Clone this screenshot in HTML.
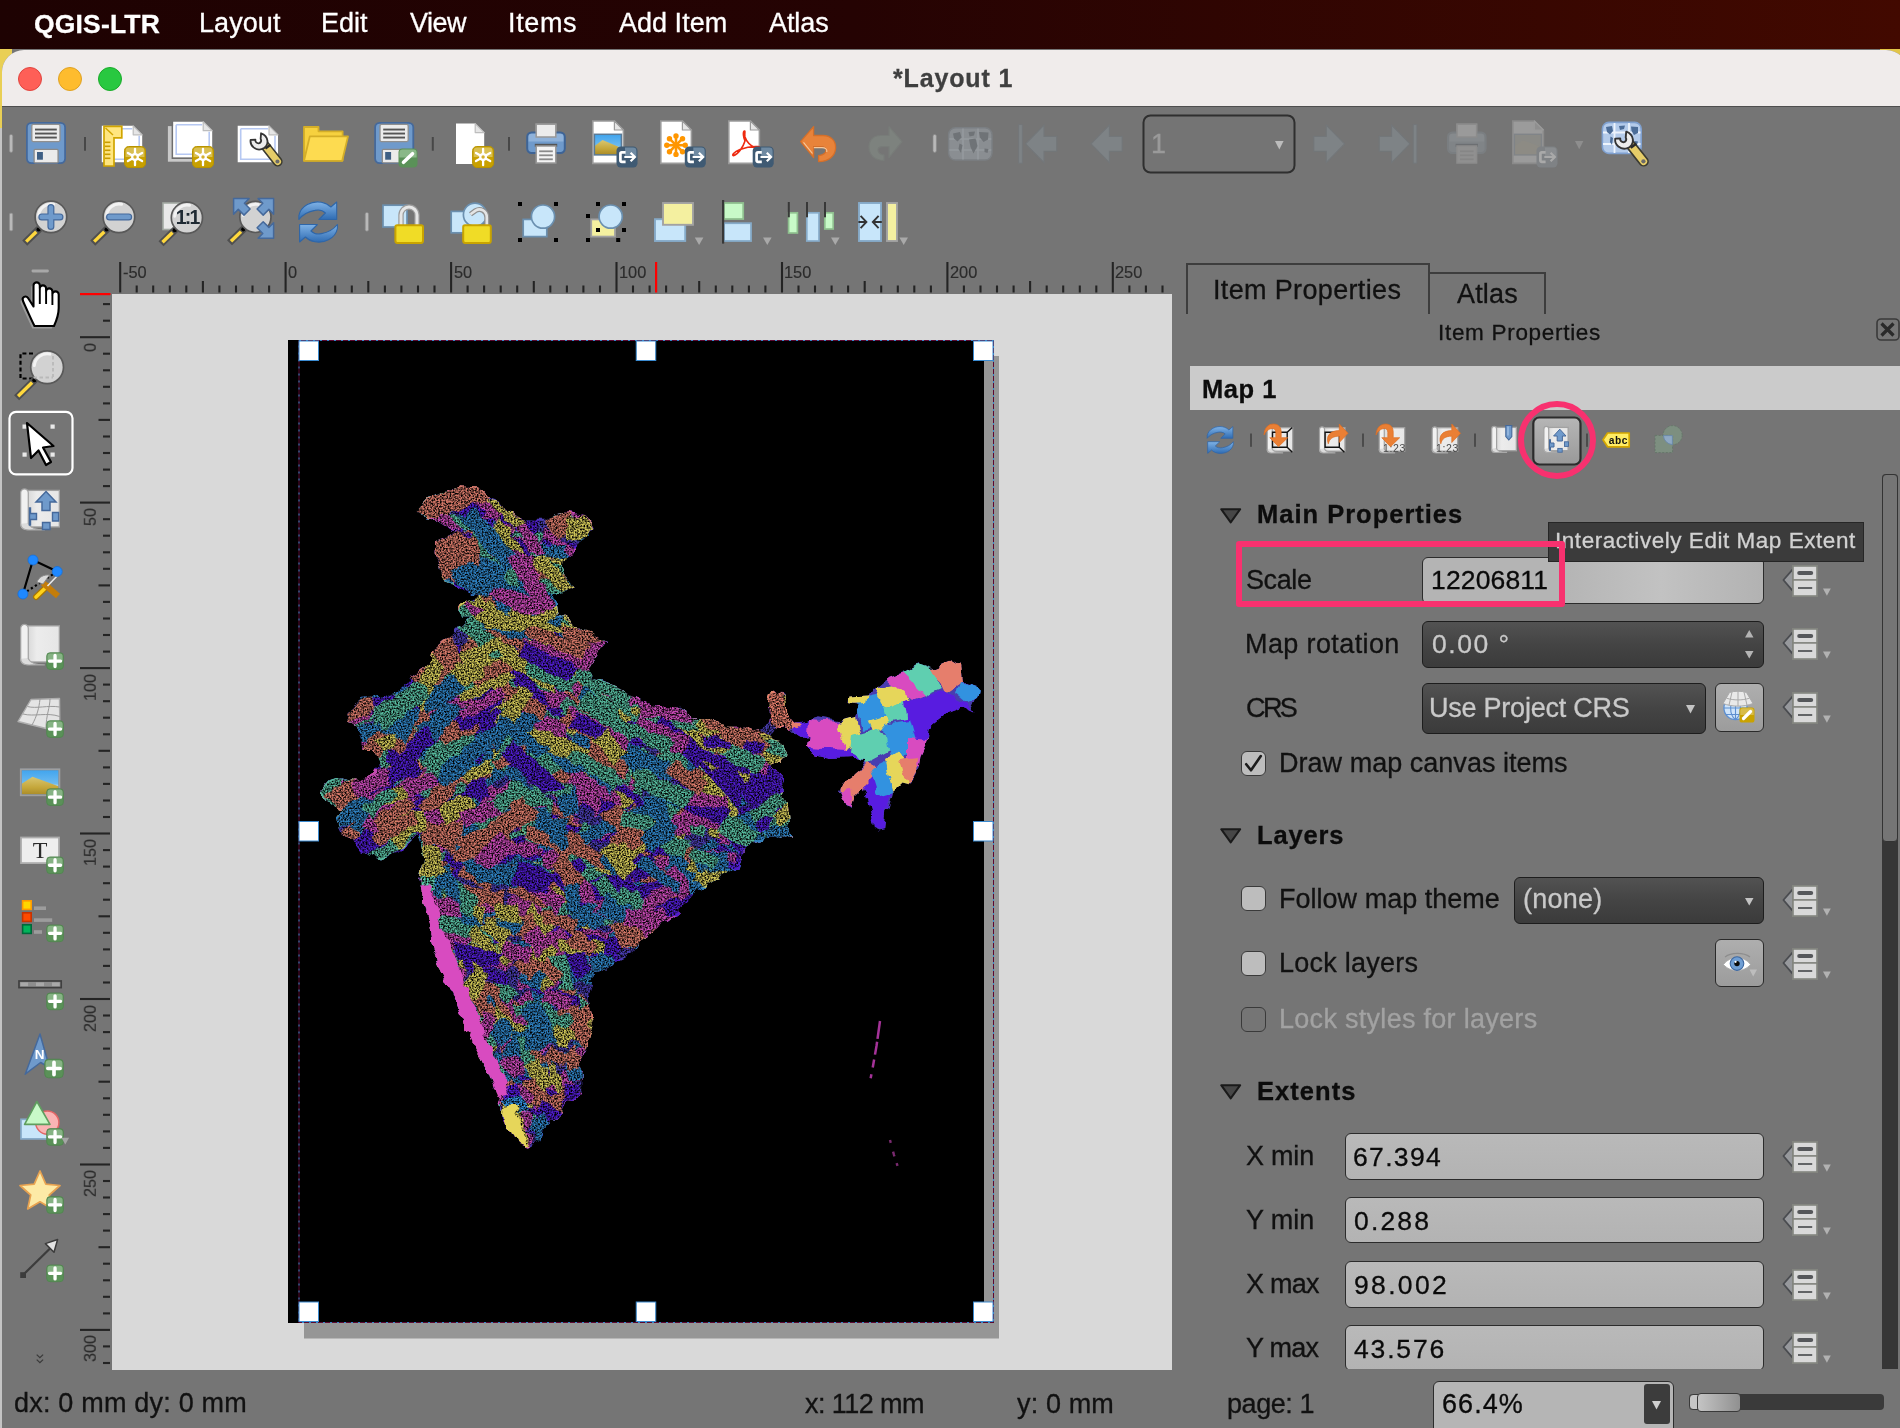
<!DOCTYPE html><html><head><meta charset="utf-8"><title>*Layout 1</title><style>
html,body{margin:0;padding:0}
body{width:1900px;height:1428px;position:relative;overflow:hidden;background:#757575;font-family:"Liberation Sans",sans-serif;}
.t{position:absolute;white-space:pre;will-change:transform;-webkit-text-stroke:0.300px currentColor;}
.abs{position:absolute}
svg{position:absolute;overflow:visible}
#menubar{position:absolute;left:0;top:0;width:1900px;height:49px;background:linear-gradient(90deg,#1e0202 0%,#250303 45%,#420900 100%);}
#deskL{position:absolute;left:0;top:49px;width:12px;height:82px;background:#e9cf55}
#deskR{position:absolute;left:1880px;top:49px;width:20px;height:20px;background:#e2c548}
#edgeL{position:absolute;left:0;top:128px;width:3px;height:1300px;background:#c4c4c4}
#win{position:absolute;left:2px;top:49.500px;width:1906px;height:1400px;background:#757575;border-radius:22px 22px 12px 12px;overflow:hidden}
#titlebar{position:absolute;left:0;top:0;width:100%;height:56px;background:#f0eceb;border-bottom:1.5px solid #4e4e4e}
.tl{position:absolute;top:17px;width:24px;height:24px;border-radius:50%;box-sizing:border-box}
#canvas{position:absolute;left:112px;top:294px;width:1060px;height:1076px;background:#d9d9d9;overflow:hidden}

.tab{position:absolute;box-sizing:border-box;border:2px solid #3d3d3d;border-bottom:none}
#band{position:absolute;left:1190px;top:366px;width:720px;height:44px;background:#cbcbcb}
.inp{position:absolute;box-sizing:border-box;border:1.5px solid #2c2c2c;border-radius:6px;background:linear-gradient(180deg,#b9b9b9,#b3b3b3)}
.dark{position:absolute;box-sizing:border-box;border:1.5px solid #1d1d1d;border-radius:6px;background:linear-gradient(180deg,#525252 0%,#444 50%,#3b3b3b 100%)}
.btn{position:absolute;box-sizing:border-box;border:1.5px solid #2a2a2a;border-radius:6px;background:linear-gradient(180deg,#aeaeae,#9c9c9c)}
.cb{position:absolute;box-sizing:border-box;width:25px;height:25px;border:1.5px solid #3a3a3a;border-radius:6px;background:#bdbdbd}
#tip{position:absolute;left:1548px;top:522px;width:316px;height:40px;box-sizing:border-box;background:#3b3b3b;border:1.5px solid #262626}
#hl{position:absolute;left:1236px;top:541px;width:329px;height:66px;box-sizing:border-box;border:6px solid #f8316f;border-radius:3px}
#ring{position:absolute;left:1518px;top:401px;width:78px;height:78px;box-sizing:border-box;border:6px solid #f8316f;border-radius:50%}
</style></head><body>
<div id="deskL"></div><div id="deskR"></div><div id="edgeL"></div>
<div id="win"><div id="titlebar">
<div class="tl" style="left:16px;background:#fe5f57;border:1px solid #e0443e"></div>
<div class="tl" style="left:56px;background:#febc2e;border:1px solid #dea123"></div>
<div class="tl" style="left:96px;background:#28c840;border:1px solid #1aab29"></div>
</div></div>
<div id="menubar"></div>
<span class="t" style="left:33.54px;top:10.67px;font-size:26.50px;line-height:26.50px;color:#ffffff;letter-spacing:0.163px;font-weight:bold;">QGIS-LTR</span>
<span class="t" style="left:198.74px;top:10.14px;font-size:27.00px;line-height:27.00px;color:#ffffff;letter-spacing:0.079px;">Layout</span>
<span class="t" style="left:321.24px;top:10.14px;font-size:27.00px;line-height:27.00px;color:#ffffff;letter-spacing:0.018px;">Edit</span>
<span class="t" style="left:410.47px;top:10.14px;font-size:27.00px;line-height:27.00px;color:#ffffff;letter-spacing:-0.505px;">View</span>
<span class="t" style="left:508.32px;top:10.14px;font-size:27.00px;line-height:27.00px;color:#ffffff;letter-spacing:0.652px;">Items</span>
<span class="t" style="left:619.25px;top:10.14px;font-size:27.00px;line-height:27.00px;color:#ffffff;letter-spacing:0.017px;">Add Item</span>
<span class="t" style="left:768.75px;top:10.14px;font-size:27.00px;line-height:27.00px;color:#ffffff;letter-spacing:-0.095px;">Atlas</span>
<span class="t" style="left:892.88px;top:65.94px;font-size:25.00px;line-height:25.00px;color:#3f3f3f;letter-spacing:0.856px;font-weight:bold;">*Layout 1</span>
<svg style="left:0;top:0" width="1900" height="1428" viewBox="0 0 1900 1428"><rect x="9.4" y="134.4" width="3.4" height="18" rx="1.7" fill="#b9b9b9" stroke="#8a8a8a" stroke-width="0.7"/><g transform="translate(26 122)"><rect x="0.9" y="0.9" width="38.2" height="40.2" rx="4.5" fill="#6f9acb" stroke="#45699b" stroke-width="1.8"/><rect x="5.8" y="2.3" width="28.2" height="17.3" rx="1.5" fill="#ececec" stroke="#8f8f8f" stroke-width="1.3"/><rect x="9" y="6.6" width="21.8" height="1.9" fill="#555"/><rect x="9" y="10.6" width="21.8" height="1.9" fill="#555"/><rect x="9" y="14.6" width="21.8" height="1.9" fill="#555"/><rect x="8.1" y="27.4" width="24" height="13.4" rx="1" fill="#ebebeb" stroke="#8a8a8a" stroke-width="1.3"/><rect x="11" y="30" width="5.9" height="7.7" fill="#3e5f84"/></g><rect x="84" y="137" width="2" height="13.7" fill="#474747"/><g transform="translate(101.8 125.8)"><path d="M0 0H31.4L40.4 9V36.5H0Z" fill="#fff" stroke="none" stroke-width="1.6"/><path d="M3 3H30.4M37.4 10V33.5H3V3" fill="none" stroke="#b6c8f2" stroke-width="1.6"/><path d="M31.4 0V9H40.4Z" fill="#e6e6e6" stroke="#bdbdbd" stroke-width="1.2" stroke-linejoin="round"/></g><path d="M104 126.4H121.8V137.8H114V166H104Z" fill="#ffe680" stroke="#d1a500" stroke-width="1.7"/><path d="M105.5 128L113 135" stroke="#d1a500" stroke-width="1.4"/><rect x="104.8" y="141.5" width="5.6" height="1.6" fill="#c99c00"/><rect x="104.8" y="145.5" width="5.6" height="1.6" fill="#c99c00"/><rect x="104.8" y="149.5" width="5.6" height="1.6" fill="#c99c00"/><rect x="104.8" y="153.5" width="5.6" height="1.6" fill="#c99c00"/><rect x="104.8" y="157.5" width="5.6" height="1.6" fill="#c99c00"/><g transform="translate(124 146)"><rect x="0.5" y="0.5" width="21" height="21" rx="4.2" fill="#c8a000" stroke="#b89400" stroke-width="1"/><path d="M1.6 11V5a3.4 3.4 0 0 1 3.4-3.4H17a3.4 3.4 0 0 1 3.4 3.4V11Z" fill="#d9bf52"/><line x1="11" y1="11" x2="11.00" y2="2.80" stroke="#fff" stroke-width="2.3" stroke-linecap="round"/><line x1="11" y1="11" x2="3.90" y2="6.90" stroke="#fff" stroke-width="2.3" stroke-linecap="round"/><line x1="11" y1="11" x2="3.90" y2="15.10" stroke="#fff" stroke-width="2.3" stroke-linecap="round"/><line x1="11" y1="11" x2="11.00" y2="19.20" stroke="#fff" stroke-width="2.3" stroke-linecap="round"/><line x1="11" y1="11" x2="18.10" y2="15.10" stroke="#fff" stroke-width="2.3" stroke-linecap="round"/><line x1="11" y1="11" x2="18.10" y2="6.90" stroke="#fff" stroke-width="2.3" stroke-linecap="round"/><circle cx="11" cy="11" r="3.9" fill="#fff"/><circle cx="11" cy="11" r="1.7" fill="#d4b030"/></g><rect x="167.9" y="126.1" width="36" height="35.6" fill="#c9c9c9"/><path d="M172.400 121.700V158.100H212.200" fill="none" stroke="#6e6e6e" stroke-width="1.600"/><g transform="translate(173.2 121.7)"><path d="M0 0H30L39 9V35.6H0Z" fill="#fff" stroke="none" stroke-width="1.6"/><path d="M3 3H29M36 10V32.6H3V3" fill="none" stroke="#b6c8f2" stroke-width="1.6"/><path d="M30 0V9H39Z" fill="#e6e6e6" stroke="#bdbdbd" stroke-width="1.2" stroke-linejoin="round"/></g><g transform="translate(192 146)"><rect x="0.5" y="0.5" width="21" height="21" rx="4.2" fill="#c8a000" stroke="#b89400" stroke-width="1"/><path d="M1.6 11V5a3.4 3.4 0 0 1 3.4-3.4H17a3.4 3.4 0 0 1 3.4 3.4V11Z" fill="#d9bf52"/><line x1="11" y1="11" x2="11.00" y2="2.80" stroke="#fff" stroke-width="2.3" stroke-linecap="round"/><line x1="11" y1="11" x2="3.90" y2="6.90" stroke="#fff" stroke-width="2.3" stroke-linecap="round"/><line x1="11" y1="11" x2="3.90" y2="15.10" stroke="#fff" stroke-width="2.3" stroke-linecap="round"/><line x1="11" y1="11" x2="11.00" y2="19.20" stroke="#fff" stroke-width="2.3" stroke-linecap="round"/><line x1="11" y1="11" x2="18.10" y2="15.10" stroke="#fff" stroke-width="2.3" stroke-linecap="round"/><line x1="11" y1="11" x2="18.10" y2="6.90" stroke="#fff" stroke-width="2.3" stroke-linecap="round"/><circle cx="11" cy="11" r="3.9" fill="#fff"/><circle cx="11" cy="11" r="1.7" fill="#d4b030"/></g><g transform="translate(237.7 125.8)"><path d="M0 0H31.3L40.3 9V36.5H0Z" fill="#fff" stroke="none" stroke-width="1.6"/><path d="M3 3H30.3M37.3 10V33.5H3V3" fill="none" stroke="#b6c8f2" stroke-width="1.6"/><path d="M31.3 0V9H40.3Z" fill="#e6e6e6" stroke="#bdbdbd" stroke-width="1.2" stroke-linejoin="round"/></g><g transform="translate(248.3 128.6) scale(1.2)"><line x1="13" y1="13" x2="24.5" y2="27.5" stroke="#3a3a30" stroke-width="8.2" stroke-linecap="round"/><line x1="13" y1="13" x2="24.5" y2="27.5" stroke="#e6cd68" stroke-width="5.6" stroke-linecap="round"/><line x1="14.2" y1="16.6" x2="18.6" y2="13.4" stroke="#2a2a2a" stroke-width="2"/><circle cx="24.3" cy="27.4" r="1.7" fill="#6a6a6a"/><path d="M2.2 8.4C0.8 13.4 5.2 18 10.2 17.4C13.6 17 16 14.2 16 11C16 8 14.4 5.6 11.6 4.2L10.6 8.8C11.4 10.4 10.2 12.4 8.4 12.2C6.800 12 5.6 10.400 6.200 8.8Z" fill="#ececec" stroke="#333" stroke-width="1.5" stroke-linejoin="round" transform="rotate(-8 9 11)"/></g><path d="M304 127H318.500V131.300H342.600V160.600H304Z" fill="#f6d13f" stroke="#d4ae28" stroke-width="1.8" stroke-linejoin="round"/><path d="M309.800 136.400H348L342.200 160.800H304Z" fill="#fddb50" stroke="#d4ae28" stroke-width="1.8" stroke-linejoin="round"/><g transform="translate(374.2 122)"><rect x="0.9" y="0.9" width="38.2" height="40.2" rx="4.5" fill="#6f9acb" stroke="#45699b" stroke-width="1.8"/><rect x="5.8" y="2.3" width="28.2" height="17.3" rx="1.5" fill="#ececec" stroke="#8f8f8f" stroke-width="1.3"/><rect x="9" y="6.6" width="21.8" height="1.9" fill="#555"/><rect x="9" y="10.6" width="21.8" height="1.9" fill="#555"/><rect x="9" y="14.6" width="21.8" height="1.9" fill="#555"/><rect x="8.1" y="27.4" width="24" height="13.4" rx="1" fill="#ebebeb" stroke="#8a8a8a" stroke-width="1.3"/><rect x="11" y="30" width="5.9" height="7.7" fill="#3e5f84"/></g><g transform="translate(398 148)"><rect x="0.5" y="0.5" width="19" height="19" rx="4" fill="#5a9158"/><path d="M1.4 9.5V4.6a3.2 3.2 0 0 1 3.2-3.2H15.4a3.2 3.2 0 0 1 3.2 3.2V9.5Z" fill="#8ab888"/><line x1="5.5" y1="14.3" x2="14.5" y2="5.7" stroke="#fff" stroke-width="3.6" stroke-linecap="round"/></g><rect x="431.8" y="137" width="2" height="13.7" fill="#474747"/><g transform="translate(456 123.6)"><path d="M0 0H19.2L28.2 9V40.4H0Z" fill="#fff" stroke="none" stroke-width="1.6"/><path d="M19.2 0V9H28.2Z" fill="#e6e6e6" stroke="#bdbdbd" stroke-width="1.2" stroke-linejoin="round"/></g><g transform="translate(472.1 146)"><rect x="0.5" y="0.5" width="21" height="21" rx="4.2" fill="#c8a000" stroke="#b89400" stroke-width="1"/><path d="M1.6 11V5a3.4 3.4 0 0 1 3.4-3.4H17a3.4 3.4 0 0 1 3.4 3.4V11Z" fill="#d9bf52"/><line x1="11" y1="11" x2="11.00" y2="2.80" stroke="#fff" stroke-width="2.3" stroke-linecap="round"/><line x1="11" y1="11" x2="3.90" y2="6.90" stroke="#fff" stroke-width="2.3" stroke-linecap="round"/><line x1="11" y1="11" x2="3.90" y2="15.10" stroke="#fff" stroke-width="2.3" stroke-linecap="round"/><line x1="11" y1="11" x2="11.00" y2="19.20" stroke="#fff" stroke-width="2.3" stroke-linecap="round"/><line x1="11" y1="11" x2="18.10" y2="15.10" stroke="#fff" stroke-width="2.3" stroke-linecap="round"/><line x1="11" y1="11" x2="18.10" y2="6.90" stroke="#fff" stroke-width="2.3" stroke-linecap="round"/><circle cx="11" cy="11" r="3.9" fill="#fff"/><circle cx="11" cy="11" r="1.7" fill="#d4b030"/></g><rect x="508" y="137" width="2" height="13.7" fill="#474747"/><g transform="translate(526.2 123.4)"><rect x="10" y="0.8" width="19.6" height="14" fill="#ececec" stroke="#999" stroke-width="1.5"/><rect x="1" y="9" width="37.6" height="20.6" rx="4.4" fill="#6f9acb" stroke="#3e6496" stroke-width="2"/><path d="M2.4 18V13.6a3.2 3.2 0 0 1 3.2-3.2H34a3.2 3.2 0 0 1 3.2 3.2V18Z" fill="#8fb2da"/><rect x="10" y="0.800" width="19.600" height="12.800" fill="#ececec" stroke="#999" stroke-width="1.500"/><rect x="8.6" y="20.4" width="22.4" height="3" fill="#555"/><rect x="10" y="22.6" width="19.6" height="17" fill="#f4f4f4" stroke="#999" stroke-width="1.5"/><rect x="13" y="27" width="13.6" height="1.8" fill="#8a8a8a"/><rect x="13" y="31" width="13.6" height="1.8" fill="#8a8a8a"/><rect x="13" y="35" width="13.6" height="1.8" fill="#8a8a8a"/></g><g transform="translate(592.8 121)"><path d="M0 0H21.6L30.6 9V42.4H0Z" fill="#fff" stroke="#9a9a9a" stroke-width="1.6"/><path d="M21.6 0V9H30.6Z" fill="#e6e6e6" stroke="#9a9a9a" stroke-width="1.2" stroke-linejoin="round"/></g><g transform="translate(594.4 134.3)"><defs><linearGradient id="pg594_134" x1="0" y1="0" x2="0" y2="1"><stop offset="0" stop-color="#3fa4ee"/><stop offset="0.55" stop-color="#6dbaf0"/><stop offset="0.7" stop-color="#d0e4f0"/></linearGradient><linearGradient id="pg594_134s" x1="0" y1="0" x2="0" y2="1"><stop offset="0" stop-color="#d9c670"/><stop offset="0.6" stop-color="#c4a63a"/><stop offset="1" stop-color="#a88a28"/></linearGradient></defs><rect x="0" y="0" width="27" height="20.6" fill="url(#pg594_134)"/><path d="M0 11.948L8.1 5.768L27 13.596V20.6H0Z" fill="url(#pg594_134s)"/><rect x="0" y="0" width="27" height="20.6" fill="none" stroke="#5b7a96" stroke-width="1.5"/></g><g transform="translate(616 146)"><rect x="0.5" y="0.5" width="21" height="21" rx="4.2" fill="#3f5a73"/><path d="M9 1.6H17a3.4 3.4 0 0 1 3.4 3.4V10.5H9Z" fill="#6f8aa2"/><path d="M9.6 6.3H5.8a1.4 1.4 0 0 0-1.4 1.4v6.8a1.4 1.4 0 0 0 1.4 1.4H9.6" fill="none" stroke="#fff" stroke-width="2.7"/><path d="M8.3 11H18.5M14.6 6.7L18.9 11L14.6 15.3" fill="none" stroke="#fff" stroke-width="2.2"/></g><g transform="translate(660.8 121)"><path d="M0 0H21.6L30.6 9V42.4H0Z" fill="#fff" stroke="#9a9a9a" stroke-width="1.6"/><path d="M21.6 0V9H30.6Z" fill="#e6e6e6" stroke="#9a9a9a" stroke-width="1.2" stroke-linejoin="round"/></g><line x1="676" y1="145.2" x2="676.00" y2="136.00" stroke="#ff9600" stroke-width="2.6"/><circle cx="676.00" cy="136.00" r="2.7" fill="#ff9600"/><line x1="676" y1="145.2" x2="669.49" y2="138.69" stroke="#ff9600" stroke-width="2.6"/><circle cx="669.49" cy="138.69" r="2.7" fill="#ff9600"/><line x1="676" y1="145.2" x2="666.80" y2="145.20" stroke="#ff9600" stroke-width="2.6"/><circle cx="666.80" cy="145.20" r="2.7" fill="#ff9600"/><line x1="676" y1="145.2" x2="669.49" y2="151.71" stroke="#ff9600" stroke-width="2.6"/><circle cx="669.49" cy="151.71" r="2.7" fill="#ff9600"/><line x1="676" y1="145.2" x2="676.00" y2="154.40" stroke="#ff9600" stroke-width="2.6"/><circle cx="676.00" cy="154.40" r="2.7" fill="#ff9600"/><line x1="676" y1="145.2" x2="682.51" y2="151.71" stroke="#ff9600" stroke-width="2.6"/><circle cx="682.51" cy="151.71" r="2.7" fill="#ff9600"/><line x1="676" y1="145.2" x2="685.20" y2="145.20" stroke="#ff9600" stroke-width="2.6"/><circle cx="685.20" cy="145.20" r="2.7" fill="#ff9600"/><line x1="676" y1="145.2" x2="682.51" y2="138.69" stroke="#ff9600" stroke-width="2.6"/><circle cx="682.51" cy="138.69" r="2.7" fill="#ff9600"/><g transform="translate(684.3 146)"><rect x="0.5" y="0.5" width="21" height="21" rx="4.2" fill="#3f5a73"/><path d="M9 1.6H17a3.4 3.4 0 0 1 3.4 3.4V10.5H9Z" fill="#6f8aa2"/><path d="M9.6 6.3H5.8a1.4 1.4 0 0 0-1.4 1.4v6.8a1.4 1.4 0 0 0 1.4 1.4H9.6" fill="none" stroke="#fff" stroke-width="2.7"/><path d="M8.3 11H18.5M14.6 6.7L18.9 11L14.6 15.3" fill="none" stroke="#fff" stroke-width="2.2"/></g><g transform="translate(728.8 121)"><path d="M0 0H21.6L30.6 9V42.4H0Z" fill="#fff" stroke="#9a9a9a" stroke-width="1.6"/><path d="M21.6 0V9H30.6Z" fill="#e6e6e6" stroke="#9a9a9a" stroke-width="1.2" stroke-linejoin="round"/></g><path d="M744.400 131C742.600 131.600 743.400 137.400 745 141C743 147.500 738 154.500 733.500 155.600C731.500 155.400 733.500 152 740 149.500C746 147.200 752 146 758.500 146.600C761 147.400 759 149 755.500 148C751 146 746.500 141.500 745 137C744.200 134.200 745.600 130.800 744.400 131Z" fill="none" stroke="#ee2a10" stroke-width="1.6" stroke-linejoin="round"/><g transform="translate(752.2 146)"><rect x="0.5" y="0.5" width="21" height="21" rx="4.2" fill="#3f5a73"/><path d="M9 1.6H17a3.4 3.4 0 0 1 3.4 3.4V10.5H9Z" fill="#6f8aa2"/><path d="M9.6 6.3H5.8a1.4 1.4 0 0 0-1.4 1.4v6.8a1.4 1.4 0 0 0 1.4 1.4H9.6" fill="none" stroke="#fff" stroke-width="2.7"/><path d="M8.3 11H18.5M14.6 6.7L18.9 11L14.6 15.3" fill="none" stroke="#fff" stroke-width="2.2"/></g><path d="M800.600 141.600L813.600 126.600V135.500H823C831 135.500 836 141 835.600 148C835.200 156 829 161.600 818.600 161.600V155.600C824 155 826.400 152.400 826 149.600C825.600 147.400 824 146.600 821.400 146.600H813.600V157.600Z" fill="#e8833a" stroke="#d46f2a" stroke-width="1.3" stroke-linejoin="round"/><path d="M803.500 142.400L812.500 153.500M813.800 147.600H822C825 147.600 827.400 149 826.800 152" fill="none" stroke="#f8c89a" stroke-width="1.1"/><path d="M902 141.600L889 126.600V135.500H880.600C872.600 135.500 868.600 141 869 148C869.400 155 875 160.500 884 160.500V155C879.600 154.600 877.600 152 878 149.400C878.400 147.400 880 146.600 882.600 146.600H889V157.600Z" fill="#7d827e" stroke="#787c79" stroke-width="1.2" stroke-linejoin="round"/><rect x="933" y="134.4" width="3.4" height="18" rx="1.7" fill="#b9b9b9" stroke="#8a8a8a" stroke-width="0.7"/><rect x="948.600" y="127.800" width="43.400" height="32.200" rx="7" fill="#8a8e92" stroke="#7b7f83" stroke-width="1.4"/><path d="M963 128.500V159.500M978 128.500V159.500M949.300 139H991.300M949.300 150H991.300" stroke="#959a9e" stroke-width="1.6"/><path d="M953 133.500L960 132L961.500 137.500L957.500 141.500L954 138.500ZM959.500 143.500L962.500 145L961 153L958.500 149ZM968.500 132L975 131.500L974 135.500L969.500 136.500ZM969 139.500L975.500 138.500L977.500 146L973.500 153.500L970.500 147ZM979 132L988.500 132.500L988 139.500L983.500 142L980 137.500ZM984.500 148.500L988.500 149L987.500 153L984.500 152Z" fill="#6f7377"/><rect x="1018.700" y="124.600" width="3.600" height="38.600" fill="#7e8386" stroke="#73777a" stroke-width="0.9"/><path d="M1025.600 143.800L1044 125V136.400H1056.800V151.200H1044V162.600Z" fill="#7e8386" stroke="#73777a" stroke-width="1.1"/><path d="M1091 143.800L1109.400 125V136.400H1122.200V151.200H1109.400V162.600Z" fill="#7e8386" stroke="#73777a" stroke-width="1.1"/><rect x="1143.500" y="115.500" width="151" height="57" rx="7" fill="#747474" stroke="#2f2f2f" stroke-width="2"/><path d="M1275 141h8.6l-4.3 8.4Z" fill="#bcbcbc"/><path d="M1344.600 143.800L1326.200 125V136.400H1313.800V151.200H1326.200V162.600Z" fill="#7e8386" stroke="#73777a" stroke-width="1.1"/><path d="M1410 143.800L1391.600 125V136.400H1379.200V151.200H1391.600V162.600Z" fill="#7e8386" stroke="#73777a" stroke-width="1.1"/><rect x="1413.300" y="124.600" width="3.600" height="38.600" fill="#7e8386" stroke="#73777a" stroke-width="0.9"/><g transform="translate(1447 123.4)"><rect x="10" y="0.8" width="19.6" height="14" fill="#9a9a9a" stroke="#8c8c8c" stroke-width="1.5"/><rect x="1" y="9" width="37.6" height="20.6" rx="4.4" fill="#808487" stroke="#7a7e81" stroke-width="2"/><path d="M2.4 18V13.6a3.2 3.2 0 0 1 3.2-3.2H34a3.2 3.2 0 0 1 3.2 3.2V18Z" fill="#868a8d"/><rect x="10" y="0.800" width="19.600" height="12.800" fill="#9a9a9a" stroke="#8c8c8c" stroke-width="1.500"/><rect x="8.6" y="20.4" width="22.4" height="3" fill="#6c6f72"/><rect x="10" y="22.6" width="19.6" height="17" fill="#909090" stroke="#8c8c8c" stroke-width="1.5"/><rect x="13" y="27" width="13.6" height="1.8" fill="#868686"/><rect x="13" y="31" width="13.6" height="1.8" fill="#868686"/><rect x="13" y="35" width="13.6" height="1.8" fill="#868686"/></g><g transform="translate(1512.8 121)"><path d="M0 0H21.6L30.6 9V42.4H0Z" fill="#9b9b9b" stroke="#8a8a8a" stroke-width="1.6"/><path d="M21.6 0V9H30.6Z" fill="#8f8f8f" stroke="#9a9a9a" stroke-width="1.2" stroke-linejoin="round"/></g><g transform="translate(1514.4 134.3)"><rect x="0" y="0" width="27" height="20.6" fill="#8a8a86" stroke="#808488" stroke-width="1.4"/><path d="M0.7 11.33L8.64 6.18L26.3 12.36V19.9H0.7Z" fill="#8d8b84"/></g><g transform="translate(1536 146)"><rect x="0.5" y="0.5" width="21" height="21" rx="4.2" fill="#7f8285"/><path d="M9 1.6H17a3.4 3.4 0 0 1 3.4 3.4V10.5H9Z" fill="#8a8d90"/><path d="M9.6 6.3H5.8a1.4 1.4 0 0 0-1.4 1.4v6.8a1.4 1.4 0 0 0 1.4 1.4H9.6" fill="none" stroke="#a9a9a9" stroke-width="2.7"/><path d="M8.3 11H18.5M14.6 6.7L18.9 11L14.6 15.3" fill="none" stroke="#a9a9a9" stroke-width="2.2"/></g><path d="M1575 141h8.4l-4.2 8.2Z" fill="#8e8e8e"/><rect x="1602.400" y="122.400" width="38.800" height="31" rx="6.500" fill="#b4cbea" stroke="#7fa0cf" stroke-width="1.600"/><path d="M1614.500 123V153M1629 123V153M1603 132.500H1640.500M1603 144H1640.500" stroke="#eef4fc" stroke-width="1.800"/><path d="M1606 127L1612 126L1613 131L1610 134.500L1607 132ZM1610.500 136.500L1613 138L1612 145L1610 142ZM1619 126L1625 125.500L1624 129L1620 130ZM1631 126.500L1638 127V133L1634 135L1631.500 131ZM1634.500 141L1638 141.500L1637 145L1634.500 144.500ZM1620 146L1624 145L1623 149.500Z" fill="#4c6d98"/><g transform="translate(1612.8 126.8) scale(1.26)"><line x1="13" y1="13" x2="24.5" y2="27.5" stroke="#3a3a30" stroke-width="8.2" stroke-linecap="round"/><line x1="13" y1="13" x2="24.5" y2="27.5" stroke="#e6cd68" stroke-width="5.6" stroke-linecap="round"/><line x1="14.2" y1="16.6" x2="18.6" y2="13.4" stroke="#2a2a2a" stroke-width="2"/><circle cx="24.3" cy="27.4" r="1.7" fill="#6a6a6a"/><path d="M2.2 8.4C0.8 13.4 5.2 18 10.2 17.4C13.6 17 16 14.2 16 11C16 8 14.4 5.6 11.6 4.2L10.6 8.8C11.4 10.4 10.2 12.4 8.4 12.2C6.800 12 5.6 10.400 6.200 8.8Z" fill="#ececec" stroke="#333" stroke-width="1.5" stroke-linejoin="round" transform="rotate(-8 9 11)"/></g><rect x="9.4" y="213" width="3.4" height="18" rx="1.7" fill="#b9b9b9" stroke="#8a8a8a" stroke-width="0.7"/><line x1="39.5" y1="228.6" x2="24.7" y2="243.1" stroke="#4f4f4f" stroke-width="7.2" stroke-linecap="butt"/><line x1="36.3" y1="231.8" x2="26.2" y2="241.6" stroke="#ffd83d" stroke-width="3.4"/><circle cx="38.6" cy="229.5" r="2.1" fill="#000"/><circle cx="50.9" cy="216.9" r="15.8" fill="#d2d2d2" stroke="#595959" stroke-width="1.7"/><path d="M38.6 215.3a12.6 12.6 0 0 1 15.0 -11.1" fill="none" stroke="#f2f2f2" stroke-width="3" stroke-linecap="round"/><path d="M41.800 216.900H60M50.900 207.600V226.400" stroke="#45699b" stroke-width="7" stroke-linecap="round"/><path d="M41.800 216.900H60M50.900 207.600V226.400" stroke="#6f9acb" stroke-width="4.600" stroke-linecap="round"/><line x1="107.5" y1="228.6" x2="92.7" y2="243.1" stroke="#4f4f4f" stroke-width="7.2" stroke-linecap="butt"/><line x1="104.3" y1="231.8" x2="94.2" y2="241.6" stroke="#ffd83d" stroke-width="3.4"/><circle cx="106.6" cy="229.5" r="2.1" fill="#000"/><circle cx="118.9" cy="216.9" r="15.8" fill="#d2d2d2" stroke="#595959" stroke-width="1.7"/><path d="M106.6 215.3a12.6 12.6 0 0 1 15.0 -11.1" fill="none" stroke="#f2f2f2" stroke-width="3" stroke-linecap="round"/><path d="M109.500 216.900H128.700" stroke="#45699b" stroke-width="7" stroke-linecap="round"/><path d="M109.500 216.900H128.700" stroke="#6f9acb" stroke-width="4.600" stroke-linecap="round"/><rect x="163" y="203" width="21" height="26.500" fill="#e9e9e9" stroke="#a3aaa3" stroke-width="1.600"/><line x1="175.7" y1="229.3" x2="161.0" y2="243.7" stroke="#4f4f4f" stroke-width="7.2" stroke-linecap="butt"/><line x1="172.5" y1="232.5" x2="162.5" y2="242.2" stroke="#ffd83d" stroke-width="3.4"/><circle cx="174.8" cy="230.2" r="2.1" fill="#000"/><circle cx="186.9" cy="217.8" r="15.6" fill="#d2d2d2" stroke="#595959" stroke-width="1.7"/><path d="M174.7 216.2a12.5 12.5 0 0 1 14.8 -10.9" fill="none" stroke="#f2f2f2" stroke-width="3" stroke-linecap="round"/><text x="187.200" y="224" text-anchor="middle" font-family="Liberation Sans, sans-serif" font-weight="bold" font-size="19.500" letter-spacing="-1.700" fill="#1f2a33">1:1</text><line x1="244.2" y1="228.4" x2="229.5" y2="242.8" stroke="#4f4f4f" stroke-width="7.2" stroke-linecap="butt"/><line x1="241.0" y1="231.6" x2="231.0" y2="241.3" stroke="#ffd83d" stroke-width="3.4"/><circle cx="243.3" cy="229.3" r="2.1" fill="#000"/><circle cx="255.4" cy="216.9" r="15.6" fill="#d2d2d2" stroke="#595959" stroke-width="1.7"/><path d="M243.2 215.3a12.5 12.5 0 0 1 14.8 -10.9" fill="none" stroke="#f2f2f2" stroke-width="3" stroke-linecap="round"/><path d="M0 0H15.500L10.800 4.700L16.500 10.400L10.400 16.500L4.700 10.800L0 15.500Z" transform="translate(233.600 198.600)" fill="#6f9acb" stroke="#45699b" stroke-width="1.500" stroke-linejoin="round"/><path d="M0 0H15.500L10.800 4.700L16.500 10.400L10.400 16.500L4.700 10.800L0 15.500Z" transform="translate(273.600 198.600) scale(-1 1)" fill="#6f9acb" stroke="#45699b" stroke-width="1.500" stroke-linejoin="round"/><path d="M0 0H15.500L10.800 4.700L16.500 10.400L10.400 16.500L4.700 10.800L0 15.500Z" transform="translate(273.600 238.200) scale(-1 -1)" fill="#6f9acb" stroke="#45699b" stroke-width="1.500" stroke-linejoin="round"/><g transform="translate(297.9 200) scale(1 1)"><defs><linearGradient id="rg297" x1="0" y1="0" x2="0" y2="1"><stop offset="0" stop-color="#7fb2e6"/><stop offset="1" stop-color="#2f6cb3"/></linearGradient></defs><path d="M1 15.5C3 5.5 14 0.5 23.5 2.2C28 3 31 5 33 7L38.8 2V19.5H21L27.5 13C25 10.5 21 9.6 17 10.4C10 11.6 5 14.5 1 19.5Z" fill="url(#rg297)" stroke="#2f66a8" stroke-width="1.1" stroke-linejoin="round"/><path d="M39.5 28.5C37.5 38.5 26.5 43.5 17 41.8C12.5 41 9.5 39 7.5 37L1.7 42V24.5H19.5L13 31C15.5 33.5 19.5 34.4 23.5 33.6C30.5 32.4 35.5 29.5 39.5 24.5Z" fill="url(#rg297)" stroke="#2f66a8" stroke-width="1.1" stroke-linejoin="round"/></g><rect x="365.2" y="212.4" width="3.4" height="18.8" rx="1.7" fill="#b9b9b9" stroke="#8a8a8a" stroke-width="0.7"/><rect x="383" y="205.200" width="24" height="21.800" fill="#c8e6fa" stroke="#6b90b0" stroke-width="1.700"/><path d="M401 226V215a8 8 0 0 1 16 0V226" fill="none" stroke="#9b9b9b" stroke-width="5.400"/><path d="M401 226V215a8 8 0 0 1 16 0V226" fill="none" stroke="#e6e6e6" stroke-width="3"/><rect x="395.400" y="225.300" width="27.600" height="17.600" rx="1.800" fill="#f0dc26" stroke="#c9a400" stroke-width="2"/><rect x="451.200" y="211.400" width="20" height="21.400" fill="#c8e6fa" stroke="#6b90b0" stroke-width="1.700"/><circle cx="475" cy="214.700" r="11.600" fill="#c8e6fa" stroke="#6b90b0" stroke-width="1.700"/><path d="M486.800 226V217.500C486.800 211 480.500 207.600 475.500 210.600L470.500 214.200" fill="none" stroke="#8f8f8f" stroke-width="5" stroke-linejoin="round"/><path d="M486.800 226V217.500C486.800 211 480.500 207.600 475.500 210.600L470.500 214.200" fill="none" stroke="#e4e4e4" stroke-width="2.600" stroke-linejoin="round"/><rect x="463.200" y="225.300" width="27.600" height="17.600" rx="1.800" fill="#f0dc26" stroke="#c9a400" stroke-width="2"/><rect x="523.200" y="219.400" width="23.600" height="17.200" fill="#c8e6fa" stroke="#6b90b0" stroke-width="1.700"/><circle cx="543" cy="216.600" r="11.600" fill="#c8e6fa" stroke="#6b90b0" stroke-width="1.700"/><rect x="518" y="202" width="4" height="4" fill="#000"/><rect x="554" y="202" width="4" height="4" fill="#000"/><rect x="518" y="238" width="4" height="4" fill="#000"/><rect x="554" y="238" width="4" height="4" fill="#000"/><rect x="591.200" y="219.400" width="23.800" height="17.200" fill="#f4f0a0" stroke="#a2a2a2" stroke-width="1.800"/><circle cx="610.700" cy="216.600" r="11.600" fill="#c8e6fa" stroke="#6b90b0" stroke-width="1.700"/><rect x="596" y="202" width="4" height="4" fill="#000"/><rect x="622" y="202" width="4" height="4" fill="#000"/><rect x="586" y="214" width="4" height="4" fill="#000"/><rect x="596" y="228" width="4" height="4" fill="#000"/><rect x="622" y="228" width="4" height="4" fill="#000"/><rect x="586" y="238" width="4" height="4" fill="#000"/><rect x="616.2" y="238" width="4" height="4" fill="#000"/><rect x="655" y="219.200" width="30.200" height="21.800" fill="#c8e6fa" stroke="#86abc9" stroke-width="1.900"/><rect x="663" y="203" width="30" height="21.800" fill="#f4f0a0" stroke="#a2a2a2" stroke-width="1.900"/><path d="M694.8 237.4h8.6l-4.3 7.6Z" fill="#a9a9a9"/><rect x="724" y="203" width="19.200" height="16" fill="#c8fac8" stroke="#8fc08f" stroke-width="1.800"/><rect x="724" y="223.200" width="27" height="17.800" fill="#c8e6fa" stroke="#86abc9" stroke-width="1.800"/><rect x="722" y="200" width="2.200" height="43.600" fill="#383838"/><path d="M763 237.4h8.6l-4.3 7.6Z" fill="#a9a9a9"/><rect x="788.600" y="212.800" width="8.800" height="20.200" fill="#c8fac8" stroke="#8fc08f" stroke-width="1.700"/><rect x="806.800" y="212.800" width="12.200" height="28.200" fill="#c8e6fa" stroke="#86abc9" stroke-width="1.700"/><rect x="824.800" y="212.800" width="8.400" height="16.200" fill="#c8fac8" stroke="#8fc08f" stroke-width="1.700"/><rect x="787.8" y="202" width="2" height="15.300" fill="#383838"/><rect x="806" y="202" width="2" height="15.300" fill="#383838"/><rect x="824" y="202" width="2" height="15.300" fill="#383838"/><path d="M831 237.4h8.6l-4.3 7.6Z" fill="#a9a9a9"/><rect x="859" y="203" width="22" height="38" fill="#c8e6fa" stroke="#86abc9" stroke-width="1.900"/><rect x="887" y="203" width="10" height="38" fill="#f4f0a0" stroke="#a2a2a2" stroke-width="1.900"/><path d="M858.400 222H866M860.600 215.800L866.400 222L860.600 228.200M881.800 222H873.200M878.600 215.800L872.800 222L878.600 228.200" fill="none" stroke="#333" stroke-width="1.900"/><path d="M899.4 237.4h8.6l-4.3 7.6Z" fill="#a9a9a9"/><rect x="31.500" y="269.600" width="17.400" height="2.800" rx="1.400" fill="#a8a8a8"/><path d="M34.5 326C30.5 318 26.8 309.500 22.900 300.800C21.600 297.200 25.600 294.800 28.200 298.200L33.500 306.500V285.500a3.150 3.150 0 0 1 6.300 0V288.500a3.150 3.150 0 0 1 6.300 0V291.500a3.150 3.150 0 0 1 6.300 0V294.500a3.150 3.150 0 0 1 6.300 0V308C58.700 315.500 56.500 320.500 54 326Z" transform="translate(-2.200 2.400)" fill="#a2a2a2" opacity="0.850"/><path d="M34.5 326C30.5 318 26.8 309.500 22.900 300.800C21.600 297.200 25.600 294.800 28.200 298.200L33.500 306.500V285.500a3.150 3.150 0 0 1 6.300 0V288.500a3.150 3.150 0 0 1 6.300 0V291.500a3.150 3.150 0 0 1 6.300 0V294.500a3.150 3.150 0 0 1 6.300 0V308C58.700 315.500 56.500 320.500 54 326Z" fill="#fff" stroke="#000" stroke-width="2.100" stroke-linejoin="round"/><path d="M39.800 289V304M46.100 292V304M52.400 295V305" stroke="#000" stroke-width="1.900"/><path d="M33 353.500H20.500V378.500H33" fill="none" stroke="#000" stroke-width="2.200" stroke-dasharray="4 2.600"/><line x1="35.3" y1="379.3" x2="16.6" y2="397.7" stroke="#4f4f4f" stroke-width="7.2" stroke-linecap="butt"/><line x1="32.1" y1="382.5" x2="18.1" y2="396.2" stroke="#ffd83d" stroke-width="3.4"/><circle cx="34.4" cy="380.2" r="2.1" fill="#000"/><circle cx="47.1" cy="367.2" r="16.4" fill="#d2d2d2" stroke="#595959" stroke-width="1.7"/><path d="M34.3 365.6a13.1 13.1 0 0 1 15.6 -11.5" fill="none" stroke="#f2f2f2" stroke-width="3" stroke-linecap="round"/><path d="M53 356V377M33.500 377.500H53" fill="none" stroke="#b9b9b9" stroke-width="1.800" stroke-dasharray="3.500 2.500"/><rect x="9.500" y="411.800" width="63" height="62.600" rx="6.500" fill="none" stroke="#fff" stroke-width="2.200"/><rect x="22.5" y="424.5" width="4.200" height="4.200" fill="#e9e9e9"/><rect x="50.5" y="424.5" width="4.200" height="4.200" fill="#e9e9e9"/><rect x="22.5" y="452.5" width="4.200" height="4.200" fill="#e9e9e9"/><rect x="50.5" y="452.5" width="4.200" height="4.200" fill="#e9e9e9"/><path d="M27 423L53.500 446L43 447.500L51 462L46 465L38.500 450.500L31 458Z" fill="#fff" stroke="#000" stroke-width="2.200" stroke-linejoin="round"/><g transform="translate(20 488.5)"><defs><linearGradient id="sp20_488" x1="0" y1="0" x2="1" y2="0"><stop offset="0" stop-color="#d2d2d2"/><stop offset="0.350" stop-color="#ececec"/><stop offset="1" stop-color="#e6e6e6"/></linearGradient></defs><rect x="4.62" y="1.89" width="34.73" height="36.54" fill="url(#sp20_488)" stroke="#a2a2a2" stroke-width="1.300"/><path d="M0.700 4.2a3.78 3.78 0 0 1 7.56 0V35.7a3.78 5.04 0 0 1 -7.56 0Z" fill="#f1f1f1" stroke="#a2a2a2" stroke-width="1.200"/><path d="M0.700 35.28C0.700 42.2 9.24 41.6 11.76 41.4H24.8C18 41.4 10.08 40.32 7.98 34.44" fill="#dcdcdc" stroke="#a8a8a8" stroke-width="1.100"/></g><path d="M46 491.500L56 502H50V510.500H42V502H36Z" fill="#6f9acb" stroke="#45699b" stroke-width="1.500"/><path d="M30.500 508V513.500H36.500V519.500H30.500V525L29.500 525V508Z" fill="#6f9acb" stroke="#45699b" stroke-width="1.400"/><path d="M52.500 512.500H58.600V521H52.500Z" fill="#6f9acb" stroke="#45699b" stroke-width="1.400"/><path d="M42.500 522.500H50V529.500H42.500Z" fill="#6f9acb" stroke="#45699b" stroke-width="1.400"/><path d="M22.900 594L33 560L57.200 571.500" fill="none" stroke="#000" stroke-width="2.200"/><path d="M22.900 594L57.200 571.500" fill="none" stroke="#000" stroke-width="2.200" stroke-dasharray="2.200 2.600"/><path d="M36 597L47.500 586" stroke="#a97600" stroke-width="6" stroke-linecap="round"/><path d="M36 597L47.500 586" stroke="#ffd21a" stroke-width="3.600" stroke-linecap="round"/><path d="M43 583L58 596" stroke="#c47d0a" stroke-width="6.200"/><path d="M37 582C39 577 43.500 574.500 49.500 575L43 584Z" fill="#d9d9d9" stroke="#8b8b8b" stroke-width="1"/><path d="M47.500 586L58.500 574.500" stroke="#e9e9e9" stroke-width="1.600"/><circle cx="33" cy="560" r="5" fill="#1e88ff" stroke="#1670d9" stroke-width="0.800"/><circle cx="57.2" cy="571.5" r="5" fill="#1e88ff" stroke="#1670d9" stroke-width="0.800"/><circle cx="22.9" cy="594" r="5" fill="#1e88ff" stroke="#1670d9" stroke-width="0.800"/><g transform="translate(20 624)"><defs><linearGradient id="sp20_624" x1="0" y1="0" x2="1" y2="0"><stop offset="0" stop-color="#d2d2d2"/><stop offset="0.350" stop-color="#ececec"/><stop offset="1" stop-color="#e6e6e6"/></linearGradient></defs><rect x="4.62" y="1.8675" width="34.73" height="36.105" fill="url(#sp20_624)" stroke="#a2a2a2" stroke-width="1.300"/><path d="M0.700 4.2a3.78 3.78 0 0 1 7.56 0V35.2a3.78 5.04 0 0 1 -7.56 0Z" fill="#f1f1f1" stroke="#a2a2a2" stroke-width="1.200"/><path d="M0.700 34.78C0.700 41.7 9.24 41.1 11.76 40.9H24.8C18 40.9 10.08 39.82 7.98 33.94" fill="#dcdcdc" stroke="#a8a8a8" stroke-width="1.100"/></g><g transform="translate(46.3 652.3) scale(1)"><rect x="0.4" y="0.4" width="16.7" height="16.7" rx="3.4" fill="#5a9158" stroke="#4f854e" stroke-width="0.8"/><path d="M1.2 8.7V4a2.8 2.8 0 0 1 2.8-2.8H13.5a2.8 2.8 0 0 1 2.8 2.8V8.7Z" fill="#86b384"/><path d="M8.75 3.2V14.3M3.2 8.75H14.3" stroke="#fff" stroke-width="3.3" stroke-linecap="round"/></g><path d="M31 699.500L59.500 698.500L59.800 726L46 728.500L18 721.500Z" fill="#e4e4e4" stroke="#aeaeae" stroke-width="1.400" stroke-linejoin="round"/><path d="M27.500 706.500C36 709 48 705 59.600 707M23 714C34 717 47 712 59.700 716.500M40 699.200C39 708 37 716 32 725M50 698.800C50 707 46 716 46 728" fill="none" stroke="#9a9a9a" stroke-width="1"/><g transform="translate(46.3 720.3) scale(1)"><rect x="0.4" y="0.4" width="16.7" height="16.7" rx="3.4" fill="#5a9158" stroke="#4f854e" stroke-width="0.8"/><path d="M1.2 8.7V4a2.8 2.8 0 0 1 2.8-2.8H13.5a2.8 2.8 0 0 1 2.8 2.8V8.7Z" fill="#86b384"/><path d="M8.75 3.2V14.3M3.2 8.75H14.3" stroke="#fff" stroke-width="3.3" stroke-linecap="round"/></g><g transform="translate(21 769.5)"><defs><linearGradient id="pg21_769" x1="0" y1="0" x2="0" y2="1"><stop offset="0" stop-color="#3fa4ee"/><stop offset="0.55" stop-color="#6dbaf0"/><stop offset="0.7" stop-color="#d0e4f0"/></linearGradient><linearGradient id="pg21_769s" x1="0" y1="0" x2="0" y2="1"><stop offset="0" stop-color="#d9c670"/><stop offset="0.6" stop-color="#c4a63a"/><stop offset="1" stop-color="#a88a28"/></linearGradient></defs><rect x="0" y="0" width="38.2" height="25.6" fill="url(#pg21_769)"/><path d="M0 14.848L11.46 7.168L38.2 16.896V25.6H0Z" fill="url(#pg21_769s)"/><rect x="0" y="0" width="38.2" height="25.6" fill="none" stroke="#5b7a96" stroke-width="1.5"/></g><rect x="20.800" y="769.300" width="38.600" height="26" fill="none" stroke="#9f9f9f" stroke-width="1.800"/><g transform="translate(46.3 788.4) scale(1)"><rect x="0.4" y="0.4" width="16.7" height="16.7" rx="3.4" fill="#5a9158" stroke="#4f854e" stroke-width="0.8"/><path d="M1.2 8.7V4a2.8 2.8 0 0 1 2.8-2.8H13.5a2.8 2.8 0 0 1 2.8 2.8V8.7Z" fill="#86b384"/><path d="M8.75 3.2V14.3M3.2 8.75H14.3" stroke="#fff" stroke-width="3.3" stroke-linecap="round"/></g><rect x="21" y="837.500" width="38" height="25.600" fill="#eeeeee" stroke="#acacac" stroke-width="1.800"/><text x="40" y="857.800" text-anchor="middle" font-family="Liberation Serif, serif" font-size="24" fill="#2a2a2a">T</text><g transform="translate(46.3 856.5) scale(1)"><rect x="0.4" y="0.4" width="16.7" height="16.7" rx="3.4" fill="#5a9158" stroke="#4f854e" stroke-width="0.8"/><path d="M1.2 8.7V4a2.8 2.8 0 0 1 2.8-2.8H13.5a2.8 2.8 0 0 1 2.8 2.8V8.7Z" fill="#86b384"/><path d="M8.75 3.2V14.3M3.2 8.75H14.3" stroke="#fff" stroke-width="3.3" stroke-linecap="round"/></g><rect x="22.600" y="900.8" width="8.600" height="8.600" fill="#ffd600" stroke="#ff9a00" stroke-width="1.600"/><rect x="22.600" y="912.8" width="8.600" height="8.600" fill="#ff4a00" stroke="#c83200" stroke-width="1.600"/><rect x="22.600" y="924.8" width="8.600" height="8.600" fill="#00b45a" stroke="#00683a" stroke-width="1.600"/><rect x="34" y="906.400" width="12" height="3.600" fill="#9c9c9c"/><rect x="34" y="918.300" width="18.200" height="3.600" fill="#9c9c9c"/><rect x="34" y="930.200" width="8" height="3.600" fill="#9c9c9c"/><g transform="translate(46.3 924.6) scale(1)"><rect x="0.4" y="0.4" width="16.7" height="16.7" rx="3.4" fill="#5a9158" stroke="#4f854e" stroke-width="0.8"/><path d="M1.2 8.7V4a2.8 2.8 0 0 1 2.8-2.8H13.5a2.8 2.8 0 0 1 2.8 2.8V8.7Z" fill="#86b384"/><path d="M8.75 3.2V14.3M3.2 8.75H14.3" stroke="#fff" stroke-width="3.3" stroke-linecap="round"/></g><rect x="19" y="981" width="42.200" height="6.600" fill="#8d8d8d" stroke="#3f3f3f" stroke-width="1.700"/><rect x="20.500" y="982.500" width="7.600" height="3.600" fill="#a9a9a9"/><rect x="36" y="982.500" width="8" height="3.600" fill="#a9a9a9"/><rect x="52" y="982.500" width="7.600" height="3.600" fill="#a9a9a9"/><g transform="translate(46.3 992.6) scale(1)"><rect x="0.4" y="0.4" width="16.7" height="16.7" rx="3.4" fill="#5a9158" stroke="#4f854e" stroke-width="0.8"/><path d="M1.2 8.7V4a2.8 2.8 0 0 1 2.8-2.8H13.5a2.8 2.8 0 0 1 2.8 2.8V8.7Z" fill="#86b384"/><path d="M8.75 3.2V14.3M3.2 8.75H14.3" stroke="#fff" stroke-width="3.3" stroke-linecap="round"/></g><path d="M40 1034L49.500 1067.500L40.600 1062.500L25.200 1074.200Z" fill="#6f9acb" stroke="#45699b" stroke-width="1.500" stroke-linejoin="round"/><text x="39.600" y="1058.600" text-anchor="middle" font-family="Liberation Sans, sans-serif" font-weight="bold" font-size="13.500" fill="#fff">N</text><g transform="translate(44.3 1058.8) scale(1.10857)"><rect x="0.4" y="0.4" width="16.7" height="16.7" rx="3.4" fill="#5a9158" stroke="#4f854e" stroke-width="0.8"/><path d="M1.2 8.7V4a2.8 2.8 0 0 1 2.8-2.8H13.5a2.8 2.8 0 0 1 2.8 2.8V8.7Z" fill="#86b384"/><path d="M8.75 3.2V14.3M3.2 8.75H14.3" stroke="#fff" stroke-width="3.3" stroke-linecap="round"/></g><rect x="21" y="1119.300" width="29" height="19.600" fill="#c8e6fa" stroke="#86abc9" stroke-width="1.700"/><circle cx="47.300" cy="1122.600" r="11.600" fill="#fab4b4" stroke="#e26666" stroke-width="1.500"/><path d="M36.900 1101.500L50 1124.400H24.600Z" fill="#c8fac8" stroke="#5f9e5f" stroke-width="1.600" stroke-linejoin="round"/><g transform="translate(46.3 1128.2) scale(1)"><rect x="0.4" y="0.4" width="16.7" height="16.7" rx="3.4" fill="#5a9158" stroke="#4f854e" stroke-width="0.8"/><path d="M1.2 8.7V4a2.8 2.8 0 0 1 2.8-2.8H13.5a2.8 2.8 0 0 1 2.8 2.8V8.7Z" fill="#86b384"/><path d="M8.75 3.2V14.3M3.2 8.75H14.3" stroke="#fff" stroke-width="3.3" stroke-linecap="round"/></g><path d="M61.5 1137.8h7.6l-3.8 6.8Z" fill="#a6a6a6"/><polygon points="40.0,1171.0 34.2,1184.1 20.0,1185.5 30.7,1195.0 27.7,1209.0 40.0,1201.8 52.3,1209.0 49.3,1195.0 60.0,1185.5 45.8,1184.1" fill="#fdeaa6" stroke="#e8a250" stroke-width="1.700" stroke-linejoin="round"/><g transform="translate(46.3 1196.2) scale(1)"><rect x="0.4" y="0.4" width="16.7" height="16.7" rx="3.4" fill="#5a9158" stroke="#4f854e" stroke-width="0.8"/><path d="M1.2 8.7V4a2.8 2.8 0 0 1 2.8-2.8H13.5a2.8 2.8 0 0 1 2.8 2.8V8.7Z" fill="#86b384"/><path d="M8.75 3.2V14.3M3.2 8.75H14.3" stroke="#fff" stroke-width="3.3" stroke-linecap="round"/></g><path d="M23 1275L50 1248.500" stroke="#3c3c3c" stroke-width="2.200"/><rect x="20.200" y="1272.200" width="5.800" height="5.800" fill="#3c3c3c"/><path d="M57.600 1239.500L54 1252.200L45.400 1243.600Z" fill="#e4e4e4" stroke="#3c3c3c" stroke-width="1.500" stroke-linejoin="round"/><g transform="translate(46.3 1264.6) scale(1)"><rect x="0.4" y="0.4" width="16.7" height="16.7" rx="3.4" fill="#5a9158" stroke="#4f854e" stroke-width="0.8"/><path d="M1.2 8.7V4a2.8 2.8 0 0 1 2.8-2.8H13.5a2.8 2.8 0 0 1 2.8 2.8V8.7Z" fill="#86b384"/><path d="M8.75 3.2V14.3M3.2 8.75H14.3" stroke="#fff" stroke-width="3.3" stroke-linecap="round"/></g><path d="M36.700 1354.600L39.900 1357.600L43.100 1354.600M36.700 1359.600L39.900 1362.600L43.100 1359.600" fill="none" stroke="#3a3a3a" stroke-width="1.300"/></svg>
<span class="t" style="left:1150.57px;top:130.94px;font-size:27.00px;line-height:27.00px;color:#9a9a9a;letter-spacing:0.000px;">1</span>
<svg style="left:0;top:0" width="1900" height="1428" viewBox="0 0 1900 1428"><line x1="120.2" y1="262" x2="120.2" y2="292.5" stroke="#242424" stroke-width="2.100"/><line x1="136.7" y1="285.5" x2="136.7" y2="292.5" stroke="#242424" stroke-width="2.100"/><line x1="153.2" y1="285.5" x2="153.2" y2="292.5" stroke="#242424" stroke-width="2.100"/><line x1="169.8" y1="285.5" x2="169.8" y2="292.5" stroke="#242424" stroke-width="2.100"/><line x1="186.3" y1="285.5" x2="186.3" y2="292.5" stroke="#242424" stroke-width="2.100"/><line x1="202.9" y1="281" x2="202.9" y2="292.5" stroke="#242424" stroke-width="2.100"/><line x1="219.4" y1="285.5" x2="219.4" y2="292.5" stroke="#242424" stroke-width="2.100"/><line x1="236.0" y1="285.5" x2="236.0" y2="292.5" stroke="#242424" stroke-width="2.100"/><line x1="252.5" y1="285.5" x2="252.5" y2="292.5" stroke="#242424" stroke-width="2.100"/><line x1="269.1" y1="285.5" x2="269.1" y2="292.5" stroke="#242424" stroke-width="2.100"/><line x1="285.6" y1="262" x2="285.6" y2="292.5" stroke="#242424" stroke-width="2.100"/><line x1="302.1" y1="285.5" x2="302.1" y2="292.5" stroke="#242424" stroke-width="2.100"/><line x1="318.7" y1="285.5" x2="318.7" y2="292.5" stroke="#242424" stroke-width="2.100"/><line x1="335.2" y1="285.5" x2="335.2" y2="292.5" stroke="#242424" stroke-width="2.100"/><line x1="351.8" y1="285.5" x2="351.8" y2="292.5" stroke="#242424" stroke-width="2.100"/><line x1="368.3" y1="281" x2="368.3" y2="292.5" stroke="#242424" stroke-width="2.100"/><line x1="384.9" y1="285.5" x2="384.9" y2="292.5" stroke="#242424" stroke-width="2.100"/><line x1="401.4" y1="285.5" x2="401.4" y2="292.5" stroke="#242424" stroke-width="2.100"/><line x1="418.0" y1="285.5" x2="418.0" y2="292.5" stroke="#242424" stroke-width="2.100"/><line x1="434.5" y1="285.5" x2="434.5" y2="292.5" stroke="#242424" stroke-width="2.100"/><line x1="451.1" y1="262" x2="451.1" y2="292.5" stroke="#242424" stroke-width="2.100"/><line x1="467.6" y1="285.5" x2="467.6" y2="292.5" stroke="#242424" stroke-width="2.100"/><line x1="484.1" y1="285.5" x2="484.1" y2="292.5" stroke="#242424" stroke-width="2.100"/><line x1="500.7" y1="285.5" x2="500.7" y2="292.5" stroke="#242424" stroke-width="2.100"/><line x1="517.2" y1="285.5" x2="517.2" y2="292.5" stroke="#242424" stroke-width="2.100"/><line x1="533.8" y1="281" x2="533.8" y2="292.5" stroke="#242424" stroke-width="2.100"/><line x1="550.3" y1="285.5" x2="550.3" y2="292.5" stroke="#242424" stroke-width="2.100"/><line x1="566.9" y1="285.5" x2="566.9" y2="292.5" stroke="#242424" stroke-width="2.100"/><line x1="583.4" y1="285.5" x2="583.4" y2="292.5" stroke="#242424" stroke-width="2.100"/><line x1="600.0" y1="285.5" x2="600.0" y2="292.5" stroke="#242424" stroke-width="2.100"/><line x1="616.5" y1="262" x2="616.5" y2="292.5" stroke="#242424" stroke-width="2.100"/><line x1="633.0" y1="285.5" x2="633.0" y2="292.5" stroke="#242424" stroke-width="2.100"/><line x1="649.6" y1="285.5" x2="649.6" y2="292.5" stroke="#242424" stroke-width="2.100"/><line x1="666.1" y1="285.5" x2="666.1" y2="292.5" stroke="#242424" stroke-width="2.100"/><line x1="682.7" y1="285.5" x2="682.7" y2="292.5" stroke="#242424" stroke-width="2.100"/><line x1="699.2" y1="281" x2="699.2" y2="292.5" stroke="#242424" stroke-width="2.100"/><line x1="715.8" y1="285.5" x2="715.8" y2="292.5" stroke="#242424" stroke-width="2.100"/><line x1="732.3" y1="285.5" x2="732.3" y2="292.5" stroke="#242424" stroke-width="2.100"/><line x1="748.9" y1="285.5" x2="748.9" y2="292.5" stroke="#242424" stroke-width="2.100"/><line x1="765.4" y1="285.5" x2="765.4" y2="292.5" stroke="#242424" stroke-width="2.100"/><line x1="782.0" y1="262" x2="782.0" y2="292.5" stroke="#242424" stroke-width="2.100"/><line x1="798.5" y1="285.5" x2="798.5" y2="292.5" stroke="#242424" stroke-width="2.100"/><line x1="815.0" y1="285.5" x2="815.0" y2="292.5" stroke="#242424" stroke-width="2.100"/><line x1="831.6" y1="285.5" x2="831.6" y2="292.5" stroke="#242424" stroke-width="2.100"/><line x1="848.1" y1="285.5" x2="848.1" y2="292.5" stroke="#242424" stroke-width="2.100"/><line x1="864.7" y1="281" x2="864.7" y2="292.5" stroke="#242424" stroke-width="2.100"/><line x1="881.2" y1="285.5" x2="881.2" y2="292.5" stroke="#242424" stroke-width="2.100"/><line x1="897.8" y1="285.5" x2="897.8" y2="292.5" stroke="#242424" stroke-width="2.100"/><line x1="914.3" y1="285.5" x2="914.3" y2="292.5" stroke="#242424" stroke-width="2.100"/><line x1="930.9" y1="285.5" x2="930.9" y2="292.5" stroke="#242424" stroke-width="2.100"/><line x1="947.4" y1="262" x2="947.4" y2="292.5" stroke="#242424" stroke-width="2.100"/><line x1="963.9" y1="285.5" x2="963.9" y2="292.5" stroke="#242424" stroke-width="2.100"/><line x1="980.5" y1="285.5" x2="980.5" y2="292.5" stroke="#242424" stroke-width="2.100"/><line x1="997.0" y1="285.5" x2="997.0" y2="292.5" stroke="#242424" stroke-width="2.100"/><line x1="1013.6" y1="285.5" x2="1013.6" y2="292.5" stroke="#242424" stroke-width="2.100"/><line x1="1030.1" y1="281" x2="1030.1" y2="292.5" stroke="#242424" stroke-width="2.100"/><line x1="1046.7" y1="285.5" x2="1046.7" y2="292.5" stroke="#242424" stroke-width="2.100"/><line x1="1063.2" y1="285.5" x2="1063.2" y2="292.5" stroke="#242424" stroke-width="2.100"/><line x1="1079.8" y1="285.5" x2="1079.8" y2="292.5" stroke="#242424" stroke-width="2.100"/><line x1="1096.3" y1="285.5" x2="1096.3" y2="292.5" stroke="#242424" stroke-width="2.100"/><line x1="1112.8" y1="262" x2="1112.8" y2="292.5" stroke="#242424" stroke-width="2.100"/><line x1="1129.4" y1="285.5" x2="1129.4" y2="292.5" stroke="#242424" stroke-width="2.100"/><line x1="1145.9" y1="285.5" x2="1145.9" y2="292.5" stroke="#242424" stroke-width="2.100"/><line x1="1162.5" y1="285.5" x2="1162.5" y2="292.5" stroke="#242424" stroke-width="2.100"/><line x1="103" y1="304.1" x2="110" y2="304.1" stroke="#242424" stroke-width="2.100"/><line x1="103" y1="320.7" x2="110" y2="320.7" stroke="#242424" stroke-width="2.100"/><line x1="80" y1="337.2" x2="110" y2="337.2" stroke="#242424" stroke-width="2.100"/><line x1="103" y1="353.7" x2="110" y2="353.7" stroke="#242424" stroke-width="2.100"/><line x1="103" y1="370.3" x2="110" y2="370.3" stroke="#242424" stroke-width="2.100"/><line x1="103" y1="386.8" x2="110" y2="386.8" stroke="#242424" stroke-width="2.100"/><line x1="103" y1="403.4" x2="110" y2="403.4" stroke="#242424" stroke-width="2.100"/><line x1="98.5" y1="419.9" x2="110" y2="419.9" stroke="#242424" stroke-width="2.100"/><line x1="103" y1="436.5" x2="110" y2="436.5" stroke="#242424" stroke-width="2.100"/><line x1="103" y1="453.0" x2="110" y2="453.0" stroke="#242424" stroke-width="2.100"/><line x1="103" y1="469.6" x2="110" y2="469.6" stroke="#242424" stroke-width="2.100"/><line x1="103" y1="486.1" x2="110" y2="486.1" stroke="#242424" stroke-width="2.100"/><line x1="80" y1="502.6" x2="110" y2="502.6" stroke="#242424" stroke-width="2.100"/><line x1="103" y1="519.2" x2="110" y2="519.2" stroke="#242424" stroke-width="2.100"/><line x1="103" y1="535.7" x2="110" y2="535.7" stroke="#242424" stroke-width="2.100"/><line x1="103" y1="552.3" x2="110" y2="552.3" stroke="#242424" stroke-width="2.100"/><line x1="103" y1="568.8" x2="110" y2="568.8" stroke="#242424" stroke-width="2.100"/><line x1="98.5" y1="585.4" x2="110" y2="585.4" stroke="#242424" stroke-width="2.100"/><line x1="103" y1="601.9" x2="110" y2="601.9" stroke="#242424" stroke-width="2.100"/><line x1="103" y1="618.5" x2="110" y2="618.5" stroke="#242424" stroke-width="2.100"/><line x1="103" y1="635.0" x2="110" y2="635.0" stroke="#242424" stroke-width="2.100"/><line x1="103" y1="651.6" x2="110" y2="651.6" stroke="#242424" stroke-width="2.100"/><line x1="80" y1="668.1" x2="110" y2="668.1" stroke="#242424" stroke-width="2.100"/><line x1="103" y1="684.6" x2="110" y2="684.6" stroke="#242424" stroke-width="2.100"/><line x1="103" y1="701.2" x2="110" y2="701.2" stroke="#242424" stroke-width="2.100"/><line x1="103" y1="717.7" x2="110" y2="717.7" stroke="#242424" stroke-width="2.100"/><line x1="103" y1="734.3" x2="110" y2="734.3" stroke="#242424" stroke-width="2.100"/><line x1="98.5" y1="750.8" x2="110" y2="750.8" stroke="#242424" stroke-width="2.100"/><line x1="103" y1="767.4" x2="110" y2="767.4" stroke="#242424" stroke-width="2.100"/><line x1="103" y1="783.9" x2="110" y2="783.9" stroke="#242424" stroke-width="2.100"/><line x1="103" y1="800.5" x2="110" y2="800.5" stroke="#242424" stroke-width="2.100"/><line x1="103" y1="817.0" x2="110" y2="817.0" stroke="#242424" stroke-width="2.100"/><line x1="80" y1="833.5" x2="110" y2="833.5" stroke="#242424" stroke-width="2.100"/><line x1="103" y1="850.1" x2="110" y2="850.1" stroke="#242424" stroke-width="2.100"/><line x1="103" y1="866.6" x2="110" y2="866.6" stroke="#242424" stroke-width="2.100"/><line x1="103" y1="883.2" x2="110" y2="883.2" stroke="#242424" stroke-width="2.100"/><line x1="103" y1="899.7" x2="110" y2="899.7" stroke="#242424" stroke-width="2.100"/><line x1="98.5" y1="916.3" x2="110" y2="916.3" stroke="#242424" stroke-width="2.100"/><line x1="103" y1="932.8" x2="110" y2="932.8" stroke="#242424" stroke-width="2.100"/><line x1="103" y1="949.4" x2="110" y2="949.4" stroke="#242424" stroke-width="2.100"/><line x1="103" y1="965.9" x2="110" y2="965.9" stroke="#242424" stroke-width="2.100"/><line x1="103" y1="982.5" x2="110" y2="982.5" stroke="#242424" stroke-width="2.100"/><line x1="80" y1="999.0" x2="110" y2="999.0" stroke="#242424" stroke-width="2.100"/><line x1="103" y1="1015.5" x2="110" y2="1015.5" stroke="#242424" stroke-width="2.100"/><line x1="103" y1="1032.1" x2="110" y2="1032.1" stroke="#242424" stroke-width="2.100"/><line x1="103" y1="1048.6" x2="110" y2="1048.6" stroke="#242424" stroke-width="2.100"/><line x1="103" y1="1065.2" x2="110" y2="1065.2" stroke="#242424" stroke-width="2.100"/><line x1="98.5" y1="1081.7" x2="110" y2="1081.7" stroke="#242424" stroke-width="2.100"/><line x1="103" y1="1098.3" x2="110" y2="1098.3" stroke="#242424" stroke-width="2.100"/><line x1="103" y1="1114.8" x2="110" y2="1114.8" stroke="#242424" stroke-width="2.100"/><line x1="103" y1="1131.4" x2="110" y2="1131.4" stroke="#242424" stroke-width="2.100"/><line x1="103" y1="1147.9" x2="110" y2="1147.9" stroke="#242424" stroke-width="2.100"/><line x1="80" y1="1164.5" x2="110" y2="1164.5" stroke="#242424" stroke-width="2.100"/><line x1="103" y1="1181.0" x2="110" y2="1181.0" stroke="#242424" stroke-width="2.100"/><line x1="103" y1="1197.5" x2="110" y2="1197.5" stroke="#242424" stroke-width="2.100"/><line x1="103" y1="1214.1" x2="110" y2="1214.1" stroke="#242424" stroke-width="2.100"/><line x1="103" y1="1230.6" x2="110" y2="1230.6" stroke="#242424" stroke-width="2.100"/><line x1="98.5" y1="1247.2" x2="110" y2="1247.2" stroke="#242424" stroke-width="2.100"/><line x1="103" y1="1263.7" x2="110" y2="1263.7" stroke="#242424" stroke-width="2.100"/><line x1="103" y1="1280.3" x2="110" y2="1280.3" stroke="#242424" stroke-width="2.100"/><line x1="103" y1="1296.8" x2="110" y2="1296.8" stroke="#242424" stroke-width="2.100"/><line x1="103" y1="1313.4" x2="110" y2="1313.4" stroke="#242424" stroke-width="2.100"/><line x1="80" y1="1329.9" x2="110" y2="1329.9" stroke="#242424" stroke-width="2.100"/><line x1="103" y1="1346.4" x2="110" y2="1346.4" stroke="#242424" stroke-width="2.100"/><line x1="103" y1="1363.0" x2="110" y2="1363.0" stroke="#242424" stroke-width="2.100"/><rect x="80" y="293" width="30.5" height="2.2" fill="#ff0000"/><rect x="655" y="262" width="2.2" height="30.5" fill="#ff0000"/></svg>
<span class="t" style="left:122.71px;top:263.92px;font-size:16.40px;line-height:16.40px;color:#2b2b2b;letter-spacing:0.000px;-webkit-text-stroke:0.150px #2b2b2b;">-50</span>
<span class="t" style="left:288.24px;top:263.92px;font-size:16.40px;line-height:16.40px;color:#2b2b2b;letter-spacing:0.000px;-webkit-text-stroke:0.150px #2b2b2b;">0</span>
<span class="t" style="left:453.69px;top:263.92px;font-size:16.40px;line-height:16.40px;color:#2b2b2b;letter-spacing:0.000px;-webkit-text-stroke:0.150px #2b2b2b;">50</span>
<span class="t" style="left:618.57px;top:263.92px;font-size:16.40px;line-height:16.40px;color:#2b2b2b;letter-spacing:0.000px;-webkit-text-stroke:0.150px #2b2b2b;">100</span>
<span class="t" style="left:784.02px;top:263.92px;font-size:16.40px;line-height:16.40px;color:#2b2b2b;letter-spacing:0.000px;-webkit-text-stroke:0.150px #2b2b2b;">150</span>
<span class="t" style="left:949.88px;top:263.92px;font-size:16.40px;line-height:16.40px;color:#2b2b2b;letter-spacing:0.000px;-webkit-text-stroke:0.150px #2b2b2b;">200</span>
<span class="t" style="left:1115.33px;top:263.92px;font-size:16.40px;line-height:16.40px;color:#2b2b2b;letter-spacing:0.000px;-webkit-text-stroke:0.150px #2b2b2b;">250</span>
<span class="t" style="left:97.600px;top:342.7px;font-size:16.200px;line-height:16.200px;color:#2b2b2b;-webkit-text-stroke:0.150px #2b2b2b;transform-origin:0 0;transform:rotate(-90deg) translate(-100%,-100%)">0</span>
<span class="t" style="left:97.600px;top:508.1px;font-size:16.200px;line-height:16.200px;color:#2b2b2b;-webkit-text-stroke:0.150px #2b2b2b;transform-origin:0 0;transform:rotate(-90deg) translate(-100%,-100%)">50</span>
<span class="t" style="left:97.600px;top:673.6px;font-size:16.200px;line-height:16.200px;color:#2b2b2b;-webkit-text-stroke:0.150px #2b2b2b;transform-origin:0 0;transform:rotate(-90deg) translate(-100%,-100%)">100</span>
<span class="t" style="left:97.600px;top:839.0px;font-size:16.200px;line-height:16.200px;color:#2b2b2b;-webkit-text-stroke:0.150px #2b2b2b;transform-origin:0 0;transform:rotate(-90deg) translate(-100%,-100%)">150</span>
<span class="t" style="left:97.600px;top:1004.5px;font-size:16.200px;line-height:16.200px;color:#2b2b2b;-webkit-text-stroke:0.150px #2b2b2b;transform-origin:0 0;transform:rotate(-90deg) translate(-100%,-100%)">200</span>
<span class="t" style="left:97.600px;top:1170.0px;font-size:16.200px;line-height:16.200px;color:#2b2b2b;-webkit-text-stroke:0.150px #2b2b2b;transform-origin:0 0;transform:rotate(-90deg) translate(-100%,-100%)">250</span>
<span class="t" style="left:97.600px;top:1335.4px;font-size:16.200px;line-height:16.200px;color:#2b2b2b;-webkit-text-stroke:0.150px #2b2b2b;transform-origin:0 0;transform:rotate(-90deg) translate(-100%,-100%)">300</span>
<div id="canvas"><svg style="left:0;top:0" width="1060" height="1076" viewBox="112 294 1060 1076"><defs><clipPath id="land"><polygon points="415.6,511.3 421.3,516.0 432.6,517.9 444.0,527.4 457.3,530.2 449.7,535.0 436.4,540.6 435.5,552.0 439.3,565.3 441.2,578.5 449.7,581.4 461.0,588.0 470.5,593.7 478.0,595.6 466.7,601.3 459.2,607.0 462.0,616.4 470.5,616.4 457.3,629.7 446.8,639.2 432.6,650.5 430.7,660.0 421.3,669.5 409.9,678.0 402.3,688.4 383.4,697.9 372.0,694.1 360.6,696.0 356.8,703.6 347.4,713.0 346.4,721.6 356.8,726.3 360.6,737.7 362.5,750.0 373.0,750.0 379.6,761.4 375.8,774.6 362.5,778.4 337.9,778.4 328.4,782.2 320.8,791.7 328.4,803.0 343.6,810.6 336.0,820.0 341.7,833.4 354.9,842.8 362.5,852.3 379.6,858.9 398.5,852.3 411.8,839.0 417.5,833.4 421.3,844.7 423.2,858.0 419.4,878.8 423.2,899.7 428.8,924.3 432.6,949.0 440.2,969.8 449.7,988.7 455.9,1000.0 464.4,1024.6 475.8,1051.2 489.0,1073.9 494.7,1090.9 500.4,1106.1 506.1,1125.0 517.5,1142.1 528.8,1146.8 540.2,1140.2 544.0,1128.8 551.6,1121.3 559.2,1117.5 566.7,1102.3 581.9,1094.7 582.8,1072.0 580.0,1060.6 586.6,1047.4 589.5,1037.9 593.3,1024.6 589.5,1007.6 587.4,998.7 593.0,974.0 606.3,970.3 615.8,960.8 634.7,951.4 642.3,940.0 661.3,924.8 676.4,913.5 684.0,905.9 697.3,890.7 721.9,875.6 739.0,866.0 742.7,851.0 754.0,841.5 767.4,837.7 790.0,837.7 789.7,821.5 787.8,804.4 780.2,793.0 784.0,783.6 782.1,776.0 772.6,766.5 780.2,759.0 787.8,755.1 784.0,749.5 780.2,741.9 770.7,740.0 772.6,734.3 778.3,726.7 784.0,724.8 791.6,732.4 801.0,739.0 808.6,738.1 806.7,747.6 810.5,753.3 829.5,758.0 854.1,757.0 867.4,759.0 861.7,768.4 848.4,779.8 842.7,783.6 838.9,791.1 844.6,804.4 850.3,808.2 854.1,796.8 863.6,787.4 865.5,793.0 870.2,812.0 873.0,829.0 878.7,831.5 884.4,830.0 886.3,812.0 892.0,793.0 901.5,783.6 909.0,785.5 918.5,768.4 920.4,757.0 928.0,740.0 929.9,726.7 946.9,713.5 962.1,707.8 974.4,713.5 969.7,704.0 977.3,696.4 979.1,687.0 962.1,681.3 960.2,666.1 950.7,660.4 931.8,668.0 918.5,663.3 903.4,671.8 888.2,677.5 876.8,686.9 867.4,695.5 850.3,696.4 849.4,704.0 859.8,705.9 854.1,717.3 838.9,721.0 820.0,717.3 804.8,721.0 795.4,722.9 785.9,711.6 785.9,696.4 780.2,690.7 769.8,694.5 766.9,707.8 770.7,717.3 766.9,726.7 753.7,730.5 744.2,726.7 725.3,726.7 712.0,719.2 696.8,719.2 677.9,705.9 659.0,705.9 640.0,700.2 633.5,696.0 610.7,684.6 591.8,677.0 589.9,669.5 595.6,656.2 606.9,642.0 588.0,629.7 574.7,627.8 565.3,615.5 557.7,618.3 555.8,605.0 553.9,593.7 563.4,591.8 573.8,588.0 564.3,574.7 561.5,565.3 572.8,555.8 574.7,546.3 588.0,536.8 592.7,525.5 586.0,515.0 569.0,512.2 552.0,515.0 544.4,520.7 525.5,520.7 514.0,514.0 500.8,502.7 487.6,498.0 479.0,487.6 463.0,486.6 444.0,491.4 428.8,497.0"/></clipPath><clipPath id="main"><rect x="300" y="470" width="492" height="700"/></clipPath><clipPath id="ne"><rect x="764" y="640" width="230" height="200"/></clipPath><filter id="rag" filterUnits="userSpaceOnUse" x="300" y="470" width="700" height="700"><feTurbulence type="fractalNoise" baseFrequency="0.09" numOctaves="2" seed="5" result="n"/><feDisplacementMap in="SourceGraphic" in2="n" scale="9" xChannelSelector="R" yChannelSelector="G"/></filter><filter id="spk" filterUnits="userSpaceOnUse" x="300" y="470" width="700" height="700"><feTurbulence type="fractalNoise" baseFrequency="0.62" numOctaves="2" seed="8" result="n"/><feColorMatrix in="n" type="matrix" values="0 0 0 0 0  0 0 0 0 0  0 0 0 0 0  2.600 0 0 0 -0.900"/></filter></defs><rect x="304" y="356" width="695" height="982.500" fill="#969696"/><rect x="288" y="340" width="696" height="983" fill="#000"/><g filter="url(#rag)"><g clip-path="url(#land)"><rect x="300" y="470" width="700" height="700" fill="#4a3cb0"/><g clip-path="url(#main)"><polygon points="528.0,836.4 554.7,864.8 543.5,874.5 515.5,851.4" fill="#56b89c"/><polygon points="606.1,871.9 642.5,874.0 637.8,890.3 606.5,890.1" fill="#c648b4"/><polygon points="463.2,866.8 495.1,877.6 488.9,890.4 459.9,876.9" fill="#d47868"/><polygon points="442.3,509.4 483.4,544.9 471.1,551.0 432.2,521.2" fill="#2e80c0"/><polygon points="490.5,523.2 525.3,531.4 523.6,539.3 489.7,532.9" fill="#d47868"/><polygon points="571.4,770.3 607.5,775.1 600.6,795.2 564.2,786.3" fill="#56b89c"/><polygon points="597.1,855.2 623.2,871.8 620.7,882.0 589.9,863.8" fill="#c648b4"/><polygon points="537.9,1109.6 551.0,1132.4 535.0,1136.3 521.7,1114.1" fill="#501ccc"/><polygon points="521.8,534.2 535.8,564.7 521.7,575.0 507.7,543.5" fill="#2e80c0"/><polygon points="624.3,881.8 646.8,895.9 638.5,905.4 617.3,894.3" fill="#56b89c"/><polygon points="509.6,681.3 565.5,714.9 562.4,727.4 506.6,696.4" fill="#d47868"/><polygon points="525.6,714.3 552.7,724.7 550.1,739.8 516.3,736.5" fill="#d0c658"/><polygon points="499.2,698.0 534.7,692.6 540.7,707.2 497.4,715.6" fill="#c648b4"/><polygon points="447.5,929.9 479.1,928.4 478.7,940.5 449.5,944.4" fill="#2e80c0"/><polygon points="486.0,857.2 520.9,866.4 519.4,883.9 485.9,879.6" fill="#d47868"/><polygon points="610.1,798.2 637.0,809.0 625.4,829.2 601.0,812.9" fill="#c648b4"/><polygon points="362.5,782.4 398.6,780.1 402.3,792.3 368.5,792.6" fill="#d47868"/><polygon points="520.5,1063.6 526.9,1087.0 512.0,1094.3 504.4,1067.5" fill="#56b89c"/><polygon points="567.1,999.6 593.4,1010.7 591.4,1023.2 557.6,1010.1" fill="#d47868"/><polygon points="755.2,806.8 765.6,848.2 748.4,851.5 740.0,811.1" fill="#501ccc"/><polygon points="567.2,1069.7 584.3,1099.5 568.3,1106.9 548.9,1079.0" fill="#c648b4"/><polygon points="786.3,807.7 801.2,834.8 782.9,847.9 767.8,815.4" fill="#d47868"/><polygon points="522.3,560.3 570.0,564.6 575.7,579.1 522.1,572.2" fill="#2e80c0"/><polygon points="550.0,799.4 579.7,820.5 566.9,835.6 538.0,811.9" fill="#c648b4"/><polygon points="612.1,814.3 645.9,844.9 641.6,857.8 600.0,826.6" fill="#d0c658"/><polygon points="515.0,1000.5 532.7,1004.5 528.2,1020.4 509.3,1013.7" fill="#d47868"/><polygon points="705.9,786.0 723.4,815.6 702.9,831.1 690.6,793.5" fill="#501ccc"/><polygon points="755.8,768.6 804.9,806.2 798.3,817.2 751.1,781.2" fill="#501ccc"/><polygon points="654.7,733.2 700.8,766.0 691.2,772.4 650.1,744.5" fill="#d47868"/><polygon points="519.4,1062.6 522.5,1097.4 507.0,1097.2 503.9,1069.0" fill="#501ccc"/><polygon points="610.6,886.1 644.5,899.1 641.6,913.5 607.1,899.5" fill="#d0c658"/><polygon points="538.9,801.7 542.7,843.8 521.7,842.0 519.1,799.2" fill="#d47868"/><polygon points="533.9,586.5 559.6,589.8 558.0,606.4 528.0,603.5" fill="#501ccc"/><polygon points="674.9,859.6 712.6,874.1 709.7,890.0 671.7,878.8" fill="#d0c658"/><polygon points="520.2,782.0 545.4,802.7 531.1,819.5 504.8,802.6" fill="#501ccc"/><polygon points="474.5,573.3 510.4,591.8 506.0,601.6 472.9,583.8" fill="#501ccc"/><polygon points="358.6,813.0 386.3,780.2 403.7,793.8 374.5,825.2" fill="#2e80c0"/><polygon points="511.6,885.4 536.1,894.8 535.8,911.4 508.8,903.8" fill="#d47868"/><polygon points="548.6,552.0 575.0,582.1 562.2,592.4 536.1,562.9" fill="#56b89c"/><polygon points="577.7,780.0 621.7,789.2 619.9,802.2 577.3,796.2" fill="#501ccc"/><polygon points="437.4,569.6 477.1,579.1 470.3,588.4 431.2,578.5" fill="#d0c658"/><polygon points="669.9,812.1 684.2,832.5 668.6,845.4 652.3,824.5" fill="#d47868"/><polygon points="430.2,485.8 478.0,495.2 474.8,511.0 431.9,502.0" fill="#d0c658"/><polygon points="451.5,487.8 495.1,508.5 490.9,517.2 446.2,496.7" fill="#501ccc"/><polygon points="621.4,816.2 654.4,795.3 665.0,811.4 632.8,830.1" fill="#d0c658"/><polygon points="610.2,928.8 637.9,933.3 637.2,949.0 606.3,945.1" fill="#c648b4"/><polygon points="337.2,800.2 347.8,773.3 358.8,778.0 347.5,807.2" fill="#56b89c"/><polygon points="572.5,1040.7 596.2,1047.0 593.5,1061.8 570.2,1057.4" fill="#2e80c0"/><polygon points="733.7,760.7 786.0,794.8 783.3,809.5 723.4,771.0" fill="#56b89c"/><polygon points="458.2,954.8 453.6,972.5 440.1,967.8 441.7,951.0" fill="#501ccc"/><polygon points="686.0,753.7 720.7,787.9 706.6,801.9 674.6,766.8" fill="#2e80c0"/><polygon points="622.2,918.8 662.5,931.5 653.5,950.8 617.9,933.3" fill="#d47868"/><polygon points="442.4,742.8 465.3,716.3 474.8,725.0 451.8,754.3" fill="#d0c658"/><polygon points="521.8,722.2 550.3,739.2 546.1,755.3 517.3,737.9" fill="#56b89c"/><polygon points="502.8,513.6 533.6,541.9 524.5,552.3 489.3,522.1" fill="#d0c658"/><polygon points="624.8,881.9 648.7,882.8 647.7,896.2 625.8,897.8" fill="#2e80c0"/><polygon points="413.9,850.9 453.2,820.7 465.5,831.6 424.5,867.1" fill="#c648b4"/><polygon points="426.1,849.6 457.1,872.8 446.2,885.2 415.6,860.6" fill="#2e80c0"/><polygon points="461.3,565.1 505.1,587.2 497.7,597.9 452.0,574.3" fill="#c648b4"/><polygon points="378.2,761.4 402.0,743.8 411.0,756.0 385.8,772.5" fill="#d47868"/><polygon points="513.4,741.0 580.4,757.4 575.3,773.3 516.7,761.8" fill="#501ccc"/><polygon points="461.2,842.9 484.7,811.3 493.8,818.8 468.9,853.8" fill="#d47868"/><polygon points="583.2,896.7 595.7,942.4 579.5,948.4 567.2,904.0" fill="#d0c658"/><polygon points="515.1,667.0 569.0,687.9 561.0,695.8 511.8,676.5" fill="#56b89c"/><polygon points="566.9,1095.7 561.3,1119.2 550.0,1114.7 553.1,1092.1" fill="#d0c658"/><polygon points="521.2,525.7 549.0,537.5 546.9,549.6 513.5,535.2" fill="#d0c658"/><polygon points="570.2,823.1 587.7,847.4 575.0,853.4 557.6,831.6" fill="#c648b4"/><polygon points="545.2,972.1 555.2,993.8 534.1,997.3 529.6,976.4" fill="#501ccc"/><polygon points="559.3,863.8 594.8,877.3 588.3,892.2 554.6,883.3" fill="#c648b4"/><polygon points="639.2,857.9 687.5,858.7 686.7,873.7 643.8,870.8" fill="#56b89c"/><polygon points="596.3,948.3 612.6,970.0 598.9,980.6 583.9,960.6" fill="#c648b4"/><polygon points="540.2,912.7 575.9,915.2 572.2,933.3 535.3,930.2" fill="#2e80c0"/><polygon points="369.1,787.3 394.8,766.7 411.3,784.5 379.4,808.8" fill="#56b89c"/><polygon points="507.8,530.6 538.5,541.7 533.9,554.3 499.1,539.8" fill="#c648b4"/><polygon points="401.0,732.5 435.3,720.1 440.7,740.4 405.3,749.7" fill="#56b89c"/><polygon points="540.3,832.1 567.8,844.9 564.5,855.7 532.1,842.0" fill="#2e80c0"/><polygon points="429.8,718.9 464.6,713.4 471.2,728.9 428.0,738.2" fill="#d47868"/><polygon points="430.2,495.3 446.7,520.8 437.3,528.5 416.8,501.9" fill="#56b89c"/><polygon points="430.8,954.8 471.0,947.2 478.3,961.6 436.3,969.7" fill="#2e80c0"/><polygon points="577.6,700.9 606.3,726.6 594.4,737.4 566.6,712.2" fill="#56b89c"/><polygon points="665.9,694.1 720.2,722.3 706.1,737.0 659.7,711.1" fill="#501ccc"/><polygon points="490.1,510.0 531.7,517.6 531.7,530.7 487.8,524.0" fill="#2e80c0"/><polygon points="613.0,727.2 645.3,735.9 640.6,750.9 608.2,745.8" fill="#56b89c"/><polygon points="512.3,1087.5 499.4,1099.8 491.6,1093.4 503.8,1080.0" fill="#c648b4"/><polygon points="571.2,1084.2 585.9,1109.2 566.9,1116.1 554.5,1091.2" fill="#d47868"/><polygon points="602.5,798.0 637.9,807.4 632.7,823.7 594.5,813.8" fill="#2e80c0"/><polygon points="563.5,917.6 581.3,947.2 568.6,955.5 548.9,925.5" fill="#2e80c0"/><polygon points="438.4,897.1 481.2,918.8 475.6,936.2 433.8,917.6" fill="#d0c658"/><polygon points="353.2,699.8 396.8,692.4 400.4,705.6 359.2,715.7" fill="#2e80c0"/><polygon points="533.6,1024.2 544.7,1050.4 528.4,1055.3 518.3,1030.5" fill="#501ccc"/><polygon points="568.6,841.9 610.0,856.0 604.0,872.1 561.1,860.5" fill="#d47868"/><polygon points="494.2,506.9 530.1,526.8 526.7,541.3 483.4,514.7" fill="#c648b4"/><polygon points="564.2,924.4 600.1,934.1 594.3,945.1 556.1,935.2" fill="#501ccc"/><polygon points="512.2,998.8 524.8,1032.1 508.1,1038.9 498.9,1009.5" fill="#d47868"/><polygon points="463.2,952.4 494.7,968.8 483.2,979.9 454.4,964.1" fill="#501ccc"/><polygon points="660.7,837.2 694.8,847.1 693.8,857.7 657.5,851.8" fill="#d47868"/><polygon points="568.7,693.7 619.9,685.2 626.2,705.6 572.5,707.2" fill="#56b89c"/><polygon points="601.9,691.8 637.4,718.3 629.9,735.8 590.3,704.3" fill="#501ccc"/><polygon points="483.5,628.3 521.9,637.9 522.2,646.5 482.6,636.5" fill="#d0c658"/><polygon points="532.0,843.9 556.7,837.1 556.2,858.5 534.7,862.4" fill="#501ccc"/><polygon points="552.8,699.7 591.4,721.7 586.8,735.7 544.6,708.4" fill="#d0c658"/><polygon points="434.1,768.8 471.0,745.1 480.2,752.7 437.3,781.7" fill="#c648b4"/><polygon points="490.2,1011.6 517.4,1028.8 509.5,1043.0 482.7,1027.8" fill="#56b89c"/><polygon points="595.6,710.3 634.0,711.8 628.5,730.7 594.3,730.7" fill="#d0c658"/><polygon points="348.9,838.1 369.6,809.6 377.4,816.7 358.9,841.7" fill="#2e80c0"/><polygon points="612.0,706.5 649.4,737.3 636.1,747.1 605.9,723.2" fill="#d0c658"/><polygon points="415.0,782.4 446.1,738.4 458.3,749.9 429.9,792.7" fill="#c648b4"/><polygon points="373.6,812.8 424.4,809.2 425.4,827.6 378.5,834.9" fill="#d47868"/><polygon points="329.8,799.3 352.5,772.4 367.6,780.3 348.8,815.5" fill="#56b89c"/><polygon points="554.9,1059.2 550.1,1087.3 539.2,1084.1 542.2,1059.8" fill="#2e80c0"/><polygon points="339.7,833.8 367.8,809.7 378.3,821.1 351.5,844.5" fill="#d47868"/><polygon points="476.6,672.3 523.7,668.7 520.1,685.5 479.9,688.4" fill="#501ccc"/><polygon points="452.1,833.8 487.0,780.1 499.4,788.7 470.9,835.8" fill="#c648b4"/><polygon points="485.9,922.6 512.4,901.0 519.2,911.4 496.1,929.2" fill="#2e80c0"/><polygon points="448.0,814.3 486.8,789.9 490.0,801.9 453.0,824.0" fill="#501ccc"/><polygon points="497.5,1048.7 485.5,1067.2 470.6,1055.4 485.2,1039.9" fill="#d0c658"/><polygon points="475.2,1019.0 481.2,1035.3 464.8,1042.1 460.8,1022.2" fill="#d47868"/><polygon points="567.2,1023.1 593.0,1025.5 593.5,1041.5 568.8,1038.5" fill="#d0c658"/><polygon points="515.9,553.0 541.5,562.6 539.2,572.6 512.9,563.8" fill="#2e80c0"/><polygon points="398.9,754.3 439.6,745.1 446.8,764.9 397.3,773.8" fill="#d47868"/><polygon points="518.1,1006.0 545.5,1009.9 538.3,1029.5 512.4,1021.2" fill="#c648b4"/><polygon points="573.8,769.2 632.4,804.2 622.5,811.6 572.4,780.3" fill="#d0c658"/><polygon points="488.5,949.3 513.8,952.2 509.9,971.9 483.8,966.2" fill="#c648b4"/><polygon points="644.2,844.6 673.3,865.9 665.6,876.7 631.3,858.4" fill="#56b89c"/><polygon points="663.6,693.9 697.2,717.4 679.9,732.9 652.4,708.1" fill="#2e80c0"/><polygon points="424.4,482.0 458.9,506.4 451.8,513.5 416.2,490.0" fill="#2e80c0"/><polygon points="566.9,961.2 596.1,963.2 594.5,982.2 564.1,982.1" fill="#2e80c0"/><polygon points="757.7,811.3 792.9,813.3 792.5,829.7 756.6,828.7" fill="#56b89c"/><polygon points="469.1,714.9 520.2,708.9 522.8,722.4 475.2,728.4" fill="#501ccc"/><polygon points="384.5,828.6 424.0,827.5 428.1,840.7 384.4,845.1" fill="#56b89c"/><polygon points="585.4,1046.2 588.2,1081.7 571.0,1079.5 567.5,1052.8" fill="#c648b4"/><polygon points="507.4,567.6 533.4,585.8 526.7,602.0 501.4,578.3" fill="#d0c658"/><polygon points="584.2,830.7 615.0,825.2 620.2,838.2 585.7,844.2" fill="#501ccc"/><polygon points="425.3,827.7 458.8,817.1 460.9,836.6 429.0,843.6" fill="#56b89c"/><polygon points="631.3,809.4 670.6,815.6 663.3,828.9 626.9,823.2" fill="#d0c658"/><polygon points="687.0,717.6 717.6,739.6 712.0,752.9 675.5,728.9" fill="#d47868"/><polygon points="760.4,766.9 795.3,786.1 790.6,803.3 752.1,787.1" fill="#56b89c"/><polygon points="533.1,1008.3 540.5,1027.3 529.0,1033.0 523.5,1011.2" fill="#d0c658"/><polygon points="579.3,658.8 619.2,692.2 600.3,700.5 570.8,668.6" fill="#501ccc"/><polygon points="688.4,829.9 707.1,792.3 721.1,800.6 699.9,838.6" fill="#56b89c"/><polygon points="579.8,747.6 651.4,778.5 641.5,791.2 581.7,764.4" fill="#d0c658"/><polygon points="460.4,863.5 495.8,833.5 509.9,851.0 474.2,877.7" fill="#c648b4"/><polygon points="468.0,895.8 486.7,906.6 479.9,923.2 455.4,910.1" fill="#d47868"/><polygon points="507.2,839.2 549.6,854.9 545.2,872.0 497.2,852.3" fill="#501ccc"/><polygon points="445.4,911.8 485.3,934.9 473.7,946.1 443.5,926.5" fill="#2e80c0"/><polygon points="492.9,994.0 493.5,1022.1 476.3,1025.3 471.5,1000.3" fill="#d0c658"/><polygon points="643.4,902.2 678.9,911.2 674.8,928.6 641.5,919.2" fill="#501ccc"/><polygon points="638.1,828.4 664.9,813.8 668.4,825.2 645.0,840.5" fill="#56b89c"/><polygon points="587.1,674.9 616.5,689.8 611.9,699.7 580.4,685.2" fill="#501ccc"/><polygon points="473.0,776.3 508.6,754.1 513.7,770.4 479.8,793.0" fill="#2e80c0"/><polygon points="516.1,744.8 581.8,761.8 582.1,774.3 517.2,762.5" fill="#c648b4"/><polygon points="437.8,956.4 462.8,956.3 465.7,971.3 434.9,969.9" fill="#d0c658"/><polygon points="550.0,874.8 555.3,911.0 533.4,910.1 532.1,879.3" fill="#56b89c"/><polygon points="508.7,547.9 576.5,542.1 571.8,557.9 512.2,566.8" fill="#501ccc"/><polygon points="516.8,599.8 545.2,640.1 538.5,650.7 510.7,608.8" fill="#d0c658"/><polygon points="620.7,915.5 654.5,927.2 646.6,944.6 612.9,929.4" fill="#56b89c"/><polygon points="509.8,533.0 545.0,536.6 539.6,555.6 503.0,551.4" fill="#501ccc"/><polygon points="676.3,853.1 693.7,873.9 677.4,888.5 663.5,861.1" fill="#c648b4"/><polygon points="663.8,681.7 714.9,733.1 696.5,740.0 653.2,695.4" fill="#501ccc"/><polygon points="752.6,700.5 805.1,728.2 804.2,737.9 747.6,709.1" fill="#2e80c0"/><polygon points="554.4,737.5 602.6,745.4 606.6,763.7 551.8,754.1" fill="#c648b4"/><polygon points="635.1,679.4 685.3,731.6 670.6,734.8 629.7,689.7" fill="#501ccc"/><polygon points="576.4,679.4 641.8,694.9 635.0,712.2 579.0,702.9" fill="#56b89c"/><polygon points="466.4,629.7 520.7,631.9 514.2,641.6 467.3,640.4" fill="#d0c658"/><polygon points="537.5,837.1 566.4,821.0 573.9,841.7 545.5,855.7" fill="#c648b4"/><polygon points="473.5,721.0 505.0,713.7 506.4,725.6 476.5,735.0" fill="#2e80c0"/><polygon points="680.2,758.6 739.4,791.3 731.0,802.6 675.0,771.1" fill="#501ccc"/><polygon points="519.1,822.1 554.4,819.1 554.9,840.4 521.0,846.9" fill="#c648b4"/><polygon points="548.8,667.1 594.0,709.7 583.6,715.3 533.7,665.8" fill="#d47868"/><polygon points="664.0,876.9 702.2,865.9 706.7,881.6 665.5,891.2" fill="#501ccc"/><polygon points="447.1,575.9 495.0,620.2 482.5,622.9 445.6,588.5" fill="#56b89c"/><polygon points="539.1,1110.0 560.5,1124.1 553.5,1133.3 532.1,1120.8" fill="#2e80c0"/><polygon points="417.9,664.8 448.2,661.4 450.5,673.5 419.5,680.8" fill="#56b89c"/><polygon points="454.6,477.3 490.7,485.3 488.4,500.7 453.3,490.6" fill="#d47868"/><polygon points="547.6,803.8 573.4,814.8 569.6,827.5 543.8,817.7" fill="#d47868"/><polygon points="483.8,1060.9 504.2,1061.6 503.9,1073.1 482.6,1072.1" fill="#2e80c0"/><polygon points="380.2,847.9 415.1,817.7 425.0,830.9 389.1,862.8" fill="#501ccc"/><polygon points="445.2,912.2 472.9,925.5 463.4,940.3 437.6,926.3" fill="#2e80c0"/><polygon points="651.0,913.3 684.8,897.9 690.5,912.6 658.5,927.1" fill="#c648b4"/><polygon points="496.0,868.5 509.1,841.2 527.7,850.4 514.4,880.2" fill="#d47868"/><polygon points="547.6,882.4 576.3,877.3 582.6,894.3 549.4,899.1" fill="#d47868"/><polygon points="404.9,813.0 443.5,782.1 458.0,795.2 414.0,828.3" fill="#d0c658"/><polygon points="501.2,586.2 540.9,606.6 534.3,622.8 491.4,604.9" fill="#d47868"/><polygon points="615.2,799.8 638.7,786.0 644.7,802.6 621.6,815.8" fill="#56b89c"/><polygon points="453.1,987.3 466.6,997.8 460.8,1010.5 445.8,1000.7" fill="#2e80c0"/><polygon points="489.1,649.1 550.2,673.0 552.5,690.0 479.3,667.2" fill="#501ccc"/><polygon points="527.0,846.5 546.2,863.7 540.3,879.0 517.9,862.8" fill="#2e80c0"/><polygon points="399.1,787.0 442.1,764.8 441.5,777.4 403.5,797.9" fill="#d47868"/><polygon points="524.3,658.9 568.2,697.3 564.6,710.3 523.7,673.2" fill="#56b89c"/><polygon points="356.9,860.4 397.2,822.3 415.7,834.0 371.5,875.0" fill="#56b89c"/><polygon points="657.7,773.0 686.1,796.9 676.1,810.4 651.0,788.4" fill="#501ccc"/><polygon points="547.2,809.3 591.3,830.1 576.8,846.1 536.0,829.6" fill="#501ccc"/><polygon points="433.0,925.7 466.5,944.5 462.3,958.4 424.7,938.7" fill="#2e80c0"/><polygon points="567.2,884.1 593.8,905.5 582.2,920.1 554.2,900.1" fill="#501ccc"/><polygon points="458.6,592.8 501.0,620.0 494.0,631.6 451.6,603.7" fill="#d47868"/><polygon points="475.2,890.3 498.7,897.5 491.7,919.2 463.5,906.4" fill="#c648b4"/><polygon points="618.0,780.2 650.8,804.7 640.5,818.0 609.6,795.7" fill="#501ccc"/><polygon points="605.9,890.2 631.0,877.0 635.8,891.3 612.8,904.5" fill="#d47868"/><polygon points="393.5,708.4 410.5,689.2 419.3,695.0 398.5,719.8" fill="#501ccc"/><polygon points="476.0,571.7 529.6,588.2 526.2,605.5 472.8,592.9" fill="#56b89c"/><polygon points="709.5,837.4 732.5,824.6 741.7,842.8 720.2,857.0" fill="#501ccc"/><polygon points="412.2,711.5 442.3,710.4 440.6,723.8 412.9,722.2" fill="#d47868"/><polygon points="471.5,982.3 482.6,1005.3 470.9,1009.5 458.3,988.4" fill="#501ccc"/><polygon points="535.8,1073.4 552.6,1083.4 543.2,1096.0 527.8,1089.0" fill="#2e80c0"/><polygon points="466.3,617.2 501.9,639.9 492.4,650.5 460.4,628.4" fill="#501ccc"/><polygon points="500.4,727.2 551.6,761.5 543.9,779.7 486.6,739.9" fill="#d47868"/><polygon points="516.2,835.7 561.1,821.6 560.9,841.0 522.7,857.7" fill="#c648b4"/><polygon points="494.9,683.0 554.6,706.3 556.7,721.3 488.2,694.4" fill="#d0c658"/><polygon points="304.5,816.6 349.5,776.9 359.8,795.3 319.1,829.7" fill="#d47868"/><polygon points="716.5,820.9 753.3,841.2 747.9,851.9 706.1,834.0" fill="#d0c658"/><polygon points="713.3,842.4 761.0,838.1 763.5,855.5 719.4,861.4" fill="#56b89c"/><polygon points="554.7,1062.7 564.1,1092.9 551.6,1100.7 540.0,1066.6" fill="#d0c658"/><polygon points="520.5,1098.8 521.9,1125.7 506.1,1126.8 501.5,1096.4" fill="#56b89c"/><polygon points="665.5,875.4 689.7,898.8 676.0,907.4 654.6,886.6" fill="#d47868"/><polygon points="533.0,991.7 554.4,995.0 549.4,1013.9 526.3,1008.0" fill="#2e80c0"/><polygon points="735.6,736.5 766.0,746.0 760.8,758.2 734.8,748.5" fill="#d47868"/><polygon points="583.8,742.2 637.6,781.9 632.5,792.1 571.2,747.5" fill="#c648b4"/><polygon points="630.8,706.4 677.6,720.6 672.5,737.0 632.0,726.6" fill="#d0c658"/><polygon points="560.1,879.7 594.3,891.2 588.7,907.1 556.0,895.0" fill="#501ccc"/><polygon points="397.6,698.8 433.2,665.1 447.8,674.6 411.8,706.3" fill="#d0c658"/><polygon points="692.6,801.9 713.3,789.0 727.5,805.1 699.9,818.9" fill="#c648b4"/><polygon points="474.5,980.6 488.7,1004.9 479.0,1012.2 462.9,988.3" fill="#2e80c0"/><polygon points="671.5,822.4 699.4,790.4 708.4,799.0 684.6,829.1" fill="#501ccc"/><polygon points="472.1,1021.1 477.7,1046.4 466.9,1047.4 458.7,1022.2" fill="#d47868"/><polygon points="403.2,688.2 421.5,662.9 428.2,671.6 410.9,699.0" fill="#501ccc"/><polygon points="337.9,726.9 366.9,705.9 373.5,717.7 346.8,738.3" fill="#c648b4"/><polygon points="572.3,718.5 599.0,735.2 591.8,749.7 559.5,729.6" fill="#56b89c"/><polygon points="553.1,947.7 542.3,979.3 532.5,976.5 538.7,943.7" fill="#d47868"/><polygon points="535.1,545.1 565.1,559.6 558.7,572.5 530.5,561.2" fill="#d0c658"/><polygon points="385.0,822.9 422.2,785.9 436.5,798.5 397.8,838.0" fill="#2e80c0"/><polygon points="443.0,870.1 470.1,907.5 456.0,920.8 431.7,881.0" fill="#56b89c"/><polygon points="471.2,822.2 517.3,801.0 524.5,818.7 484.0,838.9" fill="#d47868"/><polygon points="586.3,905.1 613.1,907.9 612.2,926.3 586.1,919.3" fill="#56b89c"/><polygon points="578.4,627.4 623.1,650.6 612.3,669.9 564.8,644.5" fill="#c648b4"/><polygon points="417.2,716.8 476.9,714.1 476.5,735.3 425.6,739.5" fill="#c648b4"/><polygon points="410.0,490.3 447.3,501.5 443.3,514.6 408.3,502.3" fill="#2e80c0"/><polygon points="539.9,1061.3 538.1,1088.8 520.4,1088.7 521.7,1063.1" fill="#501ccc"/><polygon points="582.6,927.7 622.8,932.4 618.8,950.1 574.3,945.8" fill="#c648b4"/><polygon points="385.2,698.5 436.3,664.9 447.6,679.8 402.0,707.9" fill="#2e80c0"/><polygon points="589.1,950.0 620.5,956.7 613.4,975.9 588.1,969.9" fill="#501ccc"/><polygon points="558.6,509.7 611.9,514.9 609.2,525.2 555.8,522.5" fill="#c648b4"/><polygon points="734.3,759.0 781.6,790.6 774.3,806.7 727.5,769.3" fill="#56b89c"/><polygon points="573.2,738.7 614.6,785.7 602.9,790.7 568.4,751.2" fill="#c648b4"/><polygon points="534.4,870.1 529.2,899.1 509.3,899.3 514.5,869.0" fill="#501ccc"/><polygon points="606.4,718.5 635.4,750.9 629.5,758.5 597.2,725.8" fill="#c648b4"/><polygon points="344.8,800.0 387.5,766.9 399.0,780.4 349.0,815.8" fill="#d0c658"/><polygon points="473.4,798.3 516.7,797.1 520.3,807.2 477.5,810.9" fill="#501ccc"/><polygon points="418.4,798.0 447.7,796.1 450.1,811.9 420.4,815.4" fill="#2e80c0"/><polygon points="666.8,749.2 719.6,803.5 707.5,811.1 654.1,759.7" fill="#501ccc"/><polygon points="421.5,750.6 472.5,740.9 471.4,756.2 423.3,767.7" fill="#2e80c0"/><polygon points="525.6,859.0 558.2,869.7 548.9,884.9 522.7,874.9" fill="#d0c658"/><polygon points="756.8,792.0 798.4,802.6 794.7,813.8 751.3,806.8" fill="#d47868"/><polygon points="565.3,774.7 609.5,800.6 598.3,813.0 558.3,793.2" fill="#501ccc"/><polygon points="586.4,769.1 635.3,801.3 622.7,809.2 573.9,781.3" fill="#d0c658"/><polygon points="739.6,824.5 770.1,829.0 767.7,846.9 736.1,842.2" fill="#56b89c"/><polygon points="444.9,788.4 480.0,759.5 490.7,776.3 457.1,802.3" fill="#d47868"/><polygon points="696.2,751.7 742.6,764.3 742.3,772.4 693.3,762.2" fill="#2e80c0"/><polygon points="747.3,696.3 800.6,721.7 793.7,733.6 741.9,708.3" fill="#c648b4"/><polygon points="416.4,511.0 470.7,523.6 463.1,534.2 414.6,525.4" fill="#501ccc"/><polygon points="761.1,780.5 792.8,793.2 786.8,808.0 751.9,795.9" fill="#d0c658"/><polygon points="482.5,916.5 524.1,892.4 529.7,903.0 487.1,929.2" fill="#2e80c0"/><polygon points="374.1,742.5 404.4,725.4 413.6,739.3 379.7,757.7" fill="#56b89c"/><polygon points="751.3,742.2 789.7,762.4 779.4,774.0 747.4,755.3" fill="#c648b4"/><polygon points="410.8,845.4 452.3,810.1 457.5,826.0 416.3,859.9" fill="#2e80c0"/><polygon points="569.9,972.3 581.4,1000.3 571.4,1005.4 560.0,978.2" fill="#56b89c"/><polygon points="575.5,1046.6 584.4,1078.7 570.3,1081.0 561.5,1052.3" fill="#2e80c0"/><polygon points="446.3,543.2 478.8,561.3 472.7,575.1 439.0,555.8" fill="#c648b4"/><polygon points="728.5,767.7 778.4,781.3 781.3,798.0 723.1,787.6" fill="#501ccc"/><polygon points="482.6,756.0 515.6,731.0 527.0,742.3 494.7,764.4" fill="#c648b4"/><polygon points="501.9,1097.3 517.3,1116.1 509.5,1121.9 492.5,1103.9" fill="#56b89c"/><polygon points="511.1,760.7 542.2,798.7 528.5,808.7 503.1,774.1" fill="#2e80c0"/><polygon points="646.7,853.3 686.5,852.6 691.9,867.8 648.9,868.4" fill="#d47868"/><polygon points="384.2,698.4 411.3,677.6 422.5,696.1 394.3,713.5" fill="#501ccc"/><polygon points="661.9,804.0 710.2,814.4 703.1,833.4 656.1,820.3" fill="#56b89c"/><polygon points="587.0,947.2 598.6,975.1 587.0,985.2 571.8,957.2" fill="#2e80c0"/><polygon points="305.2,816.0 343.1,774.3 357.2,789.4 316.6,827.8" fill="#501ccc"/><polygon points="563.8,849.4 613.4,860.5 607.6,881.2 557.8,869.3" fill="#56b89c"/><polygon points="691.8,699.3 722.2,735.2 705.8,744.8 681.1,712.2" fill="#56b89c"/><polygon points="480.2,709.7 507.0,681.3 520.5,692.0 493.1,721.0" fill="#501ccc"/><polygon points="591.6,892.7 636.7,896.4 638.5,911.4 592.7,911.7" fill="#56b89c"/><polygon points="505.6,654.2 551.7,688.2 545.2,696.4 496.2,661.1" fill="#d47868"/><polygon points="549.3,966.9 559.6,983.7 549.0,991.0 537.4,976.9" fill="#c648b4"/><polygon points="577.2,668.3 626.0,698.2 621.9,714.1 563.4,679.4" fill="#56b89c"/><polygon points="550.7,1081.4 562.4,1097.7 551.7,1110.0 535.5,1092.3" fill="#c648b4"/><polygon points="400.3,704.6 426.7,668.1 441.6,676.2 414.7,712.0" fill="#56b89c"/><polygon points="516.6,815.3 550.4,809.9 552.5,824.8 518.1,829.6" fill="#501ccc"/><polygon points="547.2,1007.5 574.6,1017.5 572.2,1029.3 541.7,1020.5" fill="#56b89c"/><polygon points="633.8,831.8 654.9,860.5 637.8,870.7 619.3,841.3" fill="#2e80c0"/><polygon points="681.5,804.0 730.0,813.7 726.0,826.8 677.3,820.9" fill="#d47868"/><polygon points="535.6,1098.9 566.4,1112.4 559.6,1129.8 527.5,1119.6" fill="#56b89c"/><polygon points="625.2,890.4 651.4,900.6 646.8,911.6 618.6,901.0" fill="#501ccc"/><polygon points="441.3,538.3 467.3,553.2 464.2,563.2 435.2,545.9" fill="#c648b4"/><polygon points="432.8,521.9 476.1,543.4 472.0,558.4 420.5,533.1" fill="#2e80c0"/><polygon points="409.2,688.6 442.9,662.5 454.5,672.8 422.1,700.0" fill="#d47868"/><polygon points="604.4,703.8 638.3,736.2 625.0,751.7 591.3,714.1" fill="#d0c658"/><polygon points="429.7,839.5 446.6,814.4 464.2,826.9 446.5,848.2" fill="#d47868"/><polygon points="719.4,734.5 750.3,753.1 741.7,768.1 708.0,749.5" fill="#56b89c"/><polygon points="702.8,771.3 736.1,777.7 735.1,793.2 693.9,785.6" fill="#2e80c0"/><polygon points="583.1,722.5 605.2,745.4 600.9,753.7 577.5,728.8" fill="#56b89c"/><polygon points="528.8,611.9 547.3,636.2 532.0,651.1 512.8,621.8" fill="#d0c658"/><polygon points="463.1,908.0 481.1,936.6 459.8,945.4 447.6,918.8" fill="#501ccc"/><polygon points="459.9,502.5 494.4,520.5 490.8,529.5 449.9,509.1" fill="#501ccc"/><polygon points="550.3,1021.6 577.0,1030.3 566.1,1048.0 544.0,1035.4" fill="#d0c658"/><polygon points="504.1,1000.9 488.2,1026.1 472.4,1019.4 489.9,995.7" fill="#501ccc"/><polygon points="429.0,666.8 479.8,633.9 493.9,653.2 444.4,681.1" fill="#d47868"/><polygon points="431.9,833.8 463.3,785.5 479.4,802.5 452.7,842.6" fill="#56b89c"/><polygon points="733.2,712.4 774.4,739.9 772.0,752.9 727.2,724.2" fill="#d47868"/><polygon points="518.5,1076.2 524.6,1096.0 512.7,1099.4 506.4,1081.8" fill="#2e80c0"/><polygon points="656.0,820.8 686.8,831.6 677.4,848.6 649.7,837.4" fill="#d0c658"/><polygon points="614.0,694.5 637.5,718.3 631.5,727.8 605.3,705.0" fill="#56b89c"/><polygon points="615.2,920.9 651.1,942.7 651.1,958.2 609.2,936.7" fill="#2e80c0"/><polygon points="587.5,935.1 623.9,939.5 617.8,958.7 581.1,954.3" fill="#501ccc"/><polygon points="386.5,762.9 432.0,731.5 439.2,745.3 399.2,773.9" fill="#d47868"/><polygon points="516.2,727.5 563.9,754.5 561.3,768.7 504.3,736.7" fill="#2e80c0"/><polygon points="530.8,726.6 576.5,789.6 560.1,793.9 520.8,745.4" fill="#501ccc"/><polygon points="430.9,770.5 463.7,721.1 480.1,735.2 448.1,782.3" fill="#d47868"/><polygon points="523.6,739.5 557.3,765.7 544.7,778.7 510.7,757.1" fill="#d47868"/><polygon points="565.1,1016.5 553.7,1028.4 545.6,1018.6 558.1,1008.6" fill="#56b89c"/><polygon points="635.2,865.2 673.6,856.5 675.2,870.1 635.1,878.9" fill="#c648b4"/><polygon points="511.0,1054.1 515.6,1086.6 496.9,1089.9 492.3,1052.1" fill="#2e80c0"/><polygon points="579.3,858.6 592.9,879.9 578.2,885.8 565.0,866.9" fill="#501ccc"/><polygon points="672.6,740.3 712.1,751.6 709.3,761.6 665.9,750.6" fill="#2e80c0"/><polygon points="316.5,819.1 354.5,795.4 365.1,807.6 330.4,834.1" fill="#d0c658"/><polygon points="308.3,787.3 342.6,781.4 350.2,798.4 310.9,807.7" fill="#c648b4"/><polygon points="461.9,772.4 497.1,743.7 508.7,758.0 466.7,786.4" fill="#d0c658"/><polygon points="576.1,735.3 636.5,769.7 625.3,784.3 564.4,751.9" fill="#56b89c"/><polygon points="495.1,686.5 516.5,670.3 527.3,686.3 505.3,702.0" fill="#d47868"/><polygon points="615.9,893.1 645.0,921.7 632.4,933.6 606.0,903.6" fill="#501ccc"/><polygon points="527.3,654.1 550.5,690.4 533.9,702.2 511.2,664.4" fill="#56b89c"/><polygon points="333.4,786.9 377.7,769.3 379.9,783.7 334.9,800.2" fill="#c648b4"/><polygon points="472.7,554.2 501.7,580.1 495.0,591.0 462.3,562.0" fill="#2e80c0"/><polygon points="779.4,718.2 808.4,728.5 803.3,740.8 778.0,731.8" fill="#c648b4"/><polygon points="561.5,1093.5 555.1,1109.3 540.9,1107.3 546.2,1089.0" fill="#501ccc"/><polygon points="656.4,752.5 708.1,749.5 710.9,766.3 657.7,769.1" fill="#d47868"/><polygon points="504.4,536.4 547.1,558.4 543.6,571.7 499.1,545.9" fill="#501ccc"/><polygon points="587.6,865.0 617.2,863.4 624.3,881.7 588.1,886.7" fill="#2e80c0"/><polygon points="611.6,844.0 650.0,844.1 653.4,860.7 611.6,865.6" fill="#501ccc"/><polygon points="721.5,847.6 759.4,836.9 764.1,852.7 724.6,863.3" fill="#c648b4"/><polygon points="631.6,916.5 645.6,939.9 632.6,948.6 619.0,926.4" fill="#d47868"/><polygon points="571.0,697.9 590.9,743.4 581.1,752.9 560.3,705.6" fill="#501ccc"/><polygon points="311.9,817.7 346.0,780.7 355.2,790.2 320.2,830.3" fill="#56b89c"/><polygon points="424.6,847.6 461.7,859.0 459.0,877.6 418.9,870.5" fill="#501ccc"/><polygon points="693.1,750.0 722.8,769.0 709.3,781.2 683.7,763.8" fill="#56b89c"/><polygon points="350.2,749.7 396.6,708.0 407.7,719.8 363.9,757.6" fill="#c648b4"/><polygon points="514.7,544.5 551.8,574.6 547.8,584.0 513.9,555.7" fill="#56b89c"/><polygon points="488.7,857.3 519.2,831.7 533.6,842.3 505.5,870.4" fill="#501ccc"/><polygon points="530.9,924.8 552.2,943.9 540.1,954.9 520.1,939.7" fill="#d47868"/><polygon points="740.2,805.8 771.9,819.9 766.3,832.7 732.3,819.4" fill="#501ccc"/><polygon points="513.5,941.2 537.7,940.2 537.9,955.5 515.6,957.8" fill="#2e80c0"/><polygon points="464.4,731.9 504.3,700.4 514.8,717.8 471.4,750.0" fill="#d0c658"/><polygon points="561.9,732.6 584.8,763.2 576.0,768.2 552.5,738.2" fill="#501ccc"/><polygon points="476.0,616.5 533.8,636.0 526.2,650.8 470.2,632.4" fill="#d47868"/><polygon points="671.4,699.3 693.3,729.1 681.0,743.8 654.6,708.4" fill="#56b89c"/><polygon points="555.8,607.9 596.6,632.7 582.4,647.1 547.8,620.9" fill="#d0c658"/><polygon points="643.8,809.5 692.2,817.0 691.0,836.5 639.3,828.8" fill="#c648b4"/><polygon points="538.4,702.0 601.3,720.6 593.2,741.4 524.4,715.6" fill="#d0c658"/><polygon points="461.8,686.1 489.2,661.7 496.6,678.3 470.3,699.7" fill="#2e80c0"/><polygon points="559.1,815.1 594.9,831.3 590.6,845.9 555.9,831.9" fill="#d47868"/><polygon points="493.6,558.1 514.9,576.5 508.9,584.1 486.0,566.0" fill="#56b89c"/><polygon points="464.7,813.1 511.6,779.7 515.9,794.0 475.7,823.3" fill="#c648b4"/><polygon points="597.4,734.4 647.9,748.3 634.6,765.7 593.1,750.8" fill="#56b89c"/><polygon points="676.8,724.4 726.5,737.5 725.7,753.0 670.9,740.8" fill="#d0c658"/><polygon points="514.5,1000.7 518.4,1024.5 503.9,1026.3 499.2,1001.8" fill="#c648b4"/><polygon points="443.5,677.4 481.5,648.0 496.3,658.8 458.4,688.3" fill="#56b89c"/><polygon points="486.8,597.8 539.5,622.1 544.6,635.7 490.4,609.2" fill="#d47868"/><polygon points="530.3,991.0 537.7,1011.4 520.5,1013.0 518.5,997.0" fill="#c648b4"/><polygon points="542.6,494.5 584.1,525.9 575.0,533.3 533.3,503.1" fill="#d47868"/><polygon points="540.9,964.5 552.3,983.1 542.0,992.3 528.8,974.5" fill="#d0c658"/><polygon points="640.2,759.6 659.6,777.2 653.5,790.4 628.0,766.9" fill="#56b89c"/><polygon points="432.5,655.7 457.7,643.7 461.5,655.4 437.4,667.1" fill="#501ccc"/><polygon points="377.2,769.7 407.6,742.9 416.5,751.3 384.0,780.0" fill="#2e80c0"/><polygon points="511.9,779.5 554.0,802.0 549.0,821.7 507.7,798.3" fill="#56b89c"/><polygon points="537.2,586.5 561.8,604.5 555.1,619.4 531.3,599.7" fill="#501ccc"/><polygon points="497.7,993.6 513.9,1016.7 499.8,1026.4 485.4,1003.0" fill="#d47868"/><polygon points="642.3,765.9 678.1,811.9 671.4,822.2 632.9,775.9" fill="#56b89c"/><polygon points="375.7,789.5 418.0,777.6 416.6,792.1 376.2,807.3" fill="#2e80c0"/><polygon points="421.3,915.1 447.5,926.2 444.3,938.5 416.1,930.5" fill="#d47868"/><polygon points="509.2,1033.8 536.9,1026.2 541.7,1041.5 511.1,1052.3" fill="#56b89c"/><polygon points="492.2,1054.5 506.6,1072.4 496.9,1082.0 481.1,1063.4" fill="#56b89c"/><polygon points="385.5,786.7 422.1,791.6 420.4,800.8 383.8,799.6" fill="#2e80c0"/><polygon points="556.5,779.5 615.4,783.2 615.3,793.2 555.0,790.1" fill="#56b89c"/><polygon points="438.4,547.0 464.0,553.3 458.0,569.5 432.8,561.1" fill="#501ccc"/><polygon points="460.7,547.1 510.7,563.7 503.9,576.5 457.6,565.5" fill="#56b89c"/><polygon points="533.1,652.0 588.7,682.7 578.0,689.9 529.4,663.6" fill="#2e80c0"/><polygon points="573.8,1044.8 583.8,1065.1 569.4,1071.0 562.1,1054.8" fill="#d47868"/><polygon points="639.9,834.5 672.6,839.6 673.1,856.4 634.9,856.5" fill="#501ccc"/><polygon points="326.7,808.7 376.2,774.9 383.5,792.9 340.8,822.5" fill="#d0c658"/><polygon points="541.4,500.0 590.2,534.6 583.9,544.5 537.2,509.2" fill="#2e80c0"/><polygon points="457.7,473.9 479.8,503.1 474.5,515.1 446.8,483.9" fill="#d47868"/><polygon points="515.6,831.8 542.0,815.6 554.0,827.1 526.6,844.3" fill="#c648b4"/><polygon points="509.2,508.7 535.4,532.2 527.7,542.9 502.8,519.0" fill="#56b89c"/><polygon points="431.2,555.3 457.8,575.0 451.4,583.6 426.4,564.6" fill="#2e80c0"/><polygon points="396.2,710.5 417.0,676.6 428.7,689.0 408.6,716.9" fill="#501ccc"/><polygon points="531.4,599.8 568.0,612.7 567.9,622.4 531.7,610.9" fill="#501ccc"/><polygon points="492.7,604.8 551.4,628.4 546.1,642.1 493.2,618.0" fill="#2e80c0"/><polygon points="489.2,715.4 534.4,688.7 545.6,697.8 498.7,730.9" fill="#56b89c"/><polygon points="589.3,797.2 615.8,784.2 622.1,804.1 594.7,816.7" fill="#c648b4"/><polygon points="744.4,750.1 772.0,774.6 767.8,783.0 738.7,759.2" fill="#501ccc"/><polygon points="537.2,669.1 566.9,686.5 556.9,700.8 528.3,681.7" fill="#2e80c0"/><polygon points="562.1,627.5 613.6,642.3 613.3,660.1 559.5,643.4" fill="#56b89c"/><polygon points="761.4,829.5 808.8,821.4 810.9,834.2 770.0,840.6" fill="#2e80c0"/><polygon points="404.7,855.2 429.4,837.8 437.7,854.7 414.1,867.1" fill="#56b89c"/><polygon points="378.2,820.2 410.4,798.9 417.9,814.1 384.8,832.9" fill="#2e80c0"/><polygon points="583.9,994.5 597.4,1021.8 587.6,1030.3 572.1,999.4" fill="#d47868"/><polygon points="534.6,962.3 530.6,989.0 515.6,988.8 520.3,957.1" fill="#c648b4"/><polygon points="619.3,709.6 658.2,728.4 652.6,746.8 615.3,729.6" fill="#d0c658"/><polygon points="491.1,996.7 496.8,1018.6 480.9,1023.9 474.4,998.0" fill="#d47868"/><polygon points="573.6,832.5 611.3,823.3 611.9,836.3 578.0,844.3" fill="#c648b4"/><polygon points="583.0,892.7 608.5,918.2 592.2,930.8 568.7,903.7" fill="#2e80c0"/><polygon points="436.8,799.3 486.1,776.0 487.4,791.4 443.5,811.8" fill="#501ccc"/><polygon points="330.7,813.1 380.3,784.7 392.4,803.9 337.0,829.8" fill="#2e80c0"/><polygon points="377.3,833.9 381.1,779.6 394.5,777.8 389.9,840.5" fill="#501ccc"/><polygon points="542.8,748.3 585.2,802.0 568.2,813.8 525.1,763.8" fill="#d47868"/><polygon points="377.8,800.1 412.3,773.1 428.6,791.2 394.3,815.5" fill="#c648b4"/><polygon points="462.5,508.1 494.0,528.0 482.5,542.6 452.8,523.4" fill="#2e80c0"/><polygon points="719.6,834.0 748.9,837.1 741.5,855.2 720.4,850.3" fill="#c648b4"/><polygon points="453.8,690.4 484.7,671.8 491.0,681.5 459.2,701.9" fill="#56b89c"/><polygon points="740.0,773.6 787.0,809.0 778.8,814.4 735.8,782.2" fill="#501ccc"/><polygon points="564.0,630.1 607.5,669.0 597.3,678.6 554.7,640.4" fill="#c648b4"/><polygon points="464.0,595.6 489.3,610.3 483.2,624.3 460.5,610.6" fill="#d0c658"/><polygon points="539.3,665.1 563.3,707.2 554.3,722.6 525.1,670.4" fill="#c648b4"/><polygon points="706.5,877.9 737.6,853.1 746.4,870.2 718.7,889.6" fill="#2e80c0"/><polygon points="440.3,950.8 456.1,953.5 454.6,968.6 435.1,967.4" fill="#d47868"/><polygon points="436.0,484.2 467.6,490.6 462.1,506.5 433.8,499.0" fill="#56b89c"/><polygon points="612.2,894.9 642.2,900.7 637.5,915.7 609.2,913.7" fill="#d0c658"/><polygon points="416.1,894.9 448.3,899.7 444.6,915.9 415.9,912.4" fill="#2e80c0"/><polygon points="340.4,848.3 376.5,821.5 388.2,842.1 353.4,862.5" fill="#501ccc"/><polygon points="425.2,778.0 451.3,744.3 463.2,754.9 434.2,787.1" fill="#d47868"/><polygon points="428.3,711.1 466.0,692.7 473.0,702.8 433.5,719.6" fill="#c648b4"/><polygon points="560.6,839.7 586.6,822.5 594.7,832.2 570.5,850.6" fill="#56b89c"/><polygon points="598.0,713.4 644.6,744.4 634.0,753.0 590.3,723.0" fill="#501ccc"/><polygon points="513.9,1006.2 544.7,998.0 549.6,1009.3 519.3,1016.5" fill="#56b89c"/><polygon points="482.2,557.2 517.5,604.6 505.4,616.7 472.8,571.2" fill="#2e80c0"/><polygon points="539.5,665.1 588.6,680.4 583.6,690.7 532.6,675.8" fill="#d0c658"/><polygon points="730.1,830.7 763.5,832.7 768.8,850.3 729.1,852.0" fill="#2e80c0"/><polygon points="534.9,1018.5 549.3,1036.8 534.6,1046.8 520.4,1027.9" fill="#56b89c"/><polygon points="376.1,715.4 410.7,700.3 415.8,718.1 383.5,735.2" fill="#c648b4"/><polygon points="435.0,491.2 483.4,513.5 477.5,522.7 431.2,501.9" fill="#501ccc"/><polygon points="668.8,830.4 690.6,844.5 679.9,862.7 659.6,847.8" fill="#56b89c"/><polygon points="634.2,803.8 658.8,819.8 650.1,837.8 623.9,814.4" fill="#d47868"/><polygon points="685.2,809.6 724.4,816.2 720.4,830.5 676.5,820.5" fill="#c648b4"/><polygon points="502.9,848.6 550.6,838.9 553.4,857.2 507.4,865.5" fill="#2e80c0"/><polygon points="433.3,935.7 460.3,962.6 445.4,973.4 419.0,947.3" fill="#56b89c"/><polygon points="554.2,843.3 551.1,881.2 537.1,884.3 541.5,839.3" fill="#56b89c"/><polygon points="522.3,581.6 550.9,593.3 544.7,604.9 517.4,595.3" fill="#d47868"/><polygon points="588.3,759.7 613.7,785.8 611.4,797.0 581.9,769.6" fill="#2e80c0"/><polygon points="567.0,981.0 588.8,1003.9 578.6,1011.8 557.0,988.6" fill="#56b89c"/><polygon points="723.1,732.3 768.8,760.2 755.5,772.3 716.4,743.6" fill="#d0c658"/><polygon points="552.4,552.3 579.1,578.3 568.6,586.0 543.1,564.4" fill="#2e80c0"/><polygon points="426.5,823.5 460.7,800.9 478.1,816.7 441.6,842.0" fill="#501ccc"/><polygon points="371.0,722.0 395.8,700.9 407.9,712.4 381.0,733.2" fill="#56b89c"/><polygon points="662.6,899.9 697.1,892.6 699.1,912.4 665.7,915.8" fill="#501ccc"/><polygon points="693.0,748.6 751.2,768.6 745.9,785.6 691.0,765.1" fill="#d0c658"/><polygon points="625.4,913.9 667.7,938.6 659.0,948.7 622.0,928.2" fill="#d47868"/><polygon points="432.4,782.9 455.7,771.5 466.8,789.9 440.4,803.8" fill="#56b89c"/><polygon points="514.0,510.4 549.7,551.6 542.1,561.1 504.3,519.6" fill="#d47868"/><polygon points="605.8,1022.9 583.4,1041.5 577.4,1027.8 597.1,1014.7" fill="#d0c658"/><polygon points="535.4,926.0 567.1,948.8 557.9,964.0 526.3,941.3" fill="#c648b4"/><polygon points="511.3,714.0 558.2,746.6 550.9,760.4 502.5,724.4" fill="#2e80c0"/><polygon points="588.9,959.9 612.8,963.5 613.5,974.8 588.4,971.1" fill="#c648b4"/><polygon points="753.7,687.4 811.2,702.9 809.2,719.6 741.1,700.3" fill="#d0c658"/><polygon points="576.7,705.5 619.0,728.1 612.1,741.3 568.9,722.2" fill="#d47868"/><polygon points="504.8,1127.1 531.7,1134.4 530.6,1149.4 500.9,1147.1" fill="#c648b4"/><polygon points="579.0,727.9 616.6,748.3 606.2,758.3 570.7,740.3" fill="#2e80c0"/><polygon points="429.2,924.4 454.9,936.5 443.2,951.1 419.0,939.4" fill="#56b89c"/><polygon points="641.7,706.0 684.8,711.4 685.2,725.5 639.9,722.3" fill="#d47868"/><polygon points="425.0,752.2 454.8,744.3 461.6,753.2 428.8,765.7" fill="#2e80c0"/><polygon points="607.0,679.2 669.2,692.0 656.0,710.8 598.4,695.7" fill="#c648b4"/><polygon points="547.4,650.4 602.4,667.2 603.3,679.9 538.1,660.1" fill="#56b89c"/><polygon points="409.3,885.6 445.8,892.0 442.0,909.5 404.7,900.1" fill="#d0c658"/><polygon points="362.9,764.3 395.8,758.7 399.2,777.7 365.4,785.9" fill="#501ccc"/><polygon points="579.2,702.5 620.0,717.4 619.8,726.4 581.7,713.9" fill="#c648b4"/><polygon points="475.7,930.5 518.3,947.1 507.6,965.1 468.4,947.7" fill="#d0c658"/><polygon points="510.2,620.9 545.2,642.3 535.9,647.7 505.7,628.5" fill="#c648b4"/><polygon points="440.3,719.0 481.7,697.2 489.1,711.1 451.8,731.9" fill="#d47868"/><polygon points="610.3,901.5 653.4,910.6 647.5,923.6 611.5,917.3" fill="#c648b4"/><polygon points="693.6,800.2 738.5,786.3 746.5,802.4 704.9,818.8" fill="#2e80c0"/><polygon points="384.7,799.6 411.4,769.3 416.6,779.3 393.1,809.6" fill="#c648b4"/><polygon points="502.5,977.0 517.5,992.7 507.8,1003.5 491.2,986.3" fill="#56b89c"/><polygon points="662.7,751.9 713.3,776.7 706.7,789.5 655.8,761.2" fill="#d47868"/><polygon points="598.0,878.8 625.0,884.2 619.8,906.0 590.8,897.6" fill="#2e80c0"/><polygon points="406.1,851.4 445.5,850.8 441.1,871.4 408.5,873.0" fill="#56b89c"/><polygon points="510.2,748.0 566.2,773.8 566.7,790.0 500.8,762.9" fill="#501ccc"/><polygon points="601.6,891.5 646.6,910.4 634.2,928.4 593.5,912.0" fill="#c648b4"/><polygon points="733.3,816.4 756.3,831.1 752.0,841.7 727.2,825.1" fill="#56b89c"/><polygon points="539.2,850.2 563.0,844.3 568.2,863.9 543.0,868.8" fill="#c648b4"/><polygon points="586.7,845.2 627.9,867.2 623.8,879.4 575.9,855.5" fill="#d47868"/><polygon points="515.6,809.7 545.1,804.5 547.1,829.0 518.8,828.0" fill="#c648b4"/><polygon points="522.4,822.0 557.3,836.3 555.3,851.2 519.7,835.6" fill="#d0c658"/><polygon points="517.1,1103.5 520.9,1140.8 504.0,1138.4 501.1,1106.3" fill="#501ccc"/><polygon points="507.7,674.2 553.8,680.5 553.8,693.0 510.9,686.0" fill="#56b89c"/><polygon points="580.7,874.9 617.6,882.4 610.6,898.0 572.4,893.0" fill="#d47868"/><polygon points="595.7,867.5 627.9,865.3 629.4,881.1 591.0,882.3" fill="#d0c658"/><polygon points="437.0,783.8 467.1,743.0 480.9,748.3 441.2,795.5" fill="#c648b4"/><polygon points="541.3,709.1 600.7,699.7 601.7,720.2 541.7,726.0" fill="#501ccc"/><polygon points="591.3,864.4 612.3,879.8 599.5,897.2 576.1,877.9" fill="#56b89c"/><polygon points="517.7,792.8 547.0,823.4 532.7,835.5 501.3,806.8" fill="#d47868"/><polygon points="427.2,802.0 442.2,774.0 457.8,785.7 440.0,813.1" fill="#501ccc"/><polygon points="596.2,738.6 629.0,770.3 621.3,779.3 586.7,748.6" fill="#c648b4"/><polygon points="384.9,831.4 421.3,794.4 435.0,807.7 398.1,843.4" fill="#501ccc"/><polygon points="538.1,906.3 561.4,925.6 549.0,938.5 524.4,919.0" fill="#d47868"/><polygon points="735.4,842.4 745.3,880.8 733.3,883.7 722.2,846.4" fill="#2e80c0"/><polygon points="574.1,1090.1 554.5,1112.9 544.6,1107.7 568.0,1083.4" fill="#d47868"/><polygon points="515.2,654.2 556.1,713.8 537.5,715.5 501.3,662.9" fill="#501ccc"/><polygon points="493.8,605.4 535.0,625.6 522.7,640.7 484.2,619.7" fill="#2e80c0"/><polygon points="628.8,889.3 666.7,888.1 666.8,903.3 629.0,905.4" fill="#c648b4"/><polygon points="557.0,884.6 586.6,922.0 571.0,928.6 544.1,896.5" fill="#d0c658"/><polygon points="566.6,628.3 609.1,642.4 595.3,660.9 560.8,643.1" fill="#501ccc"/><polygon points="742.2,726.8 806.2,755.9 791.9,767.9 738.5,742.4" fill="#c648b4"/><polygon points="770.8,816.9 798.8,792.4 806.2,804.3 780.3,826.1" fill="#d0c658"/><polygon points="669.2,729.5 701.5,764.7 688.2,772.1 660.9,745.5" fill="#2e80c0"/><polygon points="543.0,543.5 579.6,569.8 577.0,585.8 537.2,553.3" fill="#d0c658"/><polygon points="467.8,525.6 515.0,547.0 506.8,554.5 460.8,535.6" fill="#2e80c0"/><polygon points="568.7,616.3 593.2,634.4 584.7,641.8 564.3,624.3" fill="#501ccc"/><polygon points="470.6,815.9 511.8,796.5 510.7,810.2 471.9,827.5" fill="#2e80c0"/><polygon points="530.4,940.6 558.2,947.4 552.1,964.5 526.5,958.7" fill="#d0c658"/><polygon points="465.1,845.0 492.0,879.0 477.7,883.8 455.4,855.6" fill="#2e80c0"/><polygon points="491.9,577.8 535.8,589.8 532.1,608.0 492.8,595.7" fill="#501ccc"/><polygon points="448.8,488.0 507.8,506.5 504.7,523.2 444.7,505.8" fill="#c648b4"/><polygon points="599.9,956.2 619.9,965.4 616.6,977.3 595.1,965.7" fill="#2e80c0"/><polygon points="511.6,1108.4 530.0,1120.8 518.5,1134.5 502.6,1122.6" fill="#c648b4"/><polygon points="510.3,614.2 541.8,625.8 535.1,633.2 505.7,622.7" fill="#501ccc"/><polygon points="555.8,775.8 598.8,794.5 600.5,806.4 555.6,786.0" fill="#d0c658"/><polygon points="659.4,718.3 687.7,742.8 677.4,751.8 648.6,730.7" fill="#2e80c0"/><polygon points="327.6,724.7 373.7,705.5 377.2,714.7 335.5,735.8" fill="#d0c658"/><polygon points="571.4,764.4 613.1,794.3 597.3,811.0 558.6,778.2" fill="#c648b4"/><polygon points="408.8,783.2 449.4,774.2 451.9,791.2 407.5,798.1" fill="#501ccc"/><polygon points="564.9,915.8 583.8,901.8 597.6,919.3 572.0,930.6" fill="#2e80c0"/><polygon points="547.0,1104.7 546.3,1124.2 531.1,1121.5 531.6,1098.7" fill="#56b89c"/><polygon points="671.1,852.9 713.1,872.1 701.2,891.1 665.5,869.2" fill="#2e80c0"/><polygon points="434.6,853.9 456.9,869.9 443.9,882.4 424.3,869.3" fill="#d47868"/><polygon points="509.8,648.1 581.7,667.0 571.3,679.3 506.6,665.2" fill="#501ccc"/><polygon points="510.3,885.0 530.2,865.1 544.1,877.9 521.7,896.6" fill="#d0c658"/><polygon points="480.1,591.9 506.9,618.6 497.5,625.6 470.7,603.3" fill="#d0c658"/><polygon points="456.5,961.8 466.7,980.7 453.8,990.2 440.7,965.7" fill="#2e80c0"/><polygon points="631.7,712.5 678.7,740.8 673.8,756.3 629.8,728.2" fill="#56b89c"/><polygon points="636.1,888.0 662.0,876.1 670.5,883.6 642.1,899.0" fill="#501ccc"/><polygon points="439.1,841.5 464.8,824.4 477.8,837.1 450.4,855.6" fill="#d47868"/><polygon points="569.1,837.9 611.3,816.4 615.4,830.4 575.3,850.0" fill="#2e80c0"/><polygon points="639.4,907.1 659.4,917.2 648.8,937.1 629.2,924.4" fill="#c648b4"/><polygon points="488.3,842.1 522.2,829.4 529.2,844.3 496.1,858.5" fill="#56b89c"/><polygon points="539.1,820.6 580.4,827.0 573.7,839.4 541.7,833.7" fill="#501ccc"/><polygon points="538.7,1029.2 551.0,1046.3 538.0,1053.0 529.0,1037.8" fill="#c648b4"/><polygon points="417.1,493.5 466.0,493.6 462.0,508.9 418.2,506.7" fill="#56b89c"/><polygon points="415.8,706.0 458.6,671.7 465.8,679.8 422.0,713.2" fill="#d47868"/><polygon points="542.0,1034.4 550.2,1048.3 535.4,1056.7 527.1,1041.9" fill="#c648b4"/><polygon points="718.7,750.3 736.8,778.8 728.1,787.1 707.3,757.7" fill="#d47868"/><polygon points="703.7,752.2 741.6,796.8 736.6,807.9 691.7,755.2" fill="#501ccc"/><polygon points="509.1,1069.3 523.9,1083.6 514.2,1093.4 503.0,1078.1" fill="#2e80c0"/><polygon points="627.0,719.3 674.1,735.4 676.0,750.7 625.1,732.5" fill="#501ccc"/><polygon points="429.8,756.4 466.5,715.5 477.5,726.5 442.1,768.0" fill="#c648b4"/><polygon points="513.8,851.7 545.4,830.3 555.9,846.9 525.6,865.2" fill="#501ccc"/><polygon points="615.1,830.7 650.9,852.8 641.6,862.4 608.7,844.9" fill="#d47868"/><polygon points="519.2,654.4 559.4,666.7 556.0,677.8 510.3,666.6" fill="#d0c658"/><polygon points="454.8,888.5 486.5,908.1 481.9,926.0 441.5,910.1" fill="#d0c658"/><polygon points="459.4,837.2 475.1,800.0 491.4,807.4 474.6,843.3" fill="#2e80c0"/><polygon points="643.4,781.8 683.9,800.6 677.3,808.7 639.2,789.6" fill="#2e80c0"/><polygon points="370.5,828.7 393.5,811.2 402.6,817.6 381.0,839.6" fill="#d0c658"/><polygon points="388.6,745.3 429.7,709.9 442.0,721.0 404.8,753.9" fill="#c648b4"/><polygon points="710.5,837.3 731.6,850.0 721.2,866.9 697.1,850.3" fill="#2e80c0"/><polygon points="481.6,1078.5 508.5,1059.7 513.2,1068.1 487.5,1087.0" fill="#56b89c"/><polygon points="583.3,1015.9 601.2,1041.2 586.3,1051.7 569.3,1026.9" fill="#d47868"/><polygon points="559.8,771.9 590.5,792.6 581.3,803.4 549.1,783.3" fill="#c648b4"/><polygon points="522.0,758.2 589.8,755.4 587.4,771.1 522.0,775.0" fill="#2e80c0"/><polygon points="461.6,827.9 483.4,799.6 493.9,813.6 478.1,838.5" fill="#c648b4"/><polygon points="516.1,689.9 559.4,717.5 561.2,729.9 511.1,696.6" fill="#56b89c"/><polygon points="673.6,864.7 693.0,886.8 680.5,900.9 658.9,875.1" fill="#c648b4"/><polygon points="418.1,806.7 456.3,757.6 465.8,772.5 432.7,822.1" fill="#d47868"/><polygon points="535.1,760.8 553.9,787.5 541.3,792.5 525.3,771.5" fill="#501ccc"/><polygon points="533.8,574.1 575.5,599.3 562.7,610.5 518.5,583.7" fill="#56b89c"/><polygon points="498.3,723.1 530.6,695.8 537.1,706.5 507.8,734.1" fill="#c648b4"/><polygon points="456.0,920.7 500.7,930.6 499.2,946.3 452.2,935.5" fill="#501ccc"/><polygon points="724.7,818.6 751.9,811.7 758.0,828.9 727.3,835.5" fill="#2e80c0"/><polygon points="522.6,525.1 555.6,545.7 553.4,560.2 512.8,536.6" fill="#c648b4"/><polygon points="525.9,751.3 556.0,775.6 542.2,784.7 514.8,761.5" fill="#2e80c0"/><polygon points="576.9,988.1 576.3,1014.2 558.4,1013.1 557.4,991.2" fill="#d47868"/><polygon points="465.8,556.2 491.6,595.3 486.7,604.0 458.2,562.2" fill="#d47868"/><polygon points="532.9,1106.3 560.0,1126.3 549.4,1136.7 523.9,1121.0" fill="#501ccc"/><polygon points="463.4,690.8 506.0,670.2 517.2,677.4 459.6,704.3" fill="#d0c658"/><polygon points="483.6,535.9 524.4,571.9 515.6,580.5 468.9,539.9" fill="#d47868"/><polygon points="566.4,927.4 591.4,969.9 577.4,980.4 556.8,936.2" fill="#501ccc"/><polygon points="519.7,1049.7 505.4,1057.0 500.5,1045.8 515.8,1039.4" fill="#d47868"/><polygon points="623.2,881.6 648.9,892.2 644.9,914.9 614.2,904.8" fill="#501ccc"/><polygon points="565.5,954.0 572.9,979.0 554.5,981.2 548.3,958.0" fill="#56b89c"/><polygon points="402.6,732.5 430.4,710.7 434.7,725.0 412.5,740.1" fill="#d47868"/><polygon points="535.4,617.2 567.6,630.3 560.2,647.2 527.1,632.6" fill="#501ccc"/><polygon points="554.1,920.6 568.7,935.8 552.2,947.1 539.8,928.6" fill="#c648b4"/><polygon points="516.0,740.7 574.4,777.3 558.2,782.8 502.3,748.6" fill="#d47868"/><polygon points="601.1,798.2 638.0,815.4 631.2,829.7 598.1,811.9" fill="#501ccc"/><polygon points="549.9,990.8 580.0,995.0 579.9,1007.2 548.8,1003.3" fill="#501ccc"/><polygon points="365.6,780.3 393.0,762.6 397.0,773.4 375.6,788.1" fill="#d47868"/><polygon points="496.6,845.8 525.6,833.9 536.6,851.6 508.8,862.0" fill="#501ccc"/><polygon points="522.1,569.3 542.8,592.5 529.0,604.9 512.5,580.3" fill="#2e80c0"/><polygon points="736.4,722.7 779.8,763.1 759.4,773.3 723.3,737.9" fill="#c648b4"/><polygon points="449.3,928.2 453.8,966.0 441.4,971.9 436.5,932.1" fill="#d0c658"/><polygon points="429.0,767.7 485.6,738.6 494.8,756.7 443.8,786.4" fill="#2e80c0"/><polygon points="476.5,653.8 498.9,634.8 506.9,650.6 487.9,667.5" fill="#d47868"/><polygon points="506.1,1034.5 537.6,1043.0 531.5,1058.8 503.9,1049.6" fill="#c648b4"/><polygon points="533.6,550.1 568.4,572.9 566.8,586.5 526.6,560.7" fill="#56b89c"/><polygon points="688.7,875.9 712.5,876.2 711.4,892.3 689.1,894.4" fill="#2e80c0"/><polygon points="658.3,753.6 687.1,751.7 687.0,769.1 657.5,768.5" fill="#56b89c"/><polygon points="553.1,686.7 614.2,719.4 601.1,730.0 550.8,701.3" fill="#c648b4"/><polygon points="313.8,799.0 344.3,756.6 356.7,774.3 324.2,816.1" fill="#56b89c"/><polygon points="573.1,654.4 611.1,704.6 596.6,709.1 563.5,667.1" fill="#d0c658"/><polygon points="533.2,557.5 568.6,576.6 560.7,590.7 525.9,574.6" fill="#d47868"/><polygon points="521.8,803.9 559.7,818.8 552.4,831.5 518.6,819.6" fill="#d47868"/><polygon points="523.9,702.4 568.6,724.4 564.3,740.3 518.1,716.5" fill="#c648b4"/><polygon points="506.5,1091.9 530.1,1103.1 522.7,1118.9 500.9,1103.8" fill="#501ccc"/><polygon points="487.3,807.7 513.7,785.1 523.7,794.5 494.8,819.4" fill="#d47868"/><polygon points="378.5,720.7 417.8,687.9 430.9,696.8 396.7,729.7" fill="#2e80c0"/><polygon points="637.2,849.5 656.1,866.0 649.6,877.6 625.4,859.2" fill="#501ccc"/><polygon points="511.1,895.5 543.3,903.6 538.3,919.4 502.0,911.5" fill="#c648b4"/><polygon points="542.1,1068.1 546.4,1090.5 526.7,1089.4 525.7,1067.6" fill="#501ccc"/><polygon points="419.6,650.8 451.4,635.5 456.4,648.2 422.8,665.0" fill="#d47868"/><polygon points="468.3,600.4 500.8,621.9 494.6,627.3 465.2,608.3" fill="#c648b4"/><polygon points="530.0,961.4 547.1,973.8 537.0,990.7 516.6,978.5" fill="#2e80c0"/><polygon points="557.1,865.4 594.1,897.5 582.2,906.3 551.0,879.9" fill="#501ccc"/><polygon points="637.3,869.5 666.1,869.4 670.1,880.5 639.9,883.5" fill="#d47868"/><polygon points="542.5,1094.5 560.2,1121.1 551.3,1133.9 524.1,1106.2" fill="#501ccc"/><polygon points="415.3,725.5 470.3,704.6 473.1,716.7 425.0,732.4" fill="#2e80c0"/><polygon points="542.4,904.6 569.3,902.5 571.1,921.8 545.8,924.8" fill="#56b89c"/><polygon points="458.0,902.0 492.5,934.1 481.4,948.4 450.3,918.6" fill="#2e80c0"/><polygon points="566.0,696.9 602.2,729.8 590.1,735.7 559.2,705.8" fill="#56b89c"/><polygon points="390.6,840.0 412.2,815.1 420.7,823.0 399.3,847.7" fill="#d0c658"/><polygon points="562.7,875.7 604.4,886.9 602.0,905.9 565.1,897.1" fill="#c648b4"/><polygon points="365.2,793.7 378.9,768.7 389.4,773.5 374.3,801.0" fill="#501ccc"/><polygon points="699.2,743.6 719.2,761.3 712.6,769.8 692.1,752.9" fill="#d0c658"/><polygon points="350.6,726.0 406.9,718.8 410.1,740.2 343.7,744.2" fill="#2e80c0"/><polygon points="572.9,696.6 621.8,733.7 613.9,747.7 561.5,712.7" fill="#56b89c"/><polygon points="695.6,704.7 722.0,732.8 709.8,745.0 681.0,716.3" fill="#d47868"/><polygon points="416.4,505.5 460.0,518.0 460.1,530.0 407.0,515.0" fill="#56b89c"/><polygon points="539.5,919.6 569.2,912.9 573.9,926.2 542.5,934.2" fill="#501ccc"/><polygon points="522.2,1037.1 540.4,1049.9 535.1,1061.5 514.8,1045.2" fill="#d47868"/><polygon points="660.9,793.4 675.8,830.3 658.8,834.8 643.3,798.8" fill="#2e80c0"/><polygon points="469.5,508.0 507.3,532.9 499.7,547.7 463.7,520.9" fill="#501ccc"/><polygon points="562.1,1099.5 564.7,1126.9 551.3,1124.9 548.8,1103.3" fill="#d47868"/><polygon points="512.6,873.6 553.8,892.1 548.5,908.6 506.7,893.0" fill="#d47868"/><polygon points="531.1,902.8 555.1,928.6 545.3,936.9 524.4,912.1" fill="#d0c658"/><polygon points="491.9,1016.7 519.3,1036.1 513.4,1045.8 483.2,1026.2" fill="#c648b4"/><polygon points="517.8,526.0 543.5,533.3 539.4,545.5 513.4,535.3" fill="#56b89c"/><polygon points="527.2,1041.5 551.5,1062.1 537.7,1075.2 517.5,1054.7" fill="#d47868"/><polygon points="350.3,827.4 369.6,804.3 378.6,812.0 361.1,833.8" fill="#2e80c0"/><polygon points="465.2,676.6 493.9,648.8 505.2,662.6 479.8,688.9" fill="#d47868"/><polygon points="446.6,669.3 505.8,645.8 510.9,665.3 461.1,689.2" fill="#d0c658"/><polygon points="725.7,761.7 768.6,803.2 762.5,817.1 715.1,770.4" fill="#501ccc"/><polygon points="481.9,612.0 535.5,624.0 526.1,639.8 480.1,626.7" fill="#2e80c0"/><polygon points="440.9,730.5 491.9,687.7 502.2,701.1 454.2,735.6" fill="#501ccc"/><polygon points="486.0,918.2 535.8,913.3 531.7,935.7 490.9,938.2" fill="#d47868"/><polygon points="521.5,825.2 547.7,816.1 553.1,840.0 528.8,845.1" fill="#56b89c"/><polygon points="591.3,741.6 631.3,762.8 623.3,777.7 585.3,756.9" fill="#d47868"/><polygon points="568.4,627.8 608.3,663.2 599.4,672.3 558.7,634.6" fill="#2e80c0"/><polygon points="758.8,731.7 810.0,751.8 806.2,766.6 757.1,750.1" fill="#d0c658"/><polygon points="430.8,745.6 429.8,709.0 445.2,708.1 448.2,742.1" fill="#c648b4"/><polygon points="421.2,526.8 472.5,532.6 474.1,548.6 418.9,541.4" fill="#d47868"/><polygon points="455.6,493.1 485.1,509.8 477.6,520.0 449.2,505.4" fill="#501ccc"/><polygon points="608.6,851.2 630.4,873.7 619.8,881.8 597.9,859.7" fill="#2e80c0"/><polygon points="558.6,938.5 604.9,940.6 604.9,954.8 559.0,951.0" fill="#d0c658"/><polygon points="455.2,547.3 469.6,594.1 458.5,598.0 443.8,548.8" fill="#501ccc"/><polygon points="397.2,685.4 447.8,682.9 444.2,697.4 396.5,701.7" fill="#501ccc"/><polygon points="452.8,530.3 481.6,549.6 471.2,562.9 441.9,541.8" fill="#d0c658"/><polygon points="482.4,668.6 527.7,645.1 527.1,660.9 486.3,680.2" fill="#d47868"/><polygon points="454.5,729.3 506.2,719.4 504.0,734.7 455.3,745.0" fill="#56b89c"/><polygon points="479.1,969.6 506.9,973.9 508.2,985.1 478.8,981.3" fill="#501ccc"/><polygon points="399.8,709.4 441.4,677.6 454.2,693.1 412.6,727.6" fill="#d47868"/><polygon points="387.3,759.0 417.0,740.7 423.1,755.8 398.3,773.5" fill="#d0c658"/><polygon points="381.5,709.0 394.4,683.9 410.9,690.2 394.3,719.3" fill="#2e80c0"/><polygon points="509.8,1051.1 528.2,1068.7 515.4,1079.8 497.3,1061.2" fill="#c648b4"/><polygon points="580.2,715.0 628.0,743.4 628.4,757.4 577.4,729.2" fill="#d47868"/><polygon points="732.5,727.6 785.0,754.9 774.5,769.6 721.4,743.1" fill="#d0c658"/><polygon points="400.8,668.3 451.1,641.1 460.7,657.7 414.0,682.0" fill="#d47868"/><polygon points="475.7,724.5 498.1,707.8 511.5,723.7 485.5,741.0" fill="#501ccc"/><polygon points="528.9,578.9 567.9,598.9 567.5,615.3 522.6,590.0" fill="#2e80c0"/><polygon points="530.8,1113.4 562.9,1119.8 558.9,1132.7 531.8,1128.1" fill="#56b89c"/><polygon points="628.5,851.0 648.6,874.7 637.5,883.6 620.1,862.2" fill="#501ccc"/><polygon points="539.4,1000.0 554.4,1030.6 535.6,1041.5 520.8,1009.2" fill="#2e80c0"/><polygon points="638.8,712.3 704.4,720.2 700.5,731.2 632.6,722.6" fill="#56b89c"/><polygon points="498.7,910.0 524.8,922.1 514.8,935.9 491.8,923.6" fill="#2e80c0"/><polygon points="759.5,737.8 803.7,747.5 798.7,759.1 757.5,751.8" fill="#56b89c"/><polygon points="632.9,908.0 665.3,881.2 675.9,893.8 643.8,918.8" fill="#c648b4"/><polygon points="413.6,752.2 459.9,732.8 470.9,751.4 426.1,768.1" fill="#56b89c"/><polygon points="566.1,854.6 584.1,880.9 569.9,891.0 551.8,863.7" fill="#d47868"/><polygon points="506.5,506.2 539.3,523.0 533.5,537.6 497.6,520.6" fill="#501ccc"/><polygon points="589.7,879.3 628.5,870.3 635.2,888.1 594.4,902.0" fill="#501ccc"/><polygon points="444.1,914.0 468.6,941.1 459.4,950.8 435.4,923.4" fill="#d47868"/><polygon points="664.0,697.8 712.4,721.1 709.5,736.8 658.6,710.2" fill="#56b89c"/><polygon points="476.7,980.3 499.9,988.3 497.9,1002.2 472.3,990.3" fill="#d47868"/><polygon points="482.0,1052.2 499.3,1062.9 490.6,1078.9 475.6,1065.9" fill="#56b89c"/><polygon points="495.5,1006.8 524.9,1027.5 512.7,1039.8 488.3,1022.5" fill="#d0c658"/><polygon points="521.2,721.0 590.2,749.5 577.0,764.8 513.8,738.4" fill="#d0c658"/><polygon points="578.6,882.4 581.9,911.6 567.6,911.4 563.5,885.3" fill="#2e80c0"/><polygon points="707.8,775.3 740.7,813.3 724.2,826.9 690.3,786.5" fill="#d0c658"/><polygon points="605.3,876.6 634.4,908.4 621.5,916.8 590.3,882.9" fill="#56b89c"/><polygon points="395.2,740.0 422.6,732.5 427.5,746.1 395.9,749.5" fill="#501ccc"/><polygon points="459.6,885.7 505.0,891.5 504.7,907.9 457.2,899.4" fill="#d47868"/><polygon points="466.9,760.8 475.7,729.3 490.6,732.2 481.9,763.2" fill="#501ccc"/><polygon points="624.6,915.3 640.2,940.4 621.1,949.0 609.3,926.2" fill="#d47868"/><polygon points="425.8,750.8 465.3,727.1 477.2,741.8 437.2,766.1" fill="#56b89c"/><polygon points="696.1,850.0 728.5,863.8 727.9,880.3 689.3,863.4" fill="#d0c658"/><polygon points="447.5,988.0 479.2,998.5 473.4,1010.5 445.3,1001.6" fill="#501ccc"/><polygon points="574.5,678.5 597.7,697.7 587.6,714.8 562.9,691.3" fill="#d47868"/><polygon points="370.6,699.9 393.0,681.7 410.3,696.4 381.9,719.4" fill="#2e80c0"/><polygon points="509.1,1077.4 529.8,1103.4 512.1,1116.7 491.4,1090.1" fill="#d47868"/><polygon points="389.2,763.7 417.3,760.5 418.9,776.7 392.7,779.8" fill="#501ccc"/><polygon points="519.5,1094.3 535.7,1125.8 526.2,1130.0 508.9,1101.6" fill="#c648b4"/><polygon points="340.3,710.3 377.4,679.3 385.9,687.7 349.0,718.2" fill="#2e80c0"/><polygon points="415.2,699.7 452.8,674.2 465.8,689.6 427.7,712.8" fill="#2e80c0"/><polygon points="499.5,841.1 548.1,843.6 540.7,856.0 500.1,854.5" fill="#c648b4"/><polygon points="552.3,1085.6 526.9,1092.2 522.7,1075.8 548.4,1070.1" fill="#501ccc"/><polygon points="460.2,1005.3 489.8,995.4 494.8,1008.4 462.5,1022.1" fill="#2e80c0"/><polygon points="423.8,809.8 483.7,807.5 476.1,826.3 426.0,830.1" fill="#c648b4"/><polygon points="603.0,950.7 618.3,977.2 605.9,989.4 588.5,962.7" fill="#2e80c0"/><polygon points="698.1,718.2 732.7,717.4 732.4,736.2 697.0,733.3" fill="#d0c658"/><polygon points="466.5,533.1 498.5,535.4 499.5,551.0 468.0,548.0" fill="#d47868"/><polygon points="526.3,737.5 562.3,768.0 549.0,775.6 518.5,752.5" fill="#56b89c"/><polygon points="661.6,714.9 707.0,751.7 696.7,768.6 653.5,729.9" fill="#501ccc"/><polygon points="341.2,779.8 384.6,786.5 383.0,799.8 340.4,793.3" fill="#c648b4"/><polygon points="582.2,660.7 634.7,688.4 628.1,706.9 574.5,679.7" fill="#56b89c"/><polygon points="527.0,950.5 542.3,968.3 529.4,978.9 510.8,964.8" fill="#d47868"/><polygon points="544.3,531.1 578.5,547.4 571.7,557.3 541.2,543.0" fill="#501ccc"/><polygon points="428.9,537.9 467.5,548.3 467.9,559.6 426.6,548.0" fill="#c648b4"/><polygon points="489.1,553.5 520.3,574.3 516.7,588.1 485.3,564.1" fill="#56b89c"/><polygon points="591.1,680.1 614.6,708.6 602.9,713.9 582.2,687.3" fill="#56b89c"/><polygon points="534.2,818.9 567.5,817.3 568.7,836.0 531.7,841.2" fill="#2e80c0"/><polygon points="574.7,928.4 597.8,945.1 591.1,957.8 565.5,941.5" fill="#d47868"/><polygon points="364.4,782.0 393.7,765.5 400.1,780.6 371.0,794.6" fill="#501ccc"/><polygon points="690.7,854.6 721.0,866.4 718.9,879.5 686.6,870.6" fill="#d0c658"/><polygon points="541.8,1084.7 533.9,1108.7 517.1,1104.8 526.0,1080.2" fill="#d0c658"/><polygon points="370.1,758.3 410.8,721.3 422.3,733.5 385.3,769.7" fill="#56b89c"/><polygon points="497.3,636.6 556.2,678.5 553.1,694.3 489.6,652.3" fill="#d0c658"/><polygon points="541.5,909.4 579.1,918.5 573.1,933.3 541.6,922.8" fill="#d47868"/><polygon points="538.2,772.9 580.8,801.7 576.5,814.7 528.2,779.0" fill="#c648b4"/><polygon points="719.4,844.0 763.2,867.2 756.6,881.0 714.6,858.3" fill="#501ccc"/><polygon points="733.8,730.3 775.3,768.8 766.8,778.0 725.1,736.2" fill="#c648b4"/><polygon points="345.6,717.9 394.3,692.3 398.4,704.6 350.4,731.2" fill="#56b89c"/><polygon points="544.2,663.5 582.8,687.0 575.9,695.9 540.2,675.7" fill="#c648b4"/><polygon points="453.0,851.9 468.2,811.0 484.1,821.6 468.9,853.7" fill="#2e80c0"/><polygon points="584.7,753.1 623.4,780.3 614.8,790.6 576.5,763.3" fill="#56b89c"/><polygon points="558.7,831.4 591.1,848.3 586.1,861.5 554.1,844.2" fill="#d47868"/><polygon points="507.6,1099.8 523.0,1110.7 518.0,1121.1 500.2,1112.7" fill="#d0c658"/><polygon points="417.3,793.4 431.7,758.8 442.8,763.1 427.5,798.6" fill="#56b89c"/><polygon points="480.3,944.7 510.4,940.3 514.3,957.5 476.9,962.9" fill="#d0c658"/><polygon points="484.0,733.1 539.6,704.1 548.3,714.9 488.2,744.5" fill="#2e80c0"/><polygon points="517.1,601.5 540.6,635.5 530.3,643.2 508.2,613.4" fill="#d0c658"/><polygon points="483.2,1006.8 496.8,1023.7 479.8,1031.6 469.9,1014.8" fill="#56b89c"/><polygon points="452.5,852.0 510.4,832.8 514.9,844.0 455.4,862.1" fill="#d47868"/><polygon points="539.9,833.8 561.4,839.9 560.5,852.4 537.5,848.7" fill="#2e80c0"/><polygon points="468.1,819.7 516.1,779.6 530.1,787.5 482.3,830.8" fill="#56b89c"/><polygon points="453.8,842.1 504.0,815.7 508.4,834.4 464.4,854.7" fill="#d47868"/><polygon points="564.6,640.3 614.8,655.8 617.5,669.4 561.0,652.0" fill="#c648b4"/><polygon points="568.9,709.2 599.2,726.9 593.5,742.7 559.1,721.2" fill="#d47868"/><polygon points="639.9,715.4 690.7,738.0 683.9,755.4 631.7,733.0" fill="#c648b4"/><polygon points="441.8,909.5 477.1,929.9 467.9,951.0 428.5,928.4" fill="#56b89c"/><polygon points="692.9,790.2 731.1,809.2 724.3,827.3 682.9,809.3" fill="#501ccc"/><polygon points="536.5,635.4 589.3,658.5 590.9,672.9 534.2,651.6" fill="#c648b4"/><polygon points="430.8,518.1 487.1,542.0 480.2,555.0 420.7,528.9" fill="#501ccc"/><polygon points="641.5,696.2 698.1,708.6 694.8,722.7 641.4,716.2" fill="#c648b4"/><polygon points="689.7,792.6 727.4,796.6 727.0,806.5 687.9,804.7" fill="#c648b4"/><polygon points="575.0,784.7 579.9,811.3 562.5,815.9 554.9,789.2" fill="#2e80c0"/><polygon points="435.1,510.8 477.9,525.9 473.5,533.2 432.4,519.6" fill="#56b89c"/><polygon points="360.3,751.6 378.1,729.2 395.4,737.4 374.5,761.3" fill="#d47868"/><polygon points="584.8,683.9 624.3,726.7 609.6,733.1 577.4,697.8" fill="#2e80c0"/><polygon points="587.8,690.2 639.2,732.0 626.1,742.7 579.5,706.8" fill="#56b89c"/><polygon points="490.8,733.9 532.2,708.6 535.4,727.1 495.4,751.9" fill="#2e80c0"/><polygon points="551.9,849.4 573.0,828.8 583.8,840.5 565.5,859.8" fill="#d47868"/><polygon points="480.4,574.7 503.9,587.3 502.2,595.1 475.9,583.1" fill="#c648b4"/><polygon points="508.5,688.5 549.7,705.3 542.5,718.7 506.1,703.4" fill="#d47868"/><polygon points="599.8,728.6 644.9,770.9 634.2,772.2 593.3,734.3" fill="#2e80c0"/><polygon points="550.9,504.1 577.2,519.7 572.9,531.3 546.0,515.7" fill="#56b89c"/><polygon points="552.0,1100.2 553.2,1123.1 535.5,1125.0 535.7,1099.8" fill="#c648b4"/><polygon points="737.5,825.5 759.7,847.6 747.8,863.5 726.9,839.4" fill="#501ccc"/><polygon points="490.2,765.9 513.0,728.5 525.2,738.9 503.6,772.5" fill="#56b89c"/><polygon points="465.6,605.5 495.3,640.0 491.2,651.1 457.8,612.9" fill="#56b89c"/><polygon points="361.2,824.9 376.9,794.5 394.2,806.9 379.7,835.0" fill="#c648b4"/><polygon points="618.1,845.0 655.7,820.2 664.5,837.0 626.4,862.6" fill="#d0c658"/><polygon points="547.5,957.8 562.7,976.2 553.7,983.0 539.0,964.8" fill="#d47868"/><polygon points="382.3,712.0 417.2,700.0 419.6,711.1 385.1,721.4" fill="#501ccc"/><polygon points="435.3,729.9 469.8,709.0 481.3,727.9 445.0,744.9" fill="#d47868"/><polygon points="375.4,739.9 405.8,730.7 411.5,741.7 383.3,751.2" fill="#d0c658"/><polygon points="633.6,807.3 662.1,827.9 652.0,838.8 625.9,817.2" fill="#2e80c0"/><polygon points="544.6,527.2 589.5,560.4 581.9,568.5 542.7,538.1" fill="#c648b4"/><polygon points="421.2,824.5 461.7,821.0 462.4,838.0 423.0,846.4" fill="#d47868"/><polygon points="490.2,1026.8 497.7,1046.4 480.1,1049.2 473.1,1031.0" fill="#56b89c"/><polygon points="397.2,809.1 423.3,811.3 427.5,832.3 395.7,832.0" fill="#d0c658"/><polygon points="383.5,793.6 431.6,773.1 439.9,783.9 393.7,804.0" fill="#c648b4"/><polygon points="626.9,812.1 649.6,801.1 659.7,815.0 637.2,827.0" fill="#2e80c0"/><polygon points="535.7,607.9 557.3,637.2 545.3,646.5 525.0,620.4" fill="#d0c658"/><polygon points="528.1,825.9 571.3,842.7 564.9,854.2 525.5,837.7" fill="#d47868"/><polygon points="535.0,1087.5 534.4,1104.6 517.8,1103.4 517.1,1085.9" fill="#c648b4"/><polygon points="499.6,518.2 528.3,555.3 517.3,561.9 492.1,528.9" fill="#d0c658"/><polygon points="525.1,1062.9 546.3,1061.6 544.9,1077.4 523.8,1076.0" fill="#2e80c0"/><polygon points="437.5,807.2 462.2,793.6 475.6,805.4 446.9,826.9" fill="#d0c658"/><polygon points="481.4,988.8 493.2,1010.2 481.3,1017.9 471.1,997.0" fill="#d47868"/><polygon points="742.8,722.5 770.8,745.1 761.7,758.1 733.5,730.3" fill="#d47868"/><polygon points="504.1,940.6 531.6,949.4 531.0,964.4 500.8,955.7" fill="#c648b4"/><polygon points="481.1,926.2 502.2,952.6 493.4,963.1 472.2,935.4" fill="#56b89c"/><polygon points="618.8,803.8 648.5,839.1 635.3,852.0 602.0,815.7" fill="#d47868"/><polygon points="485.7,543.7 534.1,555.4 531.8,564.6 478.7,553.6" fill="#c648b4"/><polygon points="494.2,900.4 520.0,906.7 521.8,923.4 493.6,921.0" fill="#d0c658"/><polygon points="371.6,820.3 406.9,797.1 415.3,806.6 379.8,831.9" fill="#d47868"/><polygon points="528.2,1032.8 519.3,1056.9 503.9,1056.4 512.6,1030.8" fill="#2e80c0"/><polygon points="525.8,1037.2 536.0,1063.5 524.2,1067.5 516.3,1039.2" fill="#56b89c"/><polygon points="503.5,625.2 533.3,629.3 534.7,641.4 505.1,635.9" fill="#2e80c0"/><polygon points="531.4,868.6 565.2,899.6 556.3,914.8 521.2,879.0" fill="#c648b4"/><polygon points="386.6,750.1 414.0,737.1 421.2,754.7 391.2,769.4" fill="#501ccc"/><polygon points="409.3,745.0 442.0,700.2 462.3,708.8 422.5,759.7" fill="#2e80c0"/><polygon points="430.7,929.4 472.6,937.5 463.7,951.3 428.3,943.1" fill="#c648b4"/><polygon points="574.0,747.6 616.2,771.3 610.8,784.3 566.2,759.1" fill="#56b89c"/><polygon points="462.4,616.5 502.9,655.8 492.9,659.9 452.3,620.5" fill="#56b89c"/><polygon points="518.4,855.1 549.9,870.6 540.2,883.6 511.7,871.5" fill="#2e80c0"/><polygon points="598.7,696.8 616.9,720.4 605.2,734.1 584.3,704.5" fill="#56b89c"/><polygon points="488.0,917.5 512.2,933.1 501.4,944.2 480.5,928.2" fill="#d0c658"/><polygon points="475.9,925.3 502.0,952.2 492.6,959.6 468.5,935.4" fill="#d0c658"/><polygon points="459.4,547.7 507.3,568.3 501.7,584.7 450.4,562.4" fill="#2e80c0"/><polygon points="576.7,1003.2 592.4,1028.7 581.0,1035.5 565.8,1010.3" fill="#d47868"/><polygon points="471.2,1024.4 499.6,1018.8 505.1,1028.1 473.4,1035.0" fill="#d0c658"/><polygon points="478.4,863.2 519.1,866.0 517.4,888.0 474.0,880.3" fill="#2e80c0"/><polygon points="730.2,811.2 756.8,832.5 749.5,851.1 717.3,831.3" fill="#56b89c"/><polygon points="704.1,735.9 763.7,743.3 762.6,754.6 704.3,746.1" fill="#501ccc"/><polygon points="606.7,892.4 633.2,905.6 622.5,923.9 597.2,912.2" fill="#2e80c0"/><polygon points="395.5,757.1 426.4,725.6 436.4,741.3 406.8,768.8" fill="#501ccc"/><polygon points="745.8,814.2 789.8,784.5 795.3,797.1 755.1,823.3" fill="#56b89c"/><polygon points="325.1,794.0 371.4,762.4 384.0,779.8 339.8,811.1" fill="#d47868"/><polygon points="334.6,726.7 369.9,700.6 377.9,710.2 342.7,735.1" fill="#c648b4"/><polygon points="535.4,1075.4 554.4,1103.2 538.3,1109.1 523.3,1081.0" fill="#d47868"/><polygon points="541.7,1099.8 570.3,1117.4 557.4,1131.0 533.8,1115.6" fill="#501ccc"/><polygon points="625.7,910.7 662.1,910.8 661.5,930.8 623.5,927.4" fill="#c648b4"/><polygon points="391.2,748.8 410.6,724.3 418.3,731.4 400.1,755.5" fill="#d47868"/><polygon points="643.5,855.8 681.0,882.8 676.3,893.8 634.7,865.3" fill="#2e80c0"/><polygon points="541.5,557.4 564.6,566.6 562.2,577.2 538.2,568.5" fill="#56b89c"/><polygon points="545.3,1111.7 554.2,1142.0 537.5,1148.4 530.6,1117.6" fill="#2e80c0"/><polygon points="443.3,869.2 479.7,900.4 469.0,919.0 435.5,887.8" fill="#56b89c"/><polygon points="621.4,738.9 679.4,768.8 669.0,781.1 612.6,753.7" fill="#2e80c0"/><polygon points="545.2,806.4 569.8,844.3 560.8,852.5 531.1,808.8" fill="#2e80c0"/><polygon points="622.2,810.8 653.5,818.6 654.5,830.9 619.9,825.5" fill="#56b89c"/><polygon points="673.4,759.4 707.8,785.3 698.6,796.5 665.0,770.8" fill="#d47868"/><polygon points="454.8,718.2 483.6,703.5 491.0,718.0 460.3,731.7" fill="#501ccc"/><polygon points="584.3,626.9 622.4,671.2 604.0,677.6 573.9,642.4" fill="#56b89c"/><polygon points="459.7,811.5 494.3,801.3 501.5,814.5 464.3,827.0" fill="#c648b4"/><polygon points="406.9,700.6 432.4,653.1 443.9,667.3 422.4,711.9" fill="#d0c658"/><polygon points="542.0,543.2 567.0,546.3 567.7,560.0 537.8,556.8" fill="#2e80c0"/><polygon points="558.9,602.6 584.8,625.5 572.3,634.9 550.7,612.8" fill="#d0c658"/><polygon points="707.5,750.5 751.9,765.9 747.6,775.8 696.2,759.5" fill="#501ccc"/><polygon points="561.7,617.0 586.7,638.0 578.9,649.6 553.9,625.1" fill="#56b89c"/><polygon points="493.2,724.5 520.1,684.3 533.5,693.1 508.2,732.9" fill="#d0c658"/><polygon points="474.9,833.1 526.0,801.0 539.1,813.3 484.5,849.8" fill="#d47868"/><polygon points="523.8,615.4 576.0,626.9 581.8,636.8 520.3,624.9" fill="#d0c658"/><polygon points="448.7,861.6 463.5,903.0 453.7,914.2 437.5,872.7" fill="#2e80c0"/><polygon points="570.8,706.6 628.9,738.0 623.3,752.4 569.4,724.3" fill="#c648b4"/><polygon points="338.5,703.2 393.1,694.3 388.6,711.2 341.5,718.1" fill="#501ccc"/><polygon points="529.4,657.0 577.4,677.6 572.0,692.9 523.9,674.8" fill="#56b89c"/><polygon points="501.7,713.6 548.1,749.3 537.7,758.1 494.8,725.9" fill="#2e80c0"/><polygon points="544.4,577.9 578.2,595.1 575.1,607.4 535.3,584.2" fill="#56b89c"/><polygon points="702.9,850.0 735.9,851.7 734.5,863.4 705.5,862.7" fill="#c648b4"/><polygon points="530.6,602.6 565.5,609.4 560.6,627.5 530.5,616.3" fill="#2e80c0"/><polygon points="457.4,655.7 499.8,636.7 504.9,648.2 467.6,665.6" fill="#d0c658"/><polygon points="319.2,718.9 370.4,693.8 373.9,710.9 329.5,730.4" fill="#d47868"/><polygon points="612.4,842.5 637.6,866.3 623.1,880.5 600.2,850.9" fill="#d0c658"/><polygon points="770.4,764.1 805.7,785.6 796.9,799.0 764.1,780.1" fill="#501ccc"/><polygon points="514.7,505.9 545.7,553.0 537.3,556.8 507.4,514.5" fill="#c648b4"/><polygon points="372.3,710.4 419.0,679.3 431.7,697.8 384.1,728.7" fill="#56b89c"/><polygon points="473.0,859.5 500.7,830.6 515.9,846.3 488.7,872.1" fill="#c648b4"/><polygon points="699.3,699.3 746.0,739.4 741.5,752.4 688.4,710.7" fill="#d47868"/><polygon points="458.4,710.7 501.3,686.8 506.7,696.7 463.5,720.2" fill="#c648b4"/><polygon points="696.8,870.0 720.7,878.2 713.8,889.4 692.4,881.9" fill="#d0c658"/><polygon points="432.9,895.6 460.2,900.8 460.9,917.4 433.6,916.0" fill="#c648b4"/><polygon points="451.9,759.0 482.0,730.3 493.0,744.6 465.6,771.7" fill="#2e80c0"/><polygon points="489.4,973.5 476.7,1000.0 460.7,992.8 475.6,962.9" fill="#d0c658"/><polygon points="519.1,859.3 555.0,875.3 547.1,893.6 512.1,884.2" fill="#501ccc"/><polygon points="394.8,737.4 405.2,708.9 420.0,710.9 406.5,744.7" fill="#2e80c0"/><polygon points="731.8,743.7 766.3,759.8 756.7,773.9 724.4,759.7" fill="#56b89c"/><polygon points="463.6,967.8 466.7,989.8 452.7,989.8 449.2,968.0" fill="#c648b4"/><polygon points="536.0,925.2 550.8,943.7 537.0,957.9 523.3,934.3" fill="#c648b4"/><polygon points="695.0,853.7 729.6,850.9 729.8,870.7 695.7,872.0" fill="#2e80c0"/><polygon points="371.6,835.8 413.4,809.9 419.6,821.7 377.8,846.5" fill="#d47868"/><polygon points="523.9,641.0 579.0,668.2 567.2,682.5 519.1,656.5" fill="#501ccc"/><polygon points="494.6,760.1 524.6,744.4 529.3,754.9 497.1,769.8" fill="#d47868"/><polygon points="620.3,887.2 643.3,893.7 642.1,909.8 616.9,904.8" fill="#56b89c"/><polygon points="552.6,1046.0 570.5,1057.0 562.5,1067.6 544.5,1057.6" fill="#d47868"/><polygon points="532.3,781.9 571.8,781.4 572.0,794.8 534.5,798.1" fill="#56b89c"/><polygon points="405.8,864.0 444.8,877.4 441.2,898.1 396.9,879.9" fill="#2e80c0"/><polygon points="474.0,529.8 495.7,546.9 487.2,559.8 467.9,544.7" fill="#56b89c"/><polygon points="524.2,1027.9 549.3,1024.6 556.9,1043.9 528.1,1049.8" fill="#2e80c0"/><polygon points="627.0,722.3 674.2,740.3 669.6,755.3 619.5,731.0" fill="#56b89c"/><polygon points="537.8,1057.7 553.7,1083.1 543.1,1091.8 524.5,1066.9" fill="#d0c658"/><polygon points="639.1,769.5 694.0,791.8 684.2,809.0 631.9,784.8" fill="#56b89c"/><polygon points="639.2,838.9 659.6,817.4 676.0,834.2 654.4,851.3" fill="#2e80c0"/><polygon points="602.4,724.4 626.1,751.8 612.5,765.8 587.3,732.9" fill="#d0c658"/><polygon points="350.2,781.0 385.0,765.3 391.0,784.3 356.8,797.6" fill="#c648b4"/><polygon points="453.9,942.2 502.7,953.5 496.3,967.2 455.8,959.3" fill="#501ccc"/><polygon points="514.8,740.2 566.1,789.2 547.5,794.6 499.8,753.7" fill="#501ccc"/><polygon points="697.1,846.0 720.8,860.0 711.5,870.6 688.0,855.3" fill="#56b89c"/><polygon points="374.4,797.7 402.2,784.7 409.5,796.7 380.5,808.2" fill="#d0c658"/><polygon points="526.7,621.1 594.4,653.4 579.7,659.4 526.2,635.5" fill="#d47868"/><polygon points="576.9,712.2 605.4,728.1 596.3,739.6 568.7,726.9" fill="#501ccc"/><polygon points="542.6,988.7 574.5,998.0 568.3,1009.7 541.9,1001.7" fill="#c648b4"/><polygon points="361.8,806.9 389.1,787.8 397.2,795.4 369.9,818.1" fill="#56b89c"/><polygon points="515.3,1027.2 502.9,1047.0 488.3,1032.1 500.3,1015.7" fill="#2e80c0"/><polygon points="579.2,1084.7 577.1,1112.3 562.3,1110.5 565.0,1084.4" fill="#501ccc"/><polygon points="620.4,968.7 603.0,982.7 589.5,968.6 610.9,953.9" fill="#2e80c0"/><polygon points="496.5,1015.5 488.2,1043.1 476.8,1044.1 484.7,1010.6" fill="#c648b4"/><polygon points="414.0,512.0 428.0,497.0 463.0,486.0 480.0,487.0 489.0,499.0 470.0,506.0 450.0,513.0 432.0,518.0" fill="#d47868"/><polygon points="436.0,541.0 458.0,531.0 478.0,540.0 480.0,565.0 455.0,580.0 441.0,578.0 435.0,552.0" fill="#d47868"/><polygon points="430.0,518.0 446.0,514.0 462.0,530.0 446.0,530.0" fill="#c648b4"/><polygon points="460.0,520.0 476.0,508.0 520.0,560.0 508.0,572.0" fill="#2e80c0"/><polygon points="486.0,499.0 500.0,503.0 526.0,522.0 514.0,528.0" fill="#d0c658"/><polygon points="545.0,521.0 552.0,515.0 570.0,512.0 572.0,530.0 556.0,540.0" fill="#d47868"/><polygon points="566.0,518.0 586.0,515.0 592.0,526.0 586.0,538.0 566.0,540.0" fill="#d0c658"/><polygon points="448.0,572.0 470.0,562.0 530.0,592.0 520.0,600.0 470.0,594.0" fill="#2e80c0"/><polygon points="486.0,594.0 500.0,588.0 552.0,600.0 556.0,616.0 520.0,614.0" fill="#c648b4"/><polygon points="476.0,618.0 492.0,606.0 520.0,622.0 556.0,606.0 558.0,618.0 520.0,632.0 490.0,628.0" fill="#d0c658"/><polygon points="530.0,560.0 545.0,555.0 574.0,588.0 560.0,592.0" fill="#d0c658"/><polygon points="505.0,555.0 530.0,560.0 552.0,600.0 530.0,596.0" fill="#c648b4"/><polygon points="560.0,628.0 590.0,630.0 606.0,642.0 596.0,656.0 570.0,650.0" fill="#d47868"/><polygon points="590.0,640.0 607.0,642.0 590.0,670.0 584.0,660.0" fill="#c648b4"/><polygon points="423.0,862.0 431.0,860.0 436.0,900.0 444.0,940.0 458.0,985.0 474.0,1025.0 494.0,1068.0 508.0,1090.0 500.0,1106.0 489.0,1074.0 475.0,1051.0 464.0,1025.0 455.0,1000.0 440.0,970.0 432.0,949.0 428.0,924.0 423.0,900.0 419.0,879.0" fill="#d84cc0"/><polygon points="498.0,1086.0 516.0,1084.0 520.0,1096.0 506.0,1100.0" fill="#581ee0"/><polygon points="502.0,1100.0 522.0,1094.0 530.0,1110.0 512.0,1112.0" fill="#3092e0"/><polygon points="503.0,1108.0 516.0,1106.0 524.0,1122.0 530.0,1146.0 518.0,1142.0 506.0,1125.0" fill="#e6d65a"/><polygon points="420.0,846.0 440.0,846.0 444.0,874.0 430.0,880.0 420.0,876.0" fill="#d0c658"/><polygon points="420.0,876.0 434.0,876.0 436.0,890.0 422.0,890.0" fill="#5ecfb0"/></g><g clip-path="url(#ne)"><polygon points="792.0,718.0 812.0,718.0 812.0,742.0 796.0,736.0" fill="#581ee0"/><polygon points="808.0,720.0 842.0,722.0 848.0,750.0 812.0,756.0 806.0,747.0" fill="#d84cc0"/><polygon points="806.0,748.0 848.0,750.0 872.0,760.0 854.0,760.0 810.0,756.0" fill="#581ee0"/><polygon points="838.0,722.0 856.0,716.0 862.0,740.0 846.0,750.0" fill="#e6d65a"/><polygon points="852.0,736.0 880.0,728.0 894.0,748.0 868.0,762.0 850.0,752.0" fill="#5ecfb0"/><polygon points="856.0,700.0 884.0,694.0 890.0,722.0 862.0,730.0" fill="#3092e0"/><polygon points="850.0,696.0 868.0,694.0 866.0,704.0 850.0,705.0" fill="#e6d65a"/><polygon points="874.0,688.0 904.0,682.0 910.0,702.0 884.0,708.0" fill="#e6d65a"/><polygon points="886.0,678.0 904.0,672.0 928.0,694.0 912.0,700.0" fill="#d84cc0"/><polygon points="902.0,672.0 920.0,663.0 934.0,668.0 940.0,690.0 926.0,696.0" fill="#5ecfb0"/><polygon points="932.0,668.0 951.0,660.0 961.0,666.0 962.0,682.0 944.0,694.0" fill="#e67e6c"/><polygon points="960.0,682.0 980.0,687.0 977.0,697.0 966.0,702.0 956.0,694.0" fill="#3092e0"/><polygon points="904.0,702.0 944.0,692.0 966.0,704.0 975.0,714.0 948.0,714.0 930.0,728.0 926.0,744.0 908.0,736.0 900.0,716.0" fill="#581ee0"/><polygon points="884.0,708.0 904.0,702.0 906.0,718.0 888.0,722.0" fill="#5ecfb0"/><polygon points="868.0,722.0 886.0,716.0 890.0,728.0 872.0,732.0" fill="#e6d65a"/><polygon points="884.0,724.0 910.0,720.0 918.0,748.0 896.0,762.0 888.0,748.0" fill="#3092e0"/><polygon points="908.0,738.0 928.0,740.0 920.0,768.0 908.0,764.0" fill="#d84cc0"/><polygon points="884.0,760.0 900.0,750.0 910.0,764.0 908.0,786.0 892.0,792.0" fill="#e6d65a"/><polygon points="900.0,760.0 918.0,758.0 916.0,772.0 908.0,786.0" fill="#e67e6c"/><polygon points="840.0,784.0 862.0,768.0 870.0,760.0 878.0,770.0 864.0,790.0 852.0,806.0 842.0,800.0" fill="#e67e6c"/><polygon points="838.0,792.0 850.0,790.0 852.0,808.0 844.0,804.0" fill="#d84cc0"/><polygon points="864.0,786.0 880.0,770.0 890.0,792.0 886.0,812.0 884.0,831.0 873.0,829.0 870.0,812.0" fill="#581ee0"/><polygon points="870.0,770.0 886.0,762.0 892.0,792.0 878.0,796.0" fill="#3092e0"/><polygon points="766.0,694.0 782.0,690.0 787.0,712.0 800.0,724.0 790.0,732.0 772.0,726.0" fill="#e67e6c"/></g></g></g><g clip-path="url(#land)"><g clip-path="url(#main)"><rect x="300" y="470" width="500" height="700" fill="#000" filter="url(#spk)"/></g></g><g filter="url(#rag)"><g clip-path="url(#land)"><polygon points="418.0,886.0 423.0,900.0 428.0,924.0 432.0,949.0 440.0,970.0 449.0,988.0 455.0,1000.0 464.0,1025.0 475.0,1051.0 489.0,1074.0 494.0,1090.0 498.0,1098.0 509.0,1093.0 504.0,1074.0 491.0,1051.0 478.0,1015.0 463.0,977.0 446.0,940.0 434.0,900.0 430.0,884.0" fill="#d84cc0"/><polygon points="503.0,1108.0 514.0,1106.0 521.0,1122.0 527.0,1146.0 518.0,1142.0 506.0,1125.0" fill="#e6d65a"/></g></g><path d="M880 1021L876.500 1046L873 1066L869 1087" stroke="#a43298" stroke-width="2.500" fill="none" stroke-dasharray="18 3 13 5 8 7 4 20"/><path d="M890 1140L894 1155L899.500 1172" stroke="#7a2a70" stroke-width="2.400" fill="none" stroke-dasharray="3 9 5 7"/><rect x="299" y="340.500" width="694.500" height="982" fill="none" stroke="#5a0830" stroke-width="1"/><rect x="299" y="340.500" width="694.500" height="982" fill="none" stroke="#3488c8" stroke-width="1" stroke-dasharray="2 5"/><rect x="299" y="341" width="19.500" height="19.500" fill="#fff" stroke="#3a8ad0" stroke-width="1"/><rect x="299" y="821.5" width="19.500" height="19.500" fill="#fff" stroke="#3a8ad0" stroke-width="1"/><rect x="299" y="1302" width="19.500" height="19.500" fill="#fff" stroke="#3a8ad0" stroke-width="1"/><rect x="636.25" y="341" width="19.500" height="19.500" fill="#fff" stroke="#3a8ad0" stroke-width="1"/><rect x="636.25" y="1302" width="19.500" height="19.500" fill="#fff" stroke="#3a8ad0" stroke-width="1"/><rect x="973.5" y="341" width="19.500" height="19.500" fill="#fff" stroke="#3a8ad0" stroke-width="1"/><rect x="973.5" y="821.5" width="19.500" height="19.500" fill="#fff" stroke="#3a8ad0" stroke-width="1"/><rect x="973.5" y="1302" width="19.500" height="19.500" fill="#fff" stroke="#3a8ad0" stroke-width="1"/></svg></div>
<div class="tab" style="left:1186px;top:263px;width:244px;height:51px"></div>
<div class="tab" style="left:1428px;top:272px;width:118px;height:42px;border-left:none"></div>
<span class="t" style="left:1213.07px;top:276.94px;font-size:27.00px;line-height:27.00px;color:#111;letter-spacing:0.344px;">Item Properties</span>
<span class="t" style="left:1457.00px;top:281.19px;font-size:27.00px;line-height:27.00px;color:#111;letter-spacing:0.155px;">Atlas</span>
<span class="t" style="left:1437.97px;top:321.75px;font-size:22.50px;line-height:22.50px;color:#111;letter-spacing:0.697px;">Item Properties</span>
<svg style="left:1876px;top:318px" width="24" height="24" viewBox="0 0 24 24"><rect x="1" y="1" width="22" height="21" rx="4" fill="none" stroke="#3a3a3a" stroke-width="1.6"/><path d="M5.5 5.5L17.5 17.5M17.5 5.5L5.5 17.5" stroke="#2a2a2a" stroke-width="3.2"/></svg>
<div id="band"></div>
<span class="t" style="left:1201.59px;top:376.71px;font-size:25.50px;line-height:25.50px;color:#0c0c0c;letter-spacing:0.563px;font-weight:bold;">Map 1</span>
<svg style="left:0;top:0" width="1900" height="1428" viewBox="0 0 1900 1428"><g transform="translate(1206.5 425.3) scale(0.679012 0.668182)"><defs><linearGradient id="rg1206" x1="0" y1="0" x2="0" y2="1"><stop offset="0" stop-color="#7fb2e6"/><stop offset="1" stop-color="#2f6cb3"/></linearGradient></defs><path d="M1 15.5C3 5.5 14 0.5 23.5 2.2C28 3 31 5 33 7L38.8 2V19.5H21L27.5 13C25 10.5 21 9.6 17 10.4C10 11.6 5 14.5 1 19.5Z" fill="url(#rg1206)" stroke="#2f66a8" stroke-width="1.1" stroke-linejoin="round"/><path d="M39.5 28.5C37.5 38.5 26.5 43.5 17 41.8C12.5 41 9.5 39 7.5 37L1.7 42V24.5H19.5L13 31C15.5 33.5 19.5 34.4 23.5 33.6C30.5 32.4 35.5 29.5 39.5 24.5Z" fill="url(#rg1206)" stroke="#2f66a8" stroke-width="1.1" stroke-linejoin="round"/></g><rect x="1250.1" y="433.500" width="1.800" height="13.300" fill="#474747"/><rect x="1362.1" y="433.500" width="1.800" height="13.300" fill="#474747"/><rect x="1474.1" y="433.500" width="1.800" height="13.300" fill="#474747"/><rect x="1586.1" y="433.500" width="1.800" height="13.300" fill="#474747"/><g transform="translate(1266.5 426.5)"><defs><linearGradient id="sp1266_426" x1="0" y1="0" x2="1" y2="0"><stop offset="0" stop-color="#d2d2d2"/><stop offset="0.350" stop-color="#ececec"/><stop offset="1" stop-color="#e6e6e6"/></linearGradient></defs><rect x="3.0954" y="1.215" width="23.0546" height="23.49" fill="url(#sp1266_426)" stroke="#a2a2a2" stroke-width="1.300"/><path d="M0.700 2.814a2.5326 2.5326 0 0 1 5.0652 0V22.779a2.5326 3.3768 0 0 1 -5.0652 0Z" fill="#f1f1f1" stroke="#a2a2a2" stroke-width="1.200"/><path d="M0.700 22.4976C0.700 27.2 6.1908 26.6 7.8792 26.4H16.616C12.06 26.4 6.7536 25.8744 5.3466 21.9348" fill="#dcdcdc" stroke="#a8a8a8" stroke-width="1.100"/></g><path d="M1272.500 432.300H1287.200V447.200H1272.500ZM1287.200 432.300L1292.300 427.600M1287.200 447.200L1292.300 452.300" fill="none" stroke="#111" stroke-width="1.400"/><g transform="translate(1264 424)"><path d="M0 11C0.500 3 5 -0.200 10 0C15 0.200 17.200 4 17.200 8V13.700H23.700L14.500 22.700L5.800 13.700H11.800V8.500C11.800 5.500 10 4.300 8 4.500C4.500 4.800 1.500 7.500 0 11Z" fill="#ea7f34" stroke="#dd6f22" stroke-width="0.700" stroke-linejoin="round"/></g><g transform="translate(1318.8 426.5)"><defs><linearGradient id="sp1318_426" x1="0" y1="0" x2="1" y2="0"><stop offset="0" stop-color="#d2d2d2"/><stop offset="0.350" stop-color="#ececec"/><stop offset="1" stop-color="#e6e6e6"/></linearGradient></defs><rect x="3.0954" y="1.215" width="23.0546" height="23.49" fill="url(#sp1318_426)" stroke="#a2a2a2" stroke-width="1.300"/><path d="M0.700 2.814a2.5326 2.5326 0 0 1 5.0652 0V22.779a2.5326 3.3768 0 0 1 -5.0652 0Z" fill="#f1f1f1" stroke="#a2a2a2" stroke-width="1.200"/><path d="M0.700 22.4976C0.700 27.2 6.1908 26.6 7.8792 26.4H16.616C12.06 26.4 6.7536 25.8744 5.3466 21.9348" fill="#dcdcdc" stroke="#a8a8a8" stroke-width="1.100"/></g><path d="M1325.100 432.300H1339.300V447.200H1325.100ZM1339.300 447.200L1344.400 452.300" fill="none" stroke="#111" stroke-width="1.400"/><g transform="translate(1327 424)"><path d="M1.300 19.800C-1.500 12 3 6.600 12.300 6.600V0L21 9.300L12.300 18.500V12.200C6 12.200 2.500 14.500 1.300 19.800Z" fill="#ea7f34" stroke="#dd6f22" stroke-width="0.700" stroke-linejoin="round"/></g><g transform="translate(1378.5 426.5)"><defs><linearGradient id="sp1378_426" x1="0" y1="0" x2="1" y2="0"><stop offset="0" stop-color="#d2d2d2"/><stop offset="0.350" stop-color="#ececec"/><stop offset="1" stop-color="#e6e6e6"/></linearGradient></defs><rect x="3.0954" y="1.215" width="23.0546" height="23.49" fill="url(#sp1378_426)" stroke="#a2a2a2" stroke-width="1.300"/><path d="M0.700 2.814a2.5326 2.5326 0 0 1 5.0652 0V22.779a2.5326 3.3768 0 0 1 -5.0652 0Z" fill="#f1f1f1" stroke="#a2a2a2" stroke-width="1.200"/><path d="M0.700 22.4976C0.700 27.2 6.1908 26.6 7.8792 26.4H16.616C12.06 26.4 6.7536 25.8744 5.3466 21.9348" fill="#dcdcdc" stroke="#a8a8a8" stroke-width="1.100"/></g><text x="1383" y="452" font-family="Liberation Sans, sans-serif" font-size="10.500" letter-spacing="0.600" fill="#4a4a4a">1:23</text><g transform="translate(1376 424)"><path d="M0 11C0.500 3 5 -0.200 10 0C15 0.200 17.200 4 17.200 8V13.700H23.700L14.500 22.700L5.800 13.700H11.800V8.500C11.800 5.500 10 4.300 8 4.500C4.500 4.800 1.500 7.500 0 11Z" fill="#ea7f34" stroke="#dd6f22" stroke-width="0.700" stroke-linejoin="round"/></g><g transform="translate(1431.5 426.5)"><defs><linearGradient id="sp1431_426" x1="0" y1="0" x2="1" y2="0"><stop offset="0" stop-color="#d2d2d2"/><stop offset="0.350" stop-color="#ececec"/><stop offset="1" stop-color="#e6e6e6"/></linearGradient></defs><rect x="3.0954" y="1.215" width="23.0546" height="23.49" fill="url(#sp1431_426)" stroke="#a2a2a2" stroke-width="1.300"/><path d="M0.700 2.814a2.5326 2.5326 0 0 1 5.0652 0V22.779a2.5326 3.3768 0 0 1 -5.0652 0Z" fill="#f1f1f1" stroke="#a2a2a2" stroke-width="1.200"/><path d="M0.700 22.4976C0.700 27.2 6.1908 26.6 7.8792 26.4H16.616C12.06 26.4 6.7536 25.8744 5.3466 21.9348" fill="#dcdcdc" stroke="#a8a8a8" stroke-width="1.100"/></g><text x="1436" y="452" font-family="Liberation Sans, sans-serif" font-size="10.500" letter-spacing="0.600" fill="#4a4a4a">1:23</text><g transform="translate(1439.5 424)"><path d="M1.300 19.800C-1.500 12 3 6.600 12.300 6.600V0L21 9.300L12.300 18.500V12.200C6 12.200 2.500 14.500 1.300 19.800Z" fill="#ea7f34" stroke="#dd6f22" stroke-width="0.700" stroke-linejoin="round"/></g><g transform="translate(1491 426.2)"><defs><linearGradient id="sp1491_426" x1="0" y1="0" x2="1" y2="0"><stop offset="0" stop-color="#d2d2d2"/><stop offset="0.350" stop-color="#ececec"/><stop offset="1" stop-color="#e6e6e6"/></linearGradient></defs><rect x="3.003" y="1.206" width="22.347" height="23.316" fill="url(#sp1491_426)" stroke="#a2a2a2" stroke-width="1.300"/><path d="M0.700 2.73a2.457 2.457 0 0 1 4.914 0V22.705a2.457 3.276 0 0 1 -4.914 0Z" fill="#f1f1f1" stroke="#a2a2a2" stroke-width="1.200"/><path d="M0.700 22.432C0.700 27 6.006 26.4 7.644 26.2H16.12C11.7 26.2 6.552 25.708 5.187 21.886" fill="#dcdcdc" stroke="#a8a8a8" stroke-width="1.100"/></g><path d="M1505.800 425.500H1511.800V436.500L1508.800 440L1505.800 436.500Z" fill="#6f9acb" stroke="#45699b" stroke-width="1.100"/><path d="M1508 426.500V435.500" stroke="#a9c6e8" stroke-width="1.200"/><defs><linearGradient id="actb" x1="0" y1="0" x2="0" y2="1"><stop offset="0" stop-color="#b6b6b6"/><stop offset="1" stop-color="#999"/></linearGradient></defs><rect x="1533.300" y="417.500" width="47.200" height="47" rx="6" fill="url(#actb)" stroke="#2c2c2c" stroke-width="2.200"/><g transform="translate(1543.2 426.2)"><defs><linearGradient id="sp1543_426" x1="0" y1="0" x2="1" y2="0"><stop offset="0" stop-color="#d2d2d2"/><stop offset="0.350" stop-color="#ececec"/><stop offset="1" stop-color="#e6e6e6"/></linearGradient></defs><rect x="2.9568" y="1.206" width="21.9932" height="23.316" fill="url(#sp1543_426)" stroke="#a2a2a2" stroke-width="1.300"/><path d="M0.700 2.688a2.4192 2.4192 0 0 1 4.8384 0V22.768a2.4192 3.2256 0 0 1 -4.8384 0Z" fill="#f1f1f1" stroke="#a2a2a2" stroke-width="1.200"/><path d="M0.700 22.4992C0.700 27 5.9136 26.4 7.5264 26.2H15.872C11.52 26.2 6.4512 25.7248 5.1072 21.9616" fill="#dcdcdc" stroke="#a8a8a8" stroke-width="1.100"/></g><path d="M1559.800 429.200L1566 436H1562.400V441H1557.200V436H1553.600Z" fill="#6f9acb" stroke="#45699b" stroke-width="1"/><path d="M1550.500 439.500V443H1554V447H1550.500V450.500L1549.500 450.500V439.500Z" fill="#6f9acb" stroke="#45699b" stroke-width="1"/><rect x="1564.500" y="441.800" width="4" height="4.600" fill="#6f9acb" stroke="#45699b" stroke-width="0.900"/><rect x="1557.800" y="448.400" width="4.400" height="3.800" fill="#6f9acb" stroke="#45699b" stroke-width="0.900"/><path d="M1603 439.800L1607.600 433H1629.200V446.800H1607.600Z" fill="#ffec64" stroke="#d4a600" stroke-width="1.700" stroke-linejoin="round"/><text x="1618.200" y="444.300" text-anchor="middle" font-family="Liberation Mono, monospace" font-weight="bold" font-size="10.500" letter-spacing="0.200" fill="#111">abc</text><circle cx="1672.600" cy="435.200" r="9.600" fill="#7d8f80" stroke="#66776a" stroke-width="1" stroke-dasharray="2 1.600"/><rect x="1655" y="435.400" width="17.600" height="17.200" fill="#7d8f80" stroke="#66776a" stroke-width="1" stroke-dasharray="2 1.600"/><path d="M1663.400 435.600H1672.400V444.600A9.400 9.400 0 0 1 1663.400 435.600Z" fill="#8fa9c4" stroke="#6c8aa8" stroke-width="1"/></svg>
<div class="abs" style="left:1882.200px;top:474px;width:15.800px;height:895px;background:#363636;border-radius:4px 4px 0 0"></div>
<div class="abs" style="left:1882.200px;top:474px;width:15.800px;height:368px;box-sizing:border-box;border:1.800px solid #333;border-radius:4px;background:#757575"></div>
<svg style="left:1219.5px;top:507.5px" width="22" height="16" viewBox="0 0 22 16"><path d="M1.2 1.2H20.2L10.7 14.4Z" fill="#474747" stroke="#1a1a1a" stroke-width="2" stroke-linejoin="round"/></svg>
<span class="t" style="left:1257.09px;top:502.21px;font-size:25.50px;line-height:25.50px;color:#0c0c0c;letter-spacing:0.995px;font-weight:bold;">Main Properties</span>
<span class="t" style="left:1245.79px;top:566.94px;font-size:27.00px;line-height:27.00px;color:#111;letter-spacing:-0.393px;">Scale</span>
<div class="inp" style="left:1422px;top:556.5px;width:342px;height:47px;background:linear-gradient(90deg,#b4b4b4 0%,#b4b4b4 40%,#c2c2c2 70%,#b2b2b2 100%)"></div>
<span class="t" style="left:1431.01px;top:567.37px;font-size:26.50px;line-height:26.50px;color:#0a0a0a;letter-spacing:0.142px;">12206811</span>
<svg style="left:1782px;top:564.5px" width="52" height="34" viewBox="0 0 52 34"><path d="M10.500 4.600 L1.400 15 L10.500 25.600" fill="#96989c" stroke="#4a4c50" stroke-width="1.800" stroke-linejoin="round"/><rect x="10.900" y="0.900" width="24.200" height="30.200" fill="#d9d9d9" stroke="#83857f" stroke-width="1.800"/><line x1="10.900" y1="14.900" x2="35.100" y2="14.900" stroke="#83857f" stroke-width="1.700"/><line x1="17.200" y1="7.900" x2="29.200" y2="7.900" stroke="#55575a" stroke-width="4" stroke-linecap="round"/><line x1="16" y1="23" x2="30.200" y2="23" stroke="#55575a" stroke-width="1.800"/><path d="M41 23.400H48.800L44.900 30.800Z" fill="#b2b2b2"/></svg>
<span class="t" style="left:1244.84px;top:631.19px;font-size:27.00px;line-height:27.00px;color:#111;letter-spacing:0.390px;">Map rotation</span>
<div class="dark" style="left:1422px;top:620.5px;width:342px;height:47px"></div>
<span class="t" style="left:1431.94px;top:631.37px;font-size:26.50px;line-height:26.50px;color:#c9c9c9;letter-spacing:1.518px;">0.00 °</span>
<svg style="left:1745px;top:629.5px" width="8.5" height="7.5" viewBox="0 0 10 10" preserveAspectRatio="none"><path d="M0 10H10L5 0Z" fill="#b4b4b4"/></svg>
<svg style="left:1745px;top:651px" width="8.5" height="7.5" viewBox="0 0 10 10" preserveAspectRatio="none"><path d="M0 0H10L5 10Z" fill="#b4b4b4"/></svg>
<svg style="left:1782px;top:628px" width="52" height="34" viewBox="0 0 52 34"><path d="M10.500 4.600 L1.400 15 L10.500 25.600" fill="#96989c" stroke="#4a4c50" stroke-width="1.800" stroke-linejoin="round"/><rect x="10.900" y="0.900" width="24.200" height="30.200" fill="#d9d9d9" stroke="#83857f" stroke-width="1.800"/><line x1="10.900" y1="14.900" x2="35.100" y2="14.900" stroke="#83857f" stroke-width="1.700"/><line x1="17.200" y1="7.900" x2="29.200" y2="7.900" stroke="#55575a" stroke-width="4" stroke-linecap="round"/><line x1="16" y1="23" x2="30.200" y2="23" stroke="#55575a" stroke-width="1.800"/><path d="M41 23.400H48.800L44.900 30.800Z" fill="#b2b2b2"/></svg>
<span class="t" style="left:1245.65px;top:694.94px;font-size:27.00px;line-height:27.00px;color:#111;letter-spacing:-2.578px;">CRS</span>
<div class="dark" style="left:1422px;top:682.5px;width:284px;height:51px"></div>
<span class="t" style="left:1428.72px;top:694.94px;font-size:27.00px;line-height:27.00px;color:#c9c9c9;letter-spacing:-0.232px;">Use Project CRS</span>
<svg style="left:1686px;top:705px" width="9" height="8.5" viewBox="0 0 10 10" preserveAspectRatio="none"><path d="M0 0H10L5 10Z" fill="#c4c4c4"/></svg>
<div class="btn" style="left:1714.5px;top:683px;width:49.5px;height:48.5px"></div>
<svg style="left:1722px;top:690px" width="34" height="34" viewBox="0 0 34 34"><circle cx="13.500" cy="18" r="11.600" fill="#cfe4fa" stroke="#5d8fd0" stroke-width="1.300"/><path d="M13.500 6.400V29.600M2 18H25M4 11.500H23M4 24.500H23M13.500 6.400C7 11 7 25 13.500 29.600M13.500 6.400C20 11 20 25 13.500 29.600" fill="none" stroke="#5d8fd0" stroke-width="1.100"/><path d="M1 13.500L7.500 2.500C11.500 0.800 20.500 0.800 24.500 2.500L31 13.500C22 17 10 17 1 13.500Z" fill="#e9e9e9" stroke="#a9a9a9" stroke-width="1"/><path d="M4.500 8.200C12 10.500 20 10.500 27.500 8.200M16 1.200V16M10 2L7 15.200M22 2L25 15.200" fill="none" stroke="#a9a9a9" stroke-width="1"/><rect x="17.500" y="17.500" width="15" height="15" rx="2.600" fill="#c9a200"/><path d="M18.300 25V20.600a2.300 2.300 0 0 1 2.300-2.300H29.400a2.300 2.300 0 0 1 2.300 2.300V25Z" fill="#d8bc48"/><path d="M21.500 28.500L28.500 21.500" stroke="#fff" stroke-width="3.200" stroke-linecap="round"/></svg>
<svg style="left:1782px;top:692px" width="52" height="34" viewBox="0 0 52 34"><path d="M10.500 4.600 L1.400 15 L10.500 25.600" fill="#96989c" stroke="#4a4c50" stroke-width="1.800" stroke-linejoin="round"/><rect x="10.900" y="0.900" width="24.200" height="30.200" fill="#d9d9d9" stroke="#83857f" stroke-width="1.800"/><line x1="10.900" y1="14.900" x2="35.100" y2="14.900" stroke="#83857f" stroke-width="1.700"/><line x1="17.200" y1="7.900" x2="29.200" y2="7.900" stroke="#55575a" stroke-width="4" stroke-linecap="round"/><line x1="16" y1="23" x2="30.200" y2="23" stroke="#55575a" stroke-width="1.800"/><path d="M41 23.400H48.800L44.900 30.800Z" fill="#b2b2b2"/></svg>
<div class="cb" style="left:1240.5px;top:750.5px"></div>
<svg style="left:1240.5px;top:750.5px" width="25" height="25" viewBox="0 0 25 25"><path d="M5.2 13.2L10 19.3L19.8 5" fill="none" stroke="#1c1c1c" stroke-width="2.6" stroke-linecap="round" stroke-linejoin="round"/></svg>
<span class="t" style="left:1278.59px;top:750.44px;font-size:27.00px;line-height:27.00px;color:#111;letter-spacing:0.026px;">Draw map canvas items</span>
<svg style="left:1219.5px;top:827.5px" width="22" height="16" viewBox="0 0 22 16"><path d="M1.2 1.2H20.2L10.7 14.4Z" fill="#474747" stroke="#1a1a1a" stroke-width="2" stroke-linejoin="round"/></svg>
<span class="t" style="left:1257.09px;top:822.96px;font-size:25.50px;line-height:25.50px;color:#0c0c0c;letter-spacing:0.838px;font-weight:bold;">Layers</span>
<div class="cb" style="left:1240.5px;top:886.25px"></div>
<span class="t" style="left:1278.59px;top:886.19px;font-size:27.00px;line-height:27.00px;color:#111;letter-spacing:0.019px;">Follow map theme</span>
<div class="dark" style="left:1514px;top:876.5px;width:250px;height:47px"></div>
<span class="t" style="left:1522.88px;top:885.94px;font-size:27.00px;line-height:27.00px;color:#c9c9c9;letter-spacing:0.242px;">(none)</span>
<svg style="left:1745px;top:897.5px" width="8.5" height="7.5" viewBox="0 0 10 10" preserveAspectRatio="none"><path d="M0 0H10L5 10Z" fill="#c4c4c4"/></svg>
<svg style="left:1782px;top:884.5px" width="52" height="34" viewBox="0 0 52 34"><path d="M10.500 4.600 L1.400 15 L10.500 25.600" fill="#96989c" stroke="#4a4c50" stroke-width="1.800" stroke-linejoin="round"/><rect x="10.900" y="0.900" width="24.200" height="30.200" fill="#d9d9d9" stroke="#83857f" stroke-width="1.800"/><line x1="10.900" y1="14.900" x2="35.100" y2="14.900" stroke="#83857f" stroke-width="1.700"/><line x1="17.200" y1="7.900" x2="29.200" y2="7.900" stroke="#55575a" stroke-width="4" stroke-linecap="round"/><line x1="16" y1="23" x2="30.200" y2="23" stroke="#55575a" stroke-width="1.800"/><path d="M41 23.400H48.800L44.900 30.800Z" fill="#b2b2b2"/></svg>
<div class="cb" style="left:1240.5px;top:950.5px"></div>
<span class="t" style="left:1278.59px;top:950.44px;font-size:27.00px;line-height:27.00px;color:#111;letter-spacing:0.248px;">Lock layers</span>
<div class="btn" style="left:1714.5px;top:938.75px;width:49.5px;height:48.5px"></div>
<svg style="left:1722px;top:948px" width="36" height="30" viewBox="0 0 36 30"><path d="M3 9C9 4.500 21 4 28 9" fill="none" stroke="#8d8d8d" stroke-width="1.200"/><path d="M1.500 16.500C8 7.500 22 7.500 28.500 16.500C22 24.500 8 24.500 1.500 16.500Z" fill="#fff" stroke="#a9a9a9" stroke-width="0.900"/><circle cx="15" cy="15.600" r="6.800" fill="#6f9ed4" stroke="#3e68a0" stroke-width="1.100"/><circle cx="15" cy="15.600" r="2.700" fill="#0a0a0a"/><circle cx="13.600" cy="13.800" r="1.100" fill="#fff"/><path d="M27.500 21.500H35L31.200 28.500Z" fill="#bdbdbd"/></svg>
<svg style="left:1782px;top:948.25px" width="52" height="34" viewBox="0 0 52 34"><path d="M10.500 4.600 L1.400 15 L10.500 25.600" fill="#96989c" stroke="#4a4c50" stroke-width="1.800" stroke-linejoin="round"/><rect x="10.900" y="0.900" width="24.200" height="30.200" fill="#d9d9d9" stroke="#83857f" stroke-width="1.800"/><line x1="10.900" y1="14.900" x2="35.100" y2="14.900" stroke="#83857f" stroke-width="1.700"/><line x1="17.200" y1="7.900" x2="29.200" y2="7.900" stroke="#55575a" stroke-width="4" stroke-linecap="round"/><line x1="16" y1="23" x2="30.200" y2="23" stroke="#55575a" stroke-width="1.800"/><path d="M41 23.400H48.800L44.900 30.800Z" fill="#b2b2b2"/></svg>
<div class="cb" style="left:1240.5px;top:1006.5px;background:#757575"></div>
<span class="t" style="left:1278.59px;top:1006.19px;font-size:27.00px;line-height:27.00px;color:#a2a2a2;letter-spacing:0.289px;">Lock styles for layers</span>
<svg style="left:1219.5px;top:1084px" width="22" height="16" viewBox="0 0 22 16"><path d="M1.2 1.2H20.2L10.7 14.4Z" fill="#474747" stroke="#1a1a1a" stroke-width="2" stroke-linejoin="round"/></svg>
<span class="t" style="left:1257.34px;top:1079.21px;font-size:25.50px;line-height:25.50px;color:#0c0c0c;letter-spacing:1.054px;font-weight:bold;">Extents</span>
<div class="abs" style="left:1190px;top:1120px;width:690px;height:249px;overflow:hidden">
<div class="inp" style="left:154.5px;top:13px;width:419px;height:46.5px"></div>
<div class="inp" style="left:154.5px;top:76.6px;width:419px;height:46.5px"></div>
<div class="inp" style="left:154.5px;top:141px;width:419px;height:46.5px"></div>
<div class="inp" style="left:154.5px;top:204.7px;width:419px;height:46.5px"></div>
</div>
<span class="t" style="left:1246.33px;top:1143.14px;font-size:27.00px;line-height:27.00px;color:#111;letter-spacing:-0.214px;">X min</span>
<span class="t" style="left:1353.38px;top:1143.57px;font-size:26.50px;line-height:26.50px;color:#0a0a0a;letter-spacing:1.326px;">67.394</span>
<svg style="left:1782px;top:1140.5px" width="52" height="34" viewBox="0 0 52 34"><path d="M10.500 4.600 L1.400 15 L10.500 25.600" fill="#96989c" stroke="#4a4c50" stroke-width="1.800" stroke-linejoin="round"/><rect x="10.900" y="0.900" width="24.200" height="30.200" fill="#d9d9d9" stroke="#83857f" stroke-width="1.800"/><line x1="10.900" y1="14.900" x2="35.100" y2="14.900" stroke="#83857f" stroke-width="1.700"/><line x1="17.200" y1="7.900" x2="29.200" y2="7.900" stroke="#55575a" stroke-width="4" stroke-linecap="round"/><line x1="16" y1="23" x2="30.200" y2="23" stroke="#55575a" stroke-width="1.800"/><path d="M41 23.400H48.800L44.900 30.800Z" fill="#b2b2b2"/></svg>
<span class="t" style="left:1246.33px;top:1207.24px;font-size:27.00px;line-height:27.00px;color:#111;letter-spacing:-0.079px;">Y min</span>
<span class="t" style="left:1353.64px;top:1207.67px;font-size:26.50px;line-height:26.50px;color:#0a0a0a;letter-spacing:2.143px;">0.288</span>
<svg style="left:1782px;top:1204.1px" width="52" height="34" viewBox="0 0 52 34"><path d="M10.500 4.600 L1.400 15 L10.500 25.600" fill="#96989c" stroke="#4a4c50" stroke-width="1.800" stroke-linejoin="round"/><rect x="10.900" y="0.900" width="24.200" height="30.200" fill="#d9d9d9" stroke="#83857f" stroke-width="1.800"/><line x1="10.900" y1="14.900" x2="35.100" y2="14.900" stroke="#83857f" stroke-width="1.700"/><line x1="17.200" y1="7.900" x2="29.200" y2="7.900" stroke="#55575a" stroke-width="4" stroke-linecap="round"/><line x1="16" y1="23" x2="30.200" y2="23" stroke="#55575a" stroke-width="1.800"/><path d="M41 23.400H48.800L44.900 30.800Z" fill="#b2b2b2"/></svg>
<span class="t" style="left:1246.33px;top:1271.14px;font-size:27.00px;line-height:27.00px;color:#111;letter-spacing:-0.725px;">X max</span>
<span class="t" style="left:1353.51px;top:1271.57px;font-size:26.50px;line-height:26.50px;color:#0a0a0a;letter-spacing:2.345px;">98.002</span>
<svg style="left:1782px;top:1268.5px" width="52" height="34" viewBox="0 0 52 34"><path d="M10.500 4.600 L1.400 15 L10.500 25.600" fill="#96989c" stroke="#4a4c50" stroke-width="1.800" stroke-linejoin="round"/><rect x="10.900" y="0.900" width="24.200" height="30.200" fill="#d9d9d9" stroke="#83857f" stroke-width="1.800"/><line x1="10.900" y1="14.900" x2="35.100" y2="14.900" stroke="#83857f" stroke-width="1.700"/><line x1="17.200" y1="7.900" x2="29.200" y2="7.900" stroke="#55575a" stroke-width="4" stroke-linecap="round"/><line x1="16" y1="23" x2="30.200" y2="23" stroke="#55575a" stroke-width="1.800"/><path d="M41 23.400H48.800L44.900 30.800Z" fill="#b2b2b2"/></svg>
<span class="t" style="left:1246.33px;top:1335.14px;font-size:27.00px;line-height:27.00px;color:#111;letter-spacing:-0.765px;">Y max</span>
<span class="t" style="left:1354.17px;top:1335.57px;font-size:26.50px;line-height:26.50px;color:#0a0a0a;letter-spacing:1.840px;">43.576</span>
<svg style="left:1782px;top:1332.2px" width="52" height="34" viewBox="0 0 52 34"><path d="M10.500 4.600 L1.400 15 L10.500 25.600" fill="#96989c" stroke="#4a4c50" stroke-width="1.800" stroke-linejoin="round"/><rect x="10.900" y="0.900" width="24.200" height="30.200" fill="#d9d9d9" stroke="#83857f" stroke-width="1.800"/><line x1="10.900" y1="14.900" x2="35.100" y2="14.900" stroke="#83857f" stroke-width="1.700"/><line x1="17.200" y1="7.900" x2="29.200" y2="7.900" stroke="#55575a" stroke-width="4" stroke-linecap="round"/><line x1="16" y1="23" x2="30.200" y2="23" stroke="#55575a" stroke-width="1.800"/><path d="M41 23.400H48.800L44.900 30.800Z" fill="#b2b2b2"/></svg>
<div class="inp" style="left:1433px;top:1381px;width:240.5px;height:60px;background:#b5b5b5"></div>
<div class="abs" style="left:1643.5px;top:1383.5px;width:26px;height:40px;background:#3c3c3c;border-radius:3px"></div>
<svg style="left:1652px;top:1401px" width="9" height="8.5" viewBox="0 0 10 10" preserveAspectRatio="none"><path d="M0 0H10L5 10Z" fill="#d0d0d0"/></svg>
<span class="t" style="left:1441.65px;top:1390.94px;font-size:27.00px;line-height:27.00px;color:#0a0a0a;letter-spacing:1.062px;">66.4%</span>
<div class="abs" style="left:1688.5px;top:1394px;width:195.5px;height:15.5px;background:#3a3a3a;border-radius:4px"></div>
<div class="abs" style="left:1688.5px;top:1394px;width:14px;height:15.5px;box-sizing:border-box;background:#c6c6c6;border:1.5px solid #3a3a3a;border-radius:4px 0 0 4px"></div>
<div class="abs" style="left:1697px;top:1392.5px;width:43.5px;height:19px;box-sizing:border-box;background:linear-gradient(90deg,#c4c4c4,#909090);border:1.5px solid #3a3a3a;border-radius:4px"></div>
<div id="tip"></div>
<span class="t" style="left:1554.97px;top:530.15px;font-size:22.50px;line-height:22.50px;color:#d2d2d2;letter-spacing:0.538px;">Interactively Edit Map Extent</span>
<div id="hl"></div>
<div id="ring"></div>
<span class="t" style="left:13.92px;top:1390.44px;font-size:27.00px;line-height:27.00px;color:#111;letter-spacing:0.200px;">dx: 0 mm dy: 0 mm</span>
<span class="t" style="left:804.73px;top:1391.44px;font-size:27.00px;line-height:27.00px;color:#111;letter-spacing:-0.568px;">x: 112 mm</span>
<span class="t" style="left:1016.87px;top:1391.44px;font-size:27.00px;line-height:27.00px;color:#111;letter-spacing:0.128px;">y: 0 mm</span>
<span class="t" style="left:1227.24px;top:1390.94px;font-size:27.00px;line-height:27.00px;color:#111;letter-spacing:-0.429px;">page: 1</span>
</body></html>
